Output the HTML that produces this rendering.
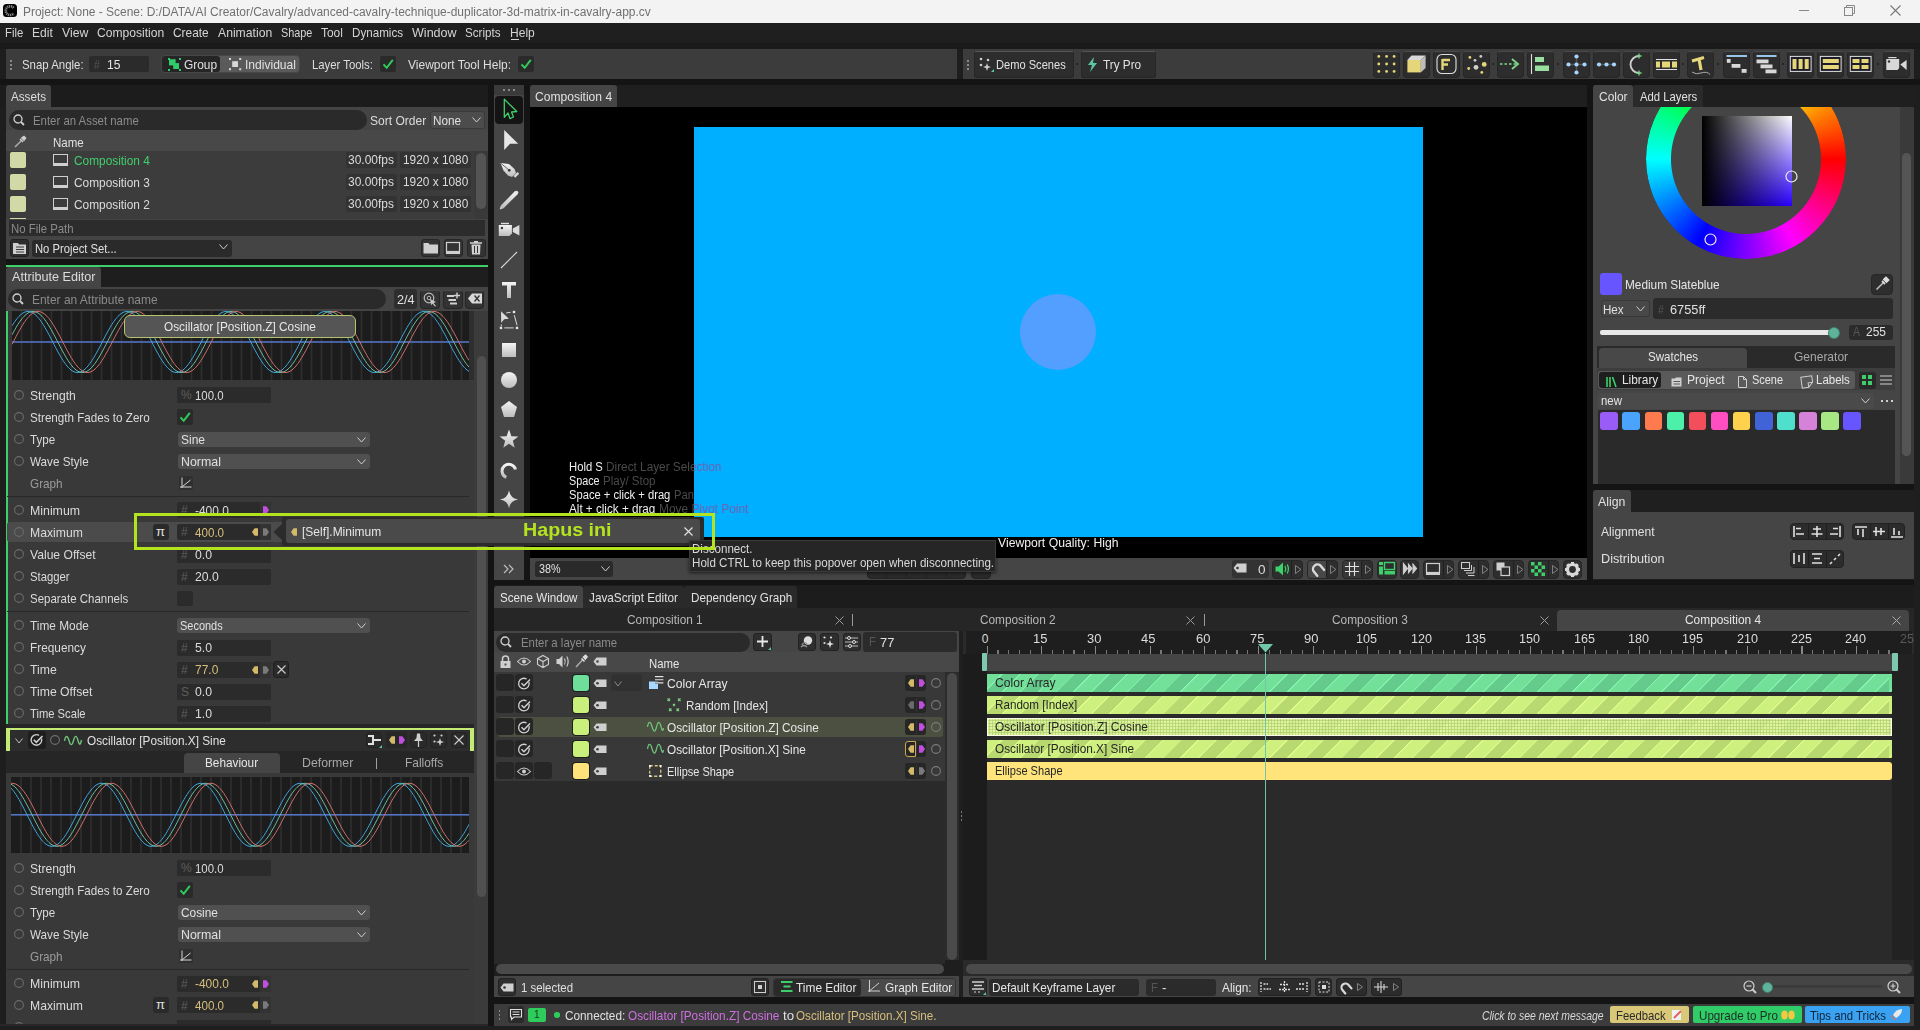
<!DOCTYPE html>
<html><head><meta charset="utf-8">
<style>
*{box-sizing:border-box;margin:0;padding:0}
html,body{width:1920px;height:1030px;overflow:hidden;background:#1e1e1e;font-family:"Liberation Sans",sans-serif;color:#d8d8d8;font-size:13px}
.a{position:absolute}
.t{position:absolute;white-space:nowrap;line-height:1}
svg{overflow:visible}
</style></head><body>
<div class="a" style="left:0px;top:0px;width:1920px;height:23px;background:#f3f3f3;"></div>
<div class="a" style="left:3.4px;top:4.2px;width:13.2px;height:13.3px;background:#000;border-radius:3.5px"></div>
<svg class="a" style="left:3.4px;top:4.2px;" width="13.2" height="13.3" viewBox="0 0 13.2 13.3"><path d="M10.6 3.9 A4.4 4.4 0 1 0 10.6 9.4" fill="none" stroke="#8a8a8a" stroke-width="2.6" stroke-dasharray="1.2 0.7"></path></svg>
<div class="t" style="left: 23px; top: 6.04px; font-size: 12px; color: rgb(112, 112, 112); transform: scaleX(0.9968); transform-origin: 0px 0px;">Project: None - Scene: D:/DATA/AI Creator/Cavalry/advanced-cavalry-technique-duplicator-3d-matrix-in-cavalry-app.cv</div>
<div class="a" style="left:1799px;top:10px;width:10px;height:1px;background:#888;"></div>
<svg class="a" style="left:1843px;top:5px;" width="12" height="12" viewBox="0 0 12 12"><rect x="1.5" y="2.5" width="8" height="8" fill="none" stroke="#888" stroke-width="1"></rect><path d="M3.5 2.5 V0.5 H11.5 V8.5 H9.5" fill="none" stroke="#888" stroke-width="1"></path></svg>
<svg class="a" style="left:1889.5px;top:4.5px;" width="11" height="11" viewBox="0 0 11 11"><path d="M0.5 0.5 L10.5 10.5 M10.5 0.5 L0.5 10.5" stroke="#777" stroke-width="1.1"></path></svg>
<div class="a" style="left:0px;top:23px;width:1920px;height:26px;background:#1f1f1f;"></div>
<div class="a" style="left:0px;top:42.5px;width:1920px;height:6.5px;background:#1a1a1a;"></div>
<div class="t" style="left: 4.7px; top: 25.8px; font-size: 13px; color: rgb(212, 212, 212); transform: scaleX(0.8714); transform-origin: 0px 0px;">File</div>
<div class="t" style="left: 32.3px; top: 25.8px; font-size: 13px; color: rgb(212, 212, 212); transform: scaleX(0.9273); transform-origin: 0px 0px;">Edit</div>
<div class="t" style="left: 62.3px; top: 25.8px; font-size: 13px; color: rgb(212, 212, 212); transform: scaleX(0.9429); transform-origin: 0px 0px;">View</div>
<div class="t" style="left: 97.3px; top: 25.8px; font-size: 13px; color: rgb(212, 212, 212); transform: scaleX(0.9306); transform-origin: 0px 0px;">Composition</div>
<div class="t" style="left: 173.3px; top: 25.8px; font-size: 13px; color: rgb(212, 212, 212); transform: scaleX(0.9154); transform-origin: 0px 0px;">Create</div>
<div class="t" style="left: 218.3px; top: 25.8px; font-size: 13px; color: rgb(212, 212, 212); transform: scaleX(0.9379); transform-origin: 0px 0px;">Animation</div>
<div class="t" style="left: 281px; top: 25.8px; font-size: 13px; color: rgb(212, 212, 212); transform: scaleX(0.8342); transform-origin: 0px 0px;">Shape</div>
<div class="t" style="left: 321.3px; top: 25.8px; font-size: 13px; color: rgb(212, 212, 212); transform: scaleX(0.9167); transform-origin: 0px 0px;">Tool</div>
<div class="t" style="left: 352.3px; top: 25.8px; font-size: 13px; color: rgb(212, 212, 212); transform: scaleX(0.8947); transform-origin: 0px 0px;">Dynamics</div>
<div class="t" style="left: 412.3px; top: 25.8px; font-size: 13px; color: rgb(212, 212, 212); transform: scaleX(0.9652); transform-origin: 0px 0px;">Window</div>
<div class="t" style="left: 465.3px; top: 25.8px; font-size: 13px; color: rgb(212, 212, 212); transform: scaleX(0.8925); transform-origin: 0px 0px;">Scripts</div>
<div class="t" style="left: 510.3px; top: 25.8px; font-size: 13px; color: rgb(212, 212, 212); transform: scaleX(0.9259); transform-origin: 0px 0px;">Help</div>
<div class="a" style="left:510.5px;top:38.6px;width:8.5px;height:1px;background:#d4d4d4;"></div>
<div class="a" style="left:0px;top:79px;width:1920px;height:6px;background:#141414;"></div>
<div class="a" style="left:6px;top:49px;width:951px;height:30px;background:#3c3c3c;"></div>
<div class="a" style="left:963px;top:49px;width:951px;height:30px;background:#3c3c3c;"></div>
<div class="a" style="left:10px;top:59.5px;width:2px;height:2.5px;background:#8a8a8a;"></div>
<div class="a" style="left:967px;top:59.5px;width:2px;height:2.5px;background:#8a8a8a;"></div>
<div class="a" style="left:10px;top:63.5px;width:2px;height:2.5px;background:#8a8a8a;"></div>
<div class="a" style="left:967px;top:63.5px;width:2px;height:2.5px;background:#8a8a8a;"></div>
<div class="a" style="left:10px;top:67.5px;width:2px;height:2.5px;background:#8a8a8a;"></div>
<div class="a" style="left:967px;top:67.5px;width:2px;height:2.5px;background:#8a8a8a;"></div>
<div class="t" style="left: 22px; top: 58px; font-size: 13px; color: rgb(222, 222, 222); transform: scaleX(0.8786); transform-origin: 0px 0px;">Snap Angle:</div>
<div class="a" style="left:89px;top:56px;width:60px;height:16px;background:#2b2b2b;border-radius:2px"></div>
<div class="t" style="left: 94px; top: 58.84px; font-size: 12px; color: rgb(85, 85, 85); transform: scaleX(0.8571); transform-origin: 0px 0px;">#</div>
<div class="t" style="left: 106.5px; top: 58px; font-size: 13px; color: rgb(230, 230, 230); transform: scaleX(0.9286); transform-origin: 0px 0px;">15</div>
<div class="a" style="left:161px;top:55px;width:139px;height:18px;background:#5a5a5a;border-radius:4px;border:1px solid #474747"></div>
<div class="a" style="left:162px;top:56px;width:58px;height:16px;background:#252525;border-radius:3px"></div>
<svg class="a" style="left:167.8px;top:57.8px;" width="13" height="13" viewBox="0 0 13 13"><g fill="#2ecc6a"><rect x="1" y="1.2" width="6.6" height="6.2"></rect><rect x="5.2" y="5.1" width="5.8" height="5.9"></rect><rect x="0" y="0" width="2" height="2"></rect><rect x="11" y="0" width="2" height="2"></rect><rect x="0" y="11" width="2" height="2"></rect><rect x="11" y="11" width="2" height="2"></rect></g></svg>
<div class="t" style="left: 184px; top: 58px; font-size: 13px; color: rgb(224, 224, 224); transform: scaleX(0.9167); transform-origin: 0px 0px;">Group</div>
<svg class="a" style="left:228.8px;top:57.8px;" width="13" height="13" viewBox="0 0 13 13"><g fill="#d8d8d8"><rect x="3.2" y="3.2" width="5.8" height="5.8"></rect><rect x="0" y="0" width="2" height="2"></rect><rect x="10.2" y="0" width="2" height="2"></rect><rect x="0" y="10.2" width="2" height="2"></rect><rect x="10.2" y="10.2" width="2" height="2"></rect></g></svg>
<div class="t" style="left: 245px; top: 58px; font-size: 13px; color: rgb(224, 224, 224); transform: scaleX(0.9273); transform-origin: 0px 0px;">Individual</div>
<div class="t" style="left: 312px; top: 58px; font-size: 13px; color: rgb(222, 222, 222); transform: scaleX(0.8714); transform-origin: 0px 0px;">Layer Tools:</div>
<div class="a" style="left:380px;top:56px;width:16px;height:16px;background:#2a2a2a;border-radius:2px"></div>
<svg class="a" style="left:380px;top:56px;" width="16" height="16" viewBox="0 0 16 16"><path d="M3.5 8.3 L6.7 11.8 L12.8 3.8" fill="none" stroke="#2ecc5a" stroke-width="2"></path></svg>
<div class="t" style="left: 408px; top: 58px; font-size: 13px; color: rgb(222, 222, 222); transform: scaleX(0.9241); transform-origin: 0px 0px;">Viewport Tool Help:</div>
<div class="a" style="left:518px;top:56px;width:16px;height:16px;background:#2a2a2a;border-radius:2px"></div>
<svg class="a" style="left:518px;top:56px;" width="16" height="16" viewBox="0 0 16 16"><path d="M3.5 8.3 L6.7 11.8 L12.8 3.8" fill="none" stroke="#2ecc5a" stroke-width="2"></path></svg>
<div class="a" style="left:974px;top:51px;width:100px;height:27px;background:#2d2d2d;border-radius:3px;border:1px solid #262626;border-top-color:#555"></div>
<svg class="a" style="left:979px;top:57px;" width="16" height="16" viewBox="0 0 16 16"><g fill="#cfcfcf"><circle cx="2" cy="2" r="1.3"></circle><circle cx="9" cy="3" r="1.3"></circle><circle cx="2" cy="8" r="1.3"></circle><path d="M8 6 L9 9 L12 10 L9 11 L8 14 L7 11 L4 10 L7 9Z"></path></g><path d="M12 15 L15 12 L15 15Z" fill="#5cc8a0"></path></svg>
<div class="t" style="left: 996px; top: 58px; font-size: 13px; color: rgb(224, 224, 224); transform: scaleX(0.8537); transform-origin: 0px 0px;">Demo Scenes</div>
<div class="a" style="left:1076px;top:63px;width:2px;height:2px;background:#222;"></div>
<div class="a" style="left:1081px;top:51px;width:75px;height:27px;background:#2d2d2d;border-radius:3px;border:1px solid #262626;border-top-color:#555"></div>
<svg class="a" style="left:1088px;top:57px;" width="9" height="15" viewBox="0 0 9 15"><path d="M6 0 L0 8 L4 8 L2 15 L9 6 L5 6 Z" fill="#5cc8a0"></path></svg>
<div class="t" style="left: 1103px; top: 58px; font-size: 13px; color: rgb(224, 224, 224); transform: scaleX(0.9048); transform-origin: 0px 0px;">Try Pro</div>
<div class="a" style="left:1373px;top:51px;width:27px;height:27px;background:#2d2d2d;border-radius:4px;border:1px solid #262626;border-top-color:#4a4a4a"></div>
<div class="a" style="left:1403px;top:51px;width:27px;height:27px;background:#2d2d2d;border-radius:4px;border:1px solid #262626;border-top-color:#4a4a4a"></div>
<div class="a" style="left:1433px;top:51px;width:27px;height:27px;background:#2d2d2d;border-radius:4px;border:1px solid #262626;border-top-color:#4a4a4a"></div>
<div class="a" style="left:1463px;top:51px;width:27px;height:27px;background:#2d2d2d;border-radius:4px;border:1px solid #262626;border-top-color:#4a4a4a"></div>
<div class="a" style="left:1497px;top:51px;width:27px;height:27px;background:#2d2d2d;border-radius:4px;border:1px solid #262626;border-top-color:#4a4a4a"></div>
<div class="a" style="left:1527px;top:51px;width:27px;height:27px;background:#2d2d2d;border-radius:4px;border:1px solid #262626;border-top-color:#4a4a4a"></div>
<div class="a" style="left:1563px;top:51px;width:27px;height:27px;background:#2d2d2d;border-radius:4px;border:1px solid #262626;border-top-color:#4a4a4a"></div>
<div class="a" style="left:1593px;top:51px;width:27px;height:27px;background:#2d2d2d;border-radius:4px;border:1px solid #262626;border-top-color:#4a4a4a"></div>
<div class="a" style="left:1623px;top:51px;width:27px;height:27px;background:#2d2d2d;border-radius:4px;border:1px solid #262626;border-top-color:#4a4a4a"></div>
<div class="a" style="left:1653px;top:51px;width:27px;height:27px;background:#2d2d2d;border-radius:4px;border:1px solid #262626;border-top-color:#4a4a4a"></div>
<div class="a" style="left:1687px;top:51px;width:27px;height:27px;background:#2d2d2d;border-radius:4px;border:1px solid #262626;border-top-color:#4a4a4a"></div>
<div class="a" style="left:1723px;top:51px;width:27px;height:27px;background:#2d2d2d;border-radius:4px;border:1px solid #262626;border-top-color:#4a4a4a"></div>
<div class="a" style="left:1753px;top:51px;width:27px;height:27px;background:#2d2d2d;border-radius:4px;border:1px solid #262626;border-top-color:#4a4a4a"></div>
<div class="a" style="left:1787px;top:51px;width:27px;height:27px;background:#2d2d2d;border-radius:4px;border:1px solid #262626;border-top-color:#4a4a4a"></div>
<div class="a" style="left:1817px;top:51px;width:27px;height:27px;background:#2d2d2d;border-radius:4px;border:1px solid #262626;border-top-color:#4a4a4a"></div>
<div class="a" style="left:1847px;top:51px;width:27px;height:27px;background:#2d2d2d;border-radius:4px;border:1px solid #262626;border-top-color:#4a4a4a"></div>
<div class="a" style="left:1883px;top:51px;width:27px;height:27px;background:#2d2d2d;border-radius:4px;border:1px solid #262626;border-top-color:#4a4a4a"></div>
<div class="a" style="left:1492px;top:63px;width:2px;height:2px;background:#252525;"></div>
<div class="a" style="left:1557px;top:63px;width:2px;height:2px;background:#252525;"></div>
<div class="a" style="left:1682px;top:63px;width:2px;height:2px;background:#252525;"></div>
<div class="a" style="left:1717px;top:63px;width:2px;height:2px;background:#252525;"></div>
<div class="a" style="left:1782px;top:63px;width:2px;height:2px;background:#252525;"></div>
<div class="a" style="left:1877px;top:63px;width:2px;height:2px;background:#252525;"></div>
<div class="a" style="left:0px;top:85px;width:1920px;height:22px;background:#1c1c1c;"></div>
<div class="a" style="left:6px;top:85px;width:45px;height:22px;background:#454545;border-radius:3px 3px 0 0"></div>
<div class="t" style="left: 11px; top: 90px; font-size: 13px; color: rgb(220, 220, 220); transform: scaleX(0.8974); transform-origin: 0px 0px;">Assets</div>
<div class="a" style="left:6px;top:107px;width:482px;height:152px;background:#444444;"></div>
<div class="a" style="left:9px;top:110px;width:358px;height:20px;background:#2a2a2a;border-radius:10px"></div>
<svg class="a" style="left:13px;top:114px;" width="12" height="12" viewBox="0 0 12 12"><circle cx="5" cy="5" r="4" fill="none" stroke="#cfcfcf" stroke-width="1.3"></circle><path d="M8 8 L11 11" stroke="#cfcfcf" stroke-width="1.8"></path></svg>
<div class="t" style="left: 33.3px; top: 113.8px; font-size: 13px; color: rgb(140, 140, 140); transform: scaleX(0.876); transform-origin: 0px 0px;">Enter an Asset name</div>
<div class="t" style="left: 370px; top: 113.8px; font-size: 13px; color: rgb(220, 220, 220); transform: scaleX(0.9262); transform-origin: 0px 0px;">Sort Order</div>
<div class="a" style="left:430px;top:111px;width:55px;height:18px;background:#4c4c4c;border-radius:3px;border:1px solid #3a3a3a"></div>
<div class="t" style="left: 433px; top: 113.8px; font-size: 13px; color: rgb(224, 224, 224); transform: scaleX(0.9032); transform-origin: 0px 0px;">None</div>
<svg class="a" style="left:472px;top:117px;" width="9" height="6" viewBox="0 0 9 6"><path d="M0.5 0.5 L4.5 5 L8.5 0.5" fill="none" stroke="#cfcfcf" stroke-width="1"></path></svg>
<div class="a" style="left:6px;top:130px;width:482px;height:21px;background:#484848;"></div>
<svg class="a" style="left:14px;top:136px;" width="12" height="12" viewBox="0 0 12 12"><path d="M1 11 L7 5" stroke="#aaa" stroke-width="1.6"></path><path d="M6 3 L9 6 M8 2 L10 0.5 L11.5 2 L10 4Z" stroke="#ccc" stroke-width="1.6" fill="#ccc"></path></svg>
<div class="t" style="left: 53px; top: 136px; font-size: 13px; color: rgb(224, 224, 224); transform: scaleX(0.8857); transform-origin: 0px 0px;">Name</div>
<div class="a" style="left:6px;top:151px;width:468px;height:68px;background:#3c3c3c;"></div>
<div class="a" style="left:474px;top:151px;width:14px;height:68px;background:#393939;"></div>
<div class="a" style="left:476px;top:153px;width:10px;height:56px;background:#545454;border-radius:5px"></div>
<div class="a" style="left:10px;top:152px;width:16px;height:16px;background:#d2d9a6;border-radius:2px"></div>
<svg class="a" style="left:53px;top:154px;" width="15" height="12" viewBox="0 0 15 12"><rect x="0.5" y="0.5" width="14" height="9" fill="none" stroke="#cfcfcf" stroke-width="1"></rect><rect x="0" y="10" width="15" height="2" fill="#cfcfcf"></rect></svg>
<div class="t" style="left: 74.3px; top: 154.2px; font-size: 13px; color: rgb(63, 207, 107); transform: scaleX(0.912); transform-origin: 0px 0px;">Composition 4</div>
<div class="a" style="left:346px;top:152px;width:51px;height:16px;background:#333333;border-radius:2px"></div>
<div class="t" style="left: 348px; top: 152.5px; font-size: 13px; color: rgb(220, 220, 220); transform: scaleX(0.92); transform-origin: 0px 0px;">30.00fps</div>
<div class="a" style="left:400px;top:152px;width:71px;height:16px;background:#333333;border-radius:2px"></div>
<div class="t" style="left: 402.6px; top: 152.5px; font-size: 13px; color: rgb(220, 220, 220); transform: scaleX(0.9125); transform-origin: 0px 0px;">1920 x 1080</div>
<div class="a" style="left:10px;top:174px;width:16px;height:16px;background:#d2d9a6;border-radius:2px"></div>
<svg class="a" style="left:53px;top:176px;" width="15" height="12" viewBox="0 0 15 12"><rect x="0.5" y="0.5" width="14" height="9" fill="none" stroke="#cfcfcf" stroke-width="1"></rect><rect x="0" y="10" width="15" height="2" fill="#cfcfcf"></rect></svg>
<div class="t" style="left: 74.3px; top: 176.2px; font-size: 13px; color: rgb(220, 220, 220); transform: scaleX(0.912); transform-origin: 0px 0px;">Composition 3</div>
<div class="a" style="left:346px;top:174px;width:51px;height:16px;background:#333333;border-radius:2px"></div>
<div class="t" style="left: 348px; top: 174.5px; font-size: 13px; color: rgb(220, 220, 220); transform: scaleX(0.92); transform-origin: 0px 0px;">30.00fps</div>
<div class="a" style="left:400px;top:174px;width:71px;height:16px;background:#333333;border-radius:2px"></div>
<div class="t" style="left: 402.6px; top: 174.5px; font-size: 13px; color: rgb(220, 220, 220); transform: scaleX(0.9125); transform-origin: 0px 0px;">1920 x 1080</div>
<div class="a" style="left:10px;top:196px;width:16px;height:16px;background:#d2d9a6;border-radius:2px"></div>
<svg class="a" style="left:53px;top:198px;" width="15" height="12" viewBox="0 0 15 12"><rect x="0.5" y="0.5" width="14" height="9" fill="none" stroke="#cfcfcf" stroke-width="1"></rect><rect x="0" y="10" width="15" height="2" fill="#cfcfcf"></rect></svg>
<div class="t" style="left: 74.3px; top: 198.2px; font-size: 13px; color: rgb(220, 220, 220); transform: scaleX(0.912); transform-origin: 0px 0px;">Composition 2</div>
<div class="a" style="left:346px;top:196px;width:51px;height:16px;background:#333333;border-radius:2px"></div>
<div class="t" style="left: 348px; top: 196.5px; font-size: 13px; color: rgb(220, 220, 220); transform: scaleX(0.92); transform-origin: 0px 0px;">30.00fps</div>
<div class="a" style="left:400px;top:196px;width:71px;height:16px;background:#333333;border-radius:2px"></div>
<div class="t" style="left: 402.6px; top: 196.5px; font-size: 13px; color: rgb(220, 220, 220); transform: scaleX(0.9125); transform-origin: 0px 0px;">1920 x 1080</div>
<div class="a" style="left:10px;top:218px;width:16px;height:1px;background:#d2d9a6;"></div>
<div class="a" style="left:9px;top:220px;width:476px;height:16px;background:#2c2c2c;"></div>
<div class="t" style="left: 11.2px; top: 221.9px; font-size: 13px; color: rgb(138, 138, 138); transform: scaleX(0.875); transform-origin: 0px 0px;">No File Path</div>
<div class="a" style="left:10px;top:239px;width:19px;height:18px;background:#2d2d2d;border-radius:3px;border:1px solid #222"></div>
<svg class="a" style="left:12px;top:241px;" width="15" height="14" viewBox="0 0 15 14"><path d="M1 2 H6 L7 3.5 H14 V13 H1Z" fill="#cfcfcf"></path><path d="M4 6 H12 M4 8.5 H12 M4 11 H12" stroke="#3a3a3a" stroke-width="1.2"></path></svg>
<div class="a" style="left:32px;top:239.5px;width:200px;height:17px;background:#2a2a2a;border-radius:3px"></div>
<div class="t" style="left: 35.2px; top: 241.7px; font-size: 13px; color: rgb(224, 224, 224); transform: scaleX(0.8632); transform-origin: 0px 0px;">No Project Set...</div>
<svg class="a" style="left:219px;top:244px;" width="9" height="6" viewBox="0 0 9 6"><path d="M0.5 0.5 L4.5 5 L8.5 0.5" fill="none" stroke="#cfcfcf" stroke-width="1"></path></svg>
<div class="a" style="left:420.5px;top:238.6px;width:19.3px;height:18.5px;background:#333;border-radius:3px;border:1px solid #262626"></div>
<div class="a" style="left:443.5px;top:238.6px;width:19.3px;height:18.5px;background:#333;border-radius:3px;border:1px solid #262626"></div>
<div class="a" style="left:466.5px;top:238.6px;width:19.3px;height:18.5px;background:#333;border-radius:3px;border:1px solid #262626"></div>
<svg class="a" style="left:423px;top:242px;" width="16" height="12" viewBox="0 0 16 12"><path d="M0.5 1 H5.5 L6.5 2.5 H15 V11.5 H0.5Z" fill="#cfcfcf"></path></svg>
<svg class="a" style="left:446px;top:242px;" width="14" height="12" viewBox="0 0 14 12"><rect x="0.5" y="0.5" width="13" height="9" fill="none" stroke="#cfcfcf" stroke-width="1.2"></rect><rect x="0" y="10" width="14" height="2" fill="#cfcfcf"></rect></svg>
<svg class="a" style="left:470px;top:241px;" width="12" height="14" viewBox="0 0 12 14"><path d="M0 2 H12 M4 0.8 H8" stroke="#cfcfcf" stroke-width="1.5"></path><path d="M1.5 3.5 H10.5 L10 13.5 H2Z" fill="#cfcfcf"></path><path d="M4.5 5 V12 M7.5 5 V12" stroke="#333" stroke-width="1"></path></svg>
<div class="a" style="left:6px;top:259px;width:482px;height:6px;background:#141414;"></div>
<div class="a" style="left:6px;top:265px;width:482px;height:2px;background:#3ecf6a;"></div>
<div class="a" style="left:6px;top:267px;width:95px;height:20px;background:#454545;border-radius:3px 3px 0 0"></div>
<div class="t" style="left: 11.5px; top: 270px; font-size: 13px; color: rgb(220, 220, 220); transform: scaleX(0.9709); transform-origin: 0px 0px;">Attribute Editor</div>
<div class="a" style="left:6px;top:287px;width:482px;height:738px;background:#393939;"></div>
<div class="a" style="left:6px;top:287px;width:482px;height:24px;background:#444444;"></div>
<div class="a" style="left:8px;top:289px;width:378px;height:20px;background:#2a2a2a;border-radius:10px"></div>
<svg class="a" style="left:12px;top:293px;" width="12" height="12" viewBox="0 0 12 12"><circle cx="5" cy="5" r="4" fill="none" stroke="#cfcfcf" stroke-width="1.3"></circle><path d="M8 8 L11 11" stroke="#cfcfcf" stroke-width="1.8"></path></svg>
<div class="t" style="left: 32.2px; top: 292.5px; font-size: 13px; color: rgb(138, 138, 138); transform: scaleX(0.9197); transform-origin: 0px 0px;">Enter an Attribute name</div>
<div class="a" style="left:394px;top:289px;width:23px;height:20px;background:#2e2e2e;border-radius:3px"></div>
<div class="t" style="left: 396.5px; top: 292.8px; font-size: 13px; color: rgb(224, 224, 224); transform: scaleX(0.9722); transform-origin: 0px 0px;">2/4</div>
<div class="a" style="left:420.3px;top:289.5px;width:19.3px;height:19.3px;background:#333;border-radius:4px;border:1px solid #262626;border-top-color:#4a4a4a"></div>
<div class="a" style="left:443.4px;top:289.5px;width:19.3px;height:19.3px;background:#333;border-radius:4px;border:1px solid #262626;border-top-color:#4a4a4a"></div>
<div class="a" style="left:465.1px;top:289.5px;width:19.3px;height:19.3px;background:#333;border-radius:4px;border:1px solid #262626;border-top-color:#4a4a4a"></div>
<svg class="a" style="left:423px;top:292px;" width="15" height="15" viewBox="0 0 15 15"><circle cx="6" cy="6" r="4.8" fill="none" stroke="#bbb" stroke-width="1.2"></circle><circle cx="6" cy="6" r="1.8" fill="none" stroke="#bbb" stroke-width="1"></circle><path d="M7 7 L13 10 L10.5 11 L13 14 L12 14.5 L9.5 11.5 L8.5 13.5Z" fill="#ccc"></path></svg>
<svg class="a" style="left:447px;top:292px;" width="14" height="13" viewBox="0 0 14 13"><path d="M0 4 H7 M1.5 8 H9 M3 11.5 H10" stroke="#d0d0d0" stroke-width="2"></path><path d="M10 0.5 V6.5 M7 3.5 H13" stroke="#d0d0d0" stroke-width="1.4"></path></svg>
<svg class="a" style="left:468px;top:293px;" width="14" height="11" viewBox="0 0 14 11"><path d="M0 5.5 L4 0.5 H14 V10.5 H4Z" fill="#d8d8d8"></path><path d="M6.5 2.5 L11.5 8.5 M11.5 2.5 L6.5 8.5" stroke="#333" stroke-width="1.3"></path></svg>
<div class="a" style="left:469px;top:311px;width:5px;height:69px;background:#2e2e2e;"></div>
<div class="a" style="left:474px;top:311px;width:14px;height:714px;background:#3b3b3b;"></div>
<div class="a" style="left:476.5px;top:356px;width:9.5px;height:541px;background:#505050;border-radius:5px"></div>
<div class="a" style="left:6px;top:311px;width:1.5px;height:714px;background:#3ecf6a;"></div>
<div class="a" style="left:11.5px;top:311px;width:457.5px;height:69px;background:#1c1c1c;"></div>
<svg class="a" style="left:11.5px;top:311px;overflow:hidden" width="457.5" height="69"><rect x="8.600000000000001" y="0" width="1.8" height="69" fill="#2e2e2e"></rect><rect x="18.6" y="0" width="1.8" height="69" fill="#2e2e2e"></rect><rect x="28.6" y="0" width="1.8" height="69" fill="#2e2e2e"></rect><rect x="38.6" y="0" width="1.8" height="69" fill="#2e2e2e"></rect><rect x="48.6" y="0" width="1.8" height="69" fill="#2e2e2e"></rect><rect x="58.599999999999994" y="0" width="1.8" height="69" fill="#2e2e2e"></rect><rect x="68.6" y="0" width="1.8" height="69" fill="#2e2e2e"></rect><rect x="78.6" y="0" width="1.8" height="69" fill="#2e2e2e"></rect><rect x="88.6" y="0" width="1.8" height="69" fill="#2e2e2e"></rect><rect x="98.6" y="0" width="1.8" height="69" fill="#2e2e2e"></rect><rect x="108.6" y="0" width="1.8" height="69" fill="#2e2e2e"></rect><rect x="118.6" y="0" width="1.8" height="69" fill="#2e2e2e"></rect><rect x="128.6" y="0" width="1.8" height="69" fill="#2e2e2e"></rect><rect x="138.6" y="0" width="1.8" height="69" fill="#2e2e2e"></rect><rect x="148.6" y="0" width="1.8" height="69" fill="#2e2e2e"></rect><rect x="158.6" y="0" width="1.8" height="69" fill="#2e2e2e"></rect><rect x="168.6" y="0" width="1.8" height="69" fill="#2e2e2e"></rect><rect x="178.6" y="0" width="1.8" height="69" fill="#2e2e2e"></rect><rect x="188.6" y="0" width="1.8" height="69" fill="#2e2e2e"></rect><rect x="198.6" y="0" width="1.8" height="69" fill="#2e2e2e"></rect><rect x="208.6" y="0" width="1.8" height="69" fill="#2e2e2e"></rect><rect x="218.6" y="0" width="1.8" height="69" fill="#2e2e2e"></rect><rect x="228.6" y="0" width="1.8" height="69" fill="#2e2e2e"></rect><rect x="238.6" y="0" width="1.8" height="69" fill="#2e2e2e"></rect><rect x="248.60000000000002" y="0" width="1.8" height="69" fill="#2e2e2e"></rect><rect x="258.6" y="0" width="1.8" height="69" fill="#2e2e2e"></rect><rect x="268.6" y="0" width="1.8" height="69" fill="#2e2e2e"></rect><rect x="278.6" y="0" width="1.8" height="69" fill="#2e2e2e"></rect><rect x="288.6" y="0" width="1.8" height="69" fill="#2e2e2e"></rect><rect x="298.6" y="0" width="1.8" height="69" fill="#2e2e2e"></rect><rect x="308.6" y="0" width="1.8" height="69" fill="#2e2e2e"></rect><rect x="318.6" y="0" width="1.8" height="69" fill="#2e2e2e"></rect><rect x="328.6" y="0" width="1.8" height="69" fill="#2e2e2e"></rect><rect x="338.6" y="0" width="1.8" height="69" fill="#2e2e2e"></rect><rect x="348.6" y="0" width="1.8" height="69" fill="#2e2e2e"></rect><rect x="358.6" y="0" width="1.8" height="69" fill="#2e2e2e"></rect><rect x="368.6" y="0" width="1.8" height="69" fill="#2e2e2e"></rect><rect x="378.6" y="0" width="1.8" height="69" fill="#2e2e2e"></rect><rect x="388.6" y="0" width="1.8" height="69" fill="#2e2e2e"></rect><rect x="398.6" y="0" width="1.8" height="69" fill="#2e2e2e"></rect><rect x="408.6" y="0" width="1.8" height="69" fill="#2e2e2e"></rect><rect x="418.6" y="0" width="1.8" height="69" fill="#2e2e2e"></rect><rect x="428.6" y="0" width="1.8" height="69" fill="#2e2e2e"></rect><rect x="438.6" y="0" width="1.8" height="69" fill="#2e2e2e"></rect><rect x="448.6" y="0" width="1.8" height="69" fill="#2e2e2e"></rect><rect x="0" y="30.2" width="457.5" height="1.6" fill="#5272c4"></rect><polyline points="0.0,14.92 1.0,13.31 2.0,11.77 3.0,10.31 4.0,8.93 5.0,7.64 6.0,6.44 7.0,5.34 8.0,4.35 9.0,3.46 10.0,2.68 11.0,2.02 12.0,1.48 13.0,1.05 14.0,0.75 15.0,0.56 16.0,0.50 17.0,0.56 18.0,0.75 19.0,1.05 20.0,1.48 21.0,2.02 22.0,2.68 23.0,3.46 24.0,4.35 25.0,5.34 26.0,6.44 27.0,7.64 28.0,8.93 29.0,10.31 30.0,11.77 31.0,13.31 32.0,14.92 33.0,16.60 34.0,18.33 35.0,20.11 36.0,21.94 37.0,23.81 38.0,25.70 39.0,27.62 40.0,29.55 41.0,31.48 42.0,33.42 43.0,35.34 44.0,37.25 45.0,39.13 46.0,40.98 47.0,42.78 48.0,44.54 49.0,46.25 50.0,47.89 51.0,49.47 52.0,50.97 53.0,52.39 54.0,53.73 55.0,54.97 56.0,56.12 57.0,57.17 58.0,58.11 59.0,58.94 60.0,59.66 61.0,60.26 62.0,60.75 63.0,61.12 64.0,61.36 65.0,61.48 66.0,61.48 67.0,61.36 68.0,61.12 69.0,60.75 70.0,60.26 71.0,59.66 72.0,58.94 73.0,58.11 74.0,57.17 75.0,56.12 76.0,54.97 77.0,53.73 78.0,52.39 79.0,50.97 80.0,49.47 81.0,47.89 82.0,46.25 83.0,44.54 84.0,42.78 85.0,40.98 86.0,39.13 87.0,37.25 88.0,35.34 89.0,33.42 90.0,31.48 91.0,29.55 92.0,27.62 93.0,25.70 94.0,23.81 95.0,21.94 96.0,20.11 97.0,18.33 98.0,16.60 99.0,14.92 100.0,13.31 101.0,11.77 102.0,10.31 103.0,8.93 104.0,7.64 105.0,6.44 106.0,5.34 107.0,4.35 108.0,3.46 109.0,2.68 110.0,2.02 111.0,1.48 112.0,1.05 113.0,0.75 114.0,0.56 115.0,0.50 116.0,0.56 117.0,0.75 118.0,1.05 119.0,1.48 120.0,2.02 121.0,2.68 122.0,3.46 123.0,4.35 124.0,5.34 125.0,6.44 126.0,7.64 127.0,8.93 128.0,10.31 129.0,11.77 130.0,13.31 131.0,14.92 132.0,16.60 133.0,18.33 134.0,20.11 135.0,21.94 136.0,23.81 137.0,25.70 138.0,27.62 139.0,29.55 140.0,31.48 141.0,33.42 142.0,35.34 143.0,37.25 144.0,39.13 145.0,40.98 146.0,42.78 147.0,44.54 148.0,46.25 149.0,47.89 150.0,49.47 151.0,50.97 152.0,52.39 153.0,53.73 154.0,54.97 155.0,56.12 156.0,57.17 157.0,58.11 158.0,58.94 159.0,59.66 160.0,60.26 161.0,60.75 162.0,61.12 163.0,61.36 164.0,61.48 165.0,61.48 166.0,61.36 167.0,61.12 168.0,60.75 169.0,60.26 170.0,59.66 171.0,58.94 172.0,58.11 173.0,57.17 174.0,56.12 175.0,54.97 176.0,53.73 177.0,52.39 178.0,50.97 179.0,49.47 180.0,47.89 181.0,46.25 182.0,44.54 183.0,42.78 184.0,40.98 185.0,39.13 186.0,37.25 187.0,35.34 188.0,33.42 189.0,31.48 190.0,29.55 191.0,27.62 192.0,25.70 193.0,23.81 194.0,21.94 195.0,20.11 196.0,18.33 197.0,16.60 198.0,14.92 199.0,13.31 200.0,11.77 201.0,10.31 202.0,8.93 203.0,7.64 204.0,6.44 205.0,5.34 206.0,4.35 207.0,3.46 208.0,2.68 209.0,2.02 210.0,1.48 211.0,1.05 212.0,0.75 213.0,0.56 214.0,0.50 215.0,0.56 216.0,0.75 217.0,1.05 218.0,1.48 219.0,2.02 220.0,2.68 221.0,3.46 222.0,4.35 223.0,5.34 224.0,6.44 225.0,7.64 226.0,8.93 227.0,10.31 228.0,11.77 229.0,13.31 230.0,14.92 231.0,16.60 232.0,18.33 233.0,20.11 234.0,21.94 235.0,23.81 236.0,25.70 237.0,27.62 238.0,29.55 239.0,31.48 240.0,33.42 241.0,35.34 242.0,37.25 243.0,39.13 244.0,40.98 245.0,42.78 246.0,44.54 247.0,46.25 248.0,47.89 249.0,49.47 250.0,50.97 251.0,52.39 252.0,53.73 253.0,54.97 254.0,56.12 255.0,57.17 256.0,58.11 257.0,58.94 258.0,59.66 259.0,60.26 260.0,60.75 261.0,61.12 262.0,61.36 263.0,61.48 264.0,61.48 265.0,61.36 266.0,61.12 267.0,60.75 268.0,60.26 269.0,59.66 270.0,58.94 271.0,58.11 272.0,57.17 273.0,56.12 274.0,54.97 275.0,53.73 276.0,52.39 277.0,50.97 278.0,49.47 279.0,47.89 280.0,46.25 281.0,44.54 282.0,42.78 283.0,40.98 284.0,39.13 285.0,37.25 286.0,35.34 287.0,33.42 288.0,31.48 289.0,29.55 290.0,27.62 291.0,25.70 292.0,23.81 293.0,21.94 294.0,20.11 295.0,18.33 296.0,16.60 297.0,14.92 298.0,13.31 299.0,11.77 300.0,10.31 301.0,8.93 302.0,7.64 303.0,6.44 304.0,5.34 305.0,4.35 306.0,3.46 307.0,2.68 308.0,2.02 309.0,1.48 310.0,1.05 311.0,0.75 312.0,0.56 313.0,0.50 314.0,0.56 315.0,0.75 316.0,1.05 317.0,1.48 318.0,2.02 319.0,2.68 320.0,3.46 321.0,4.35 322.0,5.34 323.0,6.44 324.0,7.64 325.0,8.93 326.0,10.31 327.0,11.77 328.0,13.31 329.0,14.92 330.0,16.60 331.0,18.33 332.0,20.11 333.0,21.94 334.0,23.81 335.0,25.70 336.0,27.62 337.0,29.55 338.0,31.48 339.0,33.42 340.0,35.34 341.0,37.25 342.0,39.13 343.0,40.98 344.0,42.78 345.0,44.54 346.0,46.25 347.0,47.89 348.0,49.47 349.0,50.97 350.0,52.39 351.0,53.73 352.0,54.97 353.0,56.12 354.0,57.17 355.0,58.11 356.0,58.94 357.0,59.66 358.0,60.26 359.0,60.75 360.0,61.12 361.0,61.36 362.0,61.48 363.0,61.48 364.0,61.36 365.0,61.12 366.0,60.75 367.0,60.26 368.0,59.66 369.0,58.94 370.0,58.11 371.0,57.17 372.0,56.12 373.0,54.97 374.0,53.73 375.0,52.39 376.0,50.97 377.0,49.47 378.0,47.89 379.0,46.25 380.0,44.54 381.0,42.78 382.0,40.98 383.0,39.13 384.0,37.25 385.0,35.34 386.0,33.42 387.0,31.48 388.0,29.55 389.0,27.62 390.0,25.70 391.0,23.81 392.0,21.94 393.0,20.11 394.0,18.33 395.0,16.60 396.0,14.92 397.0,13.31 398.0,11.77 399.0,10.31 400.0,8.93 401.0,7.64 402.0,6.44 403.0,5.34 404.0,4.35 405.0,3.46 406.0,2.68 407.0,2.02 408.0,1.48 409.0,1.05 410.0,0.75 411.0,0.56 412.0,0.50 413.0,0.56 414.0,0.75 415.0,1.05 416.0,1.48 417.0,2.02 418.0,2.68 419.0,3.46 420.0,4.35 421.0,5.34 422.0,6.44 423.0,7.64 424.0,8.93 425.0,10.31 426.0,11.77 427.0,13.31 428.0,14.92 429.0,16.60 430.0,18.33 431.0,20.11 432.0,21.94 433.0,23.81 434.0,25.70 435.0,27.62 436.0,29.55 437.0,31.48 438.0,33.42 439.0,35.34 440.0,37.25 441.0,39.13 442.0,40.98 443.0,42.78 444.0,44.54 445.0,46.25 446.0,47.89 447.0,49.47 448.0,50.97 449.0,52.39 450.0,53.73 451.0,54.97 452.0,56.12 453.0,57.17 454.0,58.11 455.0,58.94 456.0,59.66 457.0,60.26" fill="none" stroke="#3fa6e0" stroke-width="1"></polyline><polyline points="0.0,23.81 1.0,21.94 2.0,20.11 3.0,18.33 4.0,16.60 5.0,14.92 6.0,13.31 7.0,11.77 8.0,10.31 9.0,8.93 10.0,7.64 11.0,6.44 12.0,5.34 13.0,4.35 14.0,3.46 15.0,2.68 16.0,2.02 17.0,1.48 18.0,1.05 19.0,0.75 20.0,0.56 21.0,0.50 22.0,0.56 23.0,0.75 24.0,1.05 25.0,1.48 26.0,2.02 27.0,2.68 28.0,3.46 29.0,4.35 30.0,5.34 31.0,6.44 32.0,7.64 33.0,8.93 34.0,10.31 35.0,11.77 36.0,13.31 37.0,14.92 38.0,16.60 39.0,18.33 40.0,20.11 41.0,21.94 42.0,23.81 43.0,25.70 44.0,27.62 45.0,29.55 46.0,31.48 47.0,33.42 48.0,35.34 49.0,37.25 50.0,39.13 51.0,40.98 52.0,42.78 53.0,44.54 54.0,46.25 55.0,47.89 56.0,49.47 57.0,50.97 58.0,52.39 59.0,53.73 60.0,54.97 61.0,56.12 62.0,57.17 63.0,58.11 64.0,58.94 65.0,59.66 66.0,60.26 67.0,60.75 68.0,61.12 69.0,61.36 70.0,61.48 71.0,61.48 72.0,61.36 73.0,61.12 74.0,60.75 75.0,60.26 76.0,59.66 77.0,58.94 78.0,58.11 79.0,57.17 80.0,56.12 81.0,54.97 82.0,53.73 83.0,52.39 84.0,50.97 85.0,49.47 86.0,47.89 87.0,46.25 88.0,44.54 89.0,42.78 90.0,40.98 91.0,39.13 92.0,37.25 93.0,35.34 94.0,33.42 95.0,31.48 96.0,29.55 97.0,27.62 98.0,25.70 99.0,23.81 100.0,21.94 101.0,20.11 102.0,18.33 103.0,16.60 104.0,14.92 105.0,13.31 106.0,11.77 107.0,10.31 108.0,8.93 109.0,7.64 110.0,6.44 111.0,5.34 112.0,4.35 113.0,3.46 114.0,2.68 115.0,2.02 116.0,1.48 117.0,1.05 118.0,0.75 119.0,0.56 120.0,0.50 121.0,0.56 122.0,0.75 123.0,1.05 124.0,1.48 125.0,2.02 126.0,2.68 127.0,3.46 128.0,4.35 129.0,5.34 130.0,6.44 131.0,7.64 132.0,8.93 133.0,10.31 134.0,11.77 135.0,13.31 136.0,14.92 137.0,16.60 138.0,18.33 139.0,20.11 140.0,21.94 141.0,23.81 142.0,25.70 143.0,27.62 144.0,29.55 145.0,31.48 146.0,33.42 147.0,35.34 148.0,37.25 149.0,39.13 150.0,40.98 151.0,42.78 152.0,44.54 153.0,46.25 154.0,47.89 155.0,49.47 156.0,50.97 157.0,52.39 158.0,53.73 159.0,54.97 160.0,56.12 161.0,57.17 162.0,58.11 163.0,58.94 164.0,59.66 165.0,60.26 166.0,60.75 167.0,61.12 168.0,61.36 169.0,61.48 170.0,61.48 171.0,61.36 172.0,61.12 173.0,60.75 174.0,60.26 175.0,59.66 176.0,58.94 177.0,58.11 178.0,57.17 179.0,56.12 180.0,54.97 181.0,53.73 182.0,52.39 183.0,50.97 184.0,49.47 185.0,47.89 186.0,46.25 187.0,44.54 188.0,42.78 189.0,40.98 190.0,39.13 191.0,37.25 192.0,35.34 193.0,33.42 194.0,31.48 195.0,29.55 196.0,27.62 197.0,25.70 198.0,23.81 199.0,21.94 200.0,20.11 201.0,18.33 202.0,16.60 203.0,14.92 204.0,13.31 205.0,11.77 206.0,10.31 207.0,8.93 208.0,7.64 209.0,6.44 210.0,5.34 211.0,4.35 212.0,3.46 213.0,2.68 214.0,2.02 215.0,1.48 216.0,1.05 217.0,0.75 218.0,0.56 219.0,0.50 220.0,0.56 221.0,0.75 222.0,1.05 223.0,1.48 224.0,2.02 225.0,2.68 226.0,3.46 227.0,4.35 228.0,5.34 229.0,6.44 230.0,7.64 231.0,8.93 232.0,10.31 233.0,11.77 234.0,13.31 235.0,14.92 236.0,16.60 237.0,18.33 238.0,20.11 239.0,21.94 240.0,23.81 241.0,25.70 242.0,27.62 243.0,29.55 244.0,31.48 245.0,33.42 246.0,35.34 247.0,37.25 248.0,39.13 249.0,40.98 250.0,42.78 251.0,44.54 252.0,46.25 253.0,47.89 254.0,49.47 255.0,50.97 256.0,52.39 257.0,53.73 258.0,54.97 259.0,56.12 260.0,57.17 261.0,58.11 262.0,58.94 263.0,59.66 264.0,60.26 265.0,60.75 266.0,61.12 267.0,61.36 268.0,61.48 269.0,61.48 270.0,61.36 271.0,61.12 272.0,60.75 273.0,60.26 274.0,59.66 275.0,58.94 276.0,58.11 277.0,57.17 278.0,56.12 279.0,54.97 280.0,53.73 281.0,52.39 282.0,50.97 283.0,49.47 284.0,47.89 285.0,46.25 286.0,44.54 287.0,42.78 288.0,40.98 289.0,39.13 290.0,37.25 291.0,35.34 292.0,33.42 293.0,31.48 294.0,29.55 295.0,27.62 296.0,25.70 297.0,23.81 298.0,21.94 299.0,20.11 300.0,18.33 301.0,16.60 302.0,14.92 303.0,13.31 304.0,11.77 305.0,10.31 306.0,8.93 307.0,7.64 308.0,6.44 309.0,5.34 310.0,4.35 311.0,3.46 312.0,2.68 313.0,2.02 314.0,1.48 315.0,1.05 316.0,0.75 317.0,0.56 318.0,0.50 319.0,0.56 320.0,0.75 321.0,1.05 322.0,1.48 323.0,2.02 324.0,2.68 325.0,3.46 326.0,4.35 327.0,5.34 328.0,6.44 329.0,7.64 330.0,8.93 331.0,10.31 332.0,11.77 333.0,13.31 334.0,14.92 335.0,16.60 336.0,18.33 337.0,20.11 338.0,21.94 339.0,23.81 340.0,25.70 341.0,27.62 342.0,29.55 343.0,31.48 344.0,33.42 345.0,35.34 346.0,37.25 347.0,39.13 348.0,40.98 349.0,42.78 350.0,44.54 351.0,46.25 352.0,47.89 353.0,49.47 354.0,50.97 355.0,52.39 356.0,53.73 357.0,54.97 358.0,56.12 359.0,57.17 360.0,58.11 361.0,58.94 362.0,59.66 363.0,60.26 364.0,60.75 365.0,61.12 366.0,61.36 367.0,61.48 368.0,61.48 369.0,61.36 370.0,61.12 371.0,60.75 372.0,60.26 373.0,59.66 374.0,58.94 375.0,58.11 376.0,57.17 377.0,56.12 378.0,54.97 379.0,53.73 380.0,52.39 381.0,50.97 382.0,49.47 383.0,47.89 384.0,46.25 385.0,44.54 386.0,42.78 387.0,40.98 388.0,39.13 389.0,37.25 390.0,35.34 391.0,33.42 392.0,31.48 393.0,29.55 394.0,27.62 395.0,25.70 396.0,23.81 397.0,21.94 398.0,20.11 399.0,18.33 400.0,16.60 401.0,14.92 402.0,13.31 403.0,11.77 404.0,10.31 405.0,8.93 406.0,7.64 407.0,6.44 408.0,5.34 409.0,4.35 410.0,3.46 411.0,2.68 412.0,2.02 413.0,1.48 414.0,1.05 415.0,0.75 416.0,0.56 417.0,0.50 418.0,0.56 419.0,0.75 420.0,1.05 421.0,1.48 422.0,2.02 423.0,2.68 424.0,3.46 425.0,4.35 426.0,5.34 427.0,6.44 428.0,7.64 429.0,8.93 430.0,10.31 431.0,11.77 432.0,13.31 433.0,14.92 434.0,16.60 435.0,18.33 436.0,20.11 437.0,21.94 438.0,23.81 439.0,25.70 440.0,27.62 441.0,29.55 442.0,31.48 443.0,33.42 444.0,35.34 445.0,37.25 446.0,39.13 447.0,40.98 448.0,42.78 449.0,44.54 450.0,46.25 451.0,47.89 452.0,49.47 453.0,50.97 454.0,52.39 455.0,53.73 456.0,54.97 457.0,56.12" fill="none" stroke="#6cbfa0" stroke-width="1"></polyline><polyline points="0.0,33.42 1.0,31.48 2.0,29.55 3.0,27.62 4.0,25.70 5.0,23.81 6.0,21.94 7.0,20.11 8.0,18.33 9.0,16.60 10.0,14.92 11.0,13.31 12.0,11.77 13.0,10.31 14.0,8.93 15.0,7.64 16.0,6.44 17.0,5.34 18.0,4.35 19.0,3.46 20.0,2.68 21.0,2.02 22.0,1.48 23.0,1.05 24.0,0.75 25.0,0.56 26.0,0.50 27.0,0.56 28.0,0.75 29.0,1.05 30.0,1.48 31.0,2.02 32.0,2.68 33.0,3.46 34.0,4.35 35.0,5.34 36.0,6.44 37.0,7.64 38.0,8.93 39.0,10.31 40.0,11.77 41.0,13.31 42.0,14.92 43.0,16.60 44.0,18.33 45.0,20.11 46.0,21.94 47.0,23.81 48.0,25.70 49.0,27.62 50.0,29.55 51.0,31.48 52.0,33.42 53.0,35.34 54.0,37.25 55.0,39.13 56.0,40.98 57.0,42.78 58.0,44.54 59.0,46.25 60.0,47.89 61.0,49.47 62.0,50.97 63.0,52.39 64.0,53.73 65.0,54.97 66.0,56.12 67.0,57.17 68.0,58.11 69.0,58.94 70.0,59.66 71.0,60.26 72.0,60.75 73.0,61.12 74.0,61.36 75.0,61.48 76.0,61.48 77.0,61.36 78.0,61.12 79.0,60.75 80.0,60.26 81.0,59.66 82.0,58.94 83.0,58.11 84.0,57.17 85.0,56.12 86.0,54.97 87.0,53.73 88.0,52.39 89.0,50.97 90.0,49.47 91.0,47.89 92.0,46.25 93.0,44.54 94.0,42.78 95.0,40.98 96.0,39.13 97.0,37.25 98.0,35.34 99.0,33.42 100.0,31.48 101.0,29.55 102.0,27.62 103.0,25.70 104.0,23.81 105.0,21.94 106.0,20.11 107.0,18.33 108.0,16.60 109.0,14.92 110.0,13.31 111.0,11.77 112.0,10.31 113.0,8.93 114.0,7.64 115.0,6.44 116.0,5.34 117.0,4.35 118.0,3.46 119.0,2.68 120.0,2.02 121.0,1.48 122.0,1.05 123.0,0.75 124.0,0.56 125.0,0.50 126.0,0.56 127.0,0.75 128.0,1.05 129.0,1.48 130.0,2.02 131.0,2.68 132.0,3.46 133.0,4.35 134.0,5.34 135.0,6.44 136.0,7.64 137.0,8.93 138.0,10.31 139.0,11.77 140.0,13.31 141.0,14.92 142.0,16.60 143.0,18.33 144.0,20.11 145.0,21.94 146.0,23.81 147.0,25.70 148.0,27.62 149.0,29.55 150.0,31.48 151.0,33.42 152.0,35.34 153.0,37.25 154.0,39.13 155.0,40.98 156.0,42.78 157.0,44.54 158.0,46.25 159.0,47.89 160.0,49.47 161.0,50.97 162.0,52.39 163.0,53.73 164.0,54.97 165.0,56.12 166.0,57.17 167.0,58.11 168.0,58.94 169.0,59.66 170.0,60.26 171.0,60.75 172.0,61.12 173.0,61.36 174.0,61.48 175.0,61.48 176.0,61.36 177.0,61.12 178.0,60.75 179.0,60.26 180.0,59.66 181.0,58.94 182.0,58.11 183.0,57.17 184.0,56.12 185.0,54.97 186.0,53.73 187.0,52.39 188.0,50.97 189.0,49.47 190.0,47.89 191.0,46.25 192.0,44.54 193.0,42.78 194.0,40.98 195.0,39.13 196.0,37.25 197.0,35.34 198.0,33.42 199.0,31.48 200.0,29.55 201.0,27.62 202.0,25.70 203.0,23.81 204.0,21.94 205.0,20.11 206.0,18.33 207.0,16.60 208.0,14.92 209.0,13.31 210.0,11.77 211.0,10.31 212.0,8.93 213.0,7.64 214.0,6.44 215.0,5.34 216.0,4.35 217.0,3.46 218.0,2.68 219.0,2.02 220.0,1.48 221.0,1.05 222.0,0.75 223.0,0.56 224.0,0.50 225.0,0.56 226.0,0.75 227.0,1.05 228.0,1.48 229.0,2.02 230.0,2.68 231.0,3.46 232.0,4.35 233.0,5.34 234.0,6.44 235.0,7.64 236.0,8.93 237.0,10.31 238.0,11.77 239.0,13.31 240.0,14.92 241.0,16.60 242.0,18.33 243.0,20.11 244.0,21.94 245.0,23.81 246.0,25.70 247.0,27.62 248.0,29.55 249.0,31.48 250.0,33.42 251.0,35.34 252.0,37.25 253.0,39.13 254.0,40.98 255.0,42.78 256.0,44.54 257.0,46.25 258.0,47.89 259.0,49.47 260.0,50.97 261.0,52.39 262.0,53.73 263.0,54.97 264.0,56.12 265.0,57.17 266.0,58.11 267.0,58.94 268.0,59.66 269.0,60.26 270.0,60.75 271.0,61.12 272.0,61.36 273.0,61.48 274.0,61.48 275.0,61.36 276.0,61.12 277.0,60.75 278.0,60.26 279.0,59.66 280.0,58.94 281.0,58.11 282.0,57.17 283.0,56.12 284.0,54.97 285.0,53.73 286.0,52.39 287.0,50.97 288.0,49.47 289.0,47.89 290.0,46.25 291.0,44.54 292.0,42.78 293.0,40.98 294.0,39.13 295.0,37.25 296.0,35.34 297.0,33.42 298.0,31.48 299.0,29.55 300.0,27.62 301.0,25.70 302.0,23.81 303.0,21.94 304.0,20.11 305.0,18.33 306.0,16.60 307.0,14.92 308.0,13.31 309.0,11.77 310.0,10.31 311.0,8.93 312.0,7.64 313.0,6.44 314.0,5.34 315.0,4.35 316.0,3.46 317.0,2.68 318.0,2.02 319.0,1.48 320.0,1.05 321.0,0.75 322.0,0.56 323.0,0.50 324.0,0.56 325.0,0.75 326.0,1.05 327.0,1.48 328.0,2.02 329.0,2.68 330.0,3.46 331.0,4.35 332.0,5.34 333.0,6.44 334.0,7.64 335.0,8.93 336.0,10.31 337.0,11.77 338.0,13.31 339.0,14.92 340.0,16.60 341.0,18.33 342.0,20.11 343.0,21.94 344.0,23.81 345.0,25.70 346.0,27.62 347.0,29.55 348.0,31.48 349.0,33.42 350.0,35.34 351.0,37.25 352.0,39.13 353.0,40.98 354.0,42.78 355.0,44.54 356.0,46.25 357.0,47.89 358.0,49.47 359.0,50.97 360.0,52.39 361.0,53.73 362.0,54.97 363.0,56.12 364.0,57.17 365.0,58.11 366.0,58.94 367.0,59.66 368.0,60.26 369.0,60.75 370.0,61.12 371.0,61.36 372.0,61.48 373.0,61.48 374.0,61.36 375.0,61.12 376.0,60.75 377.0,60.26 378.0,59.66 379.0,58.94 380.0,58.11 381.0,57.17 382.0,56.12 383.0,54.97 384.0,53.73 385.0,52.39 386.0,50.97 387.0,49.47 388.0,47.89 389.0,46.25 390.0,44.54 391.0,42.78 392.0,40.98 393.0,39.13 394.0,37.25 395.0,35.34 396.0,33.42 397.0,31.48 398.0,29.55 399.0,27.62 400.0,25.70 401.0,23.81 402.0,21.94 403.0,20.11 404.0,18.33 405.0,16.60 406.0,14.92 407.0,13.31 408.0,11.77 409.0,10.31 410.0,8.93 411.0,7.64 412.0,6.44 413.0,5.34 414.0,4.35 415.0,3.46 416.0,2.68 417.0,2.02 418.0,1.48 419.0,1.05 420.0,0.75 421.0,0.56 422.0,0.50 423.0,0.56 424.0,0.75 425.0,1.05 426.0,1.48 427.0,2.02 428.0,2.68 429.0,3.46 430.0,4.35 431.0,5.34 432.0,6.44 433.0,7.64 434.0,8.93 435.0,10.31 436.0,11.77 437.0,13.31 438.0,14.92 439.0,16.60 440.0,18.33 441.0,20.11 442.0,21.94 443.0,23.81 444.0,25.70 445.0,27.62 446.0,29.55 447.0,31.48 448.0,33.42 449.0,35.34 450.0,37.25 451.0,39.13 452.0,40.98 453.0,42.78 454.0,44.54 455.0,46.25 456.0,47.89 457.0,49.47" fill="none" stroke="#cf6f6c" stroke-width="1"></polyline></svg>
<div class="a" style="left:124px;top:314.5px;width:232px;height:23px;background:#555555;border-radius:6px;border:1.5px solid #b8c46c"></div>
<div class="t" style="left: 163.8px; top: 319.7px; font-size: 13px; color: rgb(230, 230, 230); transform: scaleX(0.9102); transform-origin: 0px 0px;">Oscillator [Position.Z] Cosine</div>
<svg class="a" style="left:14px;top:390px;" width="10" height="10" viewBox="0 0 10 10"><circle cx="5" cy="5" r="4.4" fill="none" stroke="#6a6a6a" stroke-width="1.1"></circle></svg>
<div class="t" style="left: 30px; top: 389px; font-size: 13px; color: rgb(218, 218, 218); transform: scaleX(0.9327); transform-origin: 0px 0px;">Strength</div>
<svg class="a" style="left:14px;top:412px;" width="10" height="10" viewBox="0 0 10 10"><circle cx="5" cy="5" r="4.4" fill="none" stroke="#6a6a6a" stroke-width="1.1"></circle></svg>
<div class="t" style="left: 30px; top: 411px; font-size: 13px; color: rgb(218, 218, 218); transform: scaleX(0.8955); transform-origin: 0px 0px;">Strength Fades to Zero</div>
<svg class="a" style="left:14px;top:434px;" width="10" height="10" viewBox="0 0 10 10"><circle cx="5" cy="5" r="4.4" fill="none" stroke="#6a6a6a" stroke-width="1.1"></circle></svg>
<div class="t" style="left: 30px; top: 433px; font-size: 13px; color: rgb(218, 218, 218); transform: scaleX(0.8929); transform-origin: 0px 0px;">Type</div>
<svg class="a" style="left:14px;top:456px;" width="10" height="10" viewBox="0 0 10 10"><circle cx="5" cy="5" r="4.4" fill="none" stroke="#6a6a6a" stroke-width="1.1"></circle></svg>
<div class="t" style="left: 30px; top: 455px; font-size: 13px; color: rgb(218, 218, 218); transform: scaleX(0.8985); transform-origin: 0px 0px;">Wave Style</div>
<div class="t" style="left: 30px; top: 477px; font-size: 13px; color: rgb(156, 156, 156); transform: scaleX(0.9028); transform-origin: 0px 0px;">Graph</div>
<div class="a" style="left:177px;top:387px;width:94px;height:16px;background:#2b2b2b;border-radius:2px"></div>
<div class="t" style="left:181px;top:389.34px;font-size:12px;color:#5e5e5e;">%</div>
<div class="t" style="left: 194.5px; top: 388.5px; font-size: 13px; color: rgb(220, 220, 220); transform: scaleX(0.8788); transform-origin: 0px 0px;">100.0</div>
<div class="a" style="left:177px;top:409px;width:16px;height:16px;background:#2a2a2a;border-radius:2px"></div>
<svg class="a" style="left:177px;top:409px;" width="16" height="16" viewBox="0 0 16 16"><path d="M3.5 8.3 L6.7 11.8 L12.8 3.8" fill="none" stroke="#2ecc5a" stroke-width="2"></path></svg>
<div class="a" style="left:177.6px;top:432px;width:192px;height:15px;background:#505050;border-radius:3px"></div>
<div class="t" style="left: 180.6px; top: 432.8px; font-size: 13px; color: rgb(224, 224, 224); transform: scaleX(0.9231); transform-origin: 0px 0px;">Sine</div>
<svg class="a" style="left:356.6px;top:437px;" width="9" height="6" viewBox="0 0 9 6"><path d="M0.5 0.5 L4.5 5 L8.5 0.5" fill="none" stroke="#cfcfcf" stroke-width="1"></path></svg>
<div class="a" style="left:177.6px;top:454px;width:192px;height:15px;background:#505050;border-radius:3px"></div>
<div class="t" style="left: 180.6px; top: 454.8px; font-size: 13px; color: rgb(224, 224, 224); transform: scaleX(0.9524); transform-origin: 0px 0px;">Normal</div>
<svg class="a" style="left:356.6px;top:459px;" width="9" height="6" viewBox="0 0 9 6"><path d="M0.5 0.5 L4.5 5 L8.5 0.5" fill="none" stroke="#cfcfcf" stroke-width="1"></path></svg>
<div class="a" style="left:178px;top:475px;width:16px;height:16px;background:#2f2f2f;border-radius:3px;border:1px solid #3a3a3a"></div>
<svg class="a" style="left:180px;top:477px;" width="12" height="12" viewBox="0 0 12 12"><path d="M2 0.5 V11 M0 10 H11.5 M2.5 9.5 L10.5 3" stroke="#d8d8d8" stroke-width="1"></path></svg>
<div class="a" style="left:7px;top:496px;width:462px;height:1px;background:#282828;"></div>
<div class="a" style="left:7px;top:522px;width:462px;height:20px;background:#4b4b4b;border-radius:3px"></div>
<svg class="a" style="left:14px;top:505px;" width="10" height="10" viewBox="0 0 10 10"><circle cx="5" cy="5" r="4.4" fill="none" stroke="#6a6a6a" stroke-width="1.1"></circle></svg>
<div class="t" style="left: 30px; top: 504px; font-size: 13px; color: rgb(218, 218, 218); transform: scaleX(0.9491); transform-origin: 0px 0px;">Minimum</div>
<svg class="a" style="left:14px;top:527px;" width="10" height="10" viewBox="0 0 10 10"><circle cx="5" cy="5" r="4.4" fill="none" stroke="#6a6a6a" stroke-width="1.1"></circle></svg>
<div class="t" style="left: 30px; top: 526px; font-size: 13px; color: rgb(218, 218, 218); transform: scaleX(0.9375); transform-origin: 0px 0px;">Maximum</div>
<svg class="a" style="left:14px;top:549px;" width="10" height="10" viewBox="0 0 10 10"><circle cx="5" cy="5" r="4.4" fill="none" stroke="#6a6a6a" stroke-width="1.1"></circle></svg>
<div class="t" style="left: 30px; top: 548px; font-size: 13px; color: rgb(218, 218, 218); transform: scaleX(0.9329); transform-origin: 0px 0px;">Value Offset</div>
<svg class="a" style="left:14px;top:571px;" width="10" height="10" viewBox="0 0 10 10"><circle cx="5" cy="5" r="4.4" fill="none" stroke="#6a6a6a" stroke-width="1.1"></circle></svg>
<div class="t" style="left: 30px; top: 570px; font-size: 13px; color: rgb(218, 218, 218); transform: scaleX(0.8696); transform-origin: 0px 0px;">Stagger</div>
<svg class="a" style="left:14px;top:593px;" width="10" height="10" viewBox="0 0 10 10"><circle cx="5" cy="5" r="4.4" fill="none" stroke="#6a6a6a" stroke-width="1.1"></circle></svg>
<div class="t" style="left: 30px; top: 592px; font-size: 13px; color: rgb(218, 218, 218); transform: scaleX(0.882); transform-origin: 0px 0px;">Separate Channels</div>
<div class="a" style="left:177px;top:502px;width:94px;height:16px;background:#2b2b2b;border-radius:2px"></div>
<div class="t" style="left:181px;top:504.34px;font-size:12px;color:#5e5e5e;">#</div>
<div class="t" style="left: 194.5px; top: 503.5px; font-size: 13px; color: rgb(220, 220, 220); transform: scaleX(0.9189); transform-origin: 0px 0px;">-400.0</div>
<div class="a" style="left:260px;top:502px;width:11px;height:16px;background:#333;border-radius:0 2px 2px 0"></div>
<svg class="a" style="left:262.5px;top:506.0px;" width="6" height="8" viewBox="0 0 6 8"><path d="M6 4 L3.4 0.3 H0 V7.7 H3.4Z" fill="#c04fe0"></path></svg>
<div class="a" style="left:153px;top:524px;width:16px;height:16px;background:#2a2a2a;border-radius:3px"></div>
<div class="t" style="left:156px;top:524.50px;font-size:13px;color:#e0e0e0;">π</div>
<div class="a" style="left:177px;top:524px;width:94px;height:16px;background:#2b2b2b;border-radius:2px"></div>
<div class="t" style="left:181px;top:526.34px;font-size:12px;color:#5e5e5e;">#</div>
<div class="t" style="left: 194.5px; top: 525.5px; font-size: 13px; color: rgb(214, 191, 124); transform: scaleX(0.8939); transform-origin: 0px 0px;">400.0</div>
<div class="a" style="left:260px;top:524px;width:11px;height:16px;background:#333;border-radius:0 2px 2px 0"></div>
<svg class="a" style="left:251.5px;top:528.0px;" width="6" height="8" viewBox="0 0 6 8"><path d="M0 4 L2.6 0.3 H6 V7.7 H2.6Z" fill="#d4b96a"></path></svg>
<svg class="a" style="left:262.5px;top:528.0px;" width="6" height="8" viewBox="0 0 6 8"><path d="M6 4 L3.4 0.3 H0 V7.7 H3.4Z" fill="#7a7a7a"></path></svg>
<div class="a" style="left:177px;top:546.5px;width:94px;height:16px;background:#2b2b2b;border-radius:2px"></div>
<div class="t" style="left:181px;top:548.84px;font-size:12px;color:#5e5e5e;">#</div>
<div class="t" style="left: 194.5px; top: 548px; font-size: 13px; color: rgb(220, 220, 220); transform: scaleX(0.9444); transform-origin: 0px 0px;">0.0</div>
<div class="a" style="left:177px;top:568.5px;width:94px;height:16px;background:#2b2b2b;border-radius:2px"></div>
<div class="t" style="left:181px;top:570.84px;font-size:12px;color:#5e5e5e;">#</div>
<div class="t" style="left: 194.5px; top: 570px; font-size: 13px; color: rgb(220, 220, 220); transform: scaleX(0.94); transform-origin: 0px 0px;">20.0</div>
<div class="a" style="left:177.3px;top:590.5px;width:16px;height:15.5px;background:#2b2b2b;border-radius:2px"></div>
<div class="a" style="left:7px;top:611px;width:462px;height:1px;background:#282828;"></div>
<svg class="a" style="left:14px;top:620px;" width="10" height="10" viewBox="0 0 10 10"><circle cx="5" cy="5" r="4.4" fill="none" stroke="#6a6a6a" stroke-width="1.1"></circle></svg>
<div class="t" style="left: 30px; top: 619px; font-size: 13px; color: rgb(218, 218, 218); transform: scaleX(0.9123); transform-origin: 0px 0px;">Time Mode</div>
<svg class="a" style="left:14px;top:642px;" width="10" height="10" viewBox="0 0 10 10"><circle cx="5" cy="5" r="4.4" fill="none" stroke="#6a6a6a" stroke-width="1.1"></circle></svg>
<div class="t" style="left: 30px; top: 641px; font-size: 13px; color: rgb(218, 218, 218); transform: scaleX(0.9098); transform-origin: 0px 0px;">Frequency</div>
<svg class="a" style="left:14px;top:664px;" width="10" height="10" viewBox="0 0 10 10"><circle cx="5" cy="5" r="4.4" fill="none" stroke="#6a6a6a" stroke-width="1.1"></circle></svg>
<div class="t" style="left: 30px; top: 663px; font-size: 13px; color: rgb(218, 218, 218); transform: scaleX(0.9429); transform-origin: 0px 0px;">Time</div>
<svg class="a" style="left:14px;top:686px;" width="10" height="10" viewBox="0 0 10 10"><circle cx="5" cy="5" r="4.4" fill="none" stroke="#6a6a6a" stroke-width="1.1"></circle></svg>
<div class="t" style="left: 30px; top: 685px; font-size: 13px; color: rgb(218, 218, 218); transform: scaleX(0.9394); transform-origin: 0px 0px;">Time Offset</div>
<svg class="a" style="left:14px;top:708px;" width="10" height="10" viewBox="0 0 10 10"><circle cx="5" cy="5" r="4.4" fill="none" stroke="#6a6a6a" stroke-width="1.1"></circle></svg>
<div class="t" style="left: 30px; top: 707px; font-size: 13px; color: rgb(218, 218, 218); transform: scaleX(0.8615); transform-origin: 0px 0px;">Time Scale</div>
<div class="a" style="left:177.3px;top:617.7px;width:193px;height:15px;background:#505050;border-radius:3px"></div>
<div class="t" style="left: 180.3px; top: 618.5px; font-size: 13px; color: rgb(224, 224, 224); transform: scaleX(0.8431); transform-origin: 0px 0px;">Seconds</div>
<svg class="a" style="left:357.3px;top:622.7px;" width="9" height="6" viewBox="0 0 9 6"><path d="M0.5 0.5 L4.5 5 L8.5 0.5" fill="none" stroke="#cfcfcf" stroke-width="1"></path></svg>
<div class="a" style="left:177px;top:639.5px;width:94px;height:16px;background:#2b2b2b;border-radius:2px"></div>
<div class="t" style="left:181px;top:641.84px;font-size:12px;color:#5e5e5e;">#</div>
<div class="t" style="left: 194.5px; top: 641px; font-size: 13px; color: rgb(220, 220, 220); transform: scaleX(0.9444); transform-origin: 0px 0px;">5.0</div>
<div class="a" style="left:177px;top:661.5px;width:94px;height:16px;background:#2b2b2b;border-radius:2px"></div>
<div class="t" style="left:181px;top:663.84px;font-size:12px;color:#5e5e5e;">#</div>
<div class="t" style="left: 194.5px; top: 663px; font-size: 13px; color: rgb(214, 191, 124); transform: scaleX(0.92); transform-origin: 0px 0px;">77.0</div>
<div class="a" style="left:260px;top:661.5px;width:11px;height:16px;background:#333;border-radius:0 2px 2px 0"></div>
<svg class="a" style="left:251.5px;top:665.5px;" width="6" height="8" viewBox="0 0 6 8"><path d="M0 4 L2.6 0.3 H6 V7.7 H2.6Z" fill="#d4b96a"></path></svg>
<svg class="a" style="left:262.5px;top:665.5px;" width="6" height="8" viewBox="0 0 6 8"><path d="M6 4 L3.4 0.3 H0 V7.7 H3.4Z" fill="#7a7a7a"></path></svg>
<div class="a" style="left:273.2px;top:661px;width:15.5px;height:16.5px;background:#2b2b2b;border-radius:3px;border:1px solid #1f1f1f"></div>
<svg class="a" style="left:276.5px;top:665px;" width="9" height="9" viewBox="0 0 9 9"><path d="M0.5 0.5 L8.5 8.5 M8.5 0.5 L0.5 8.5" stroke="#ccc" stroke-width="1.1"></path></svg>
<div class="a" style="left:177px;top:683.5px;width:94px;height:16px;background:#2b2b2b;border-radius:2px"></div>
<div class="t" style="left:181px;top:685.84px;font-size:12px;color:#5e5e5e;">S</div>
<div class="t" style="left: 194.5px; top: 685px; font-size: 13px; color: rgb(220, 220, 220); transform: scaleX(0.9444); transform-origin: 0px 0px;">0.0</div>
<div class="a" style="left:177px;top:705.5px;width:94px;height:16px;background:#2b2b2b;border-radius:2px"></div>
<div class="t" style="left:181px;top:707.84px;font-size:12px;color:#5e5e5e;">#</div>
<div class="t" style="left: 194.5px; top: 707px; font-size: 13px; color: rgb(220, 220, 220); transform: scaleX(0.9444); transform-origin: 0px 0px;">1.0</div>
<div class="a" style="left:6px;top:724px;width:468px;height:4px;background:#262626;"></div>
<div class="a" style="left:6px;top:728px;width:468px;height:23px;background:#2d2d2d;"></div>
<div class="a" style="left:6px;top:728px;width:468px;height:1.5px;background:#c4ec74;"></div>
<div class="a" style="left:6px;top:728px;width:4px;height:23px;background:#c4ec74;"></div>
<div class="a" style="left:470px;top:728px;width:4px;height:23px;background:#c4ec74;"></div>
<svg class="a" style="left:15px;top:738px;" width="8" height="6" viewBox="0 0 8 6"><path d="M0.5 0.5 L4.0 5 L7.5 0.5" fill="none" stroke="#bdbdbd" stroke-width="1"></path></svg>
<div class="a" style="left:28px;top:731px;width:18px;height:18px;background:#1e1e1e;border-radius:3px"></div>
<svg class="a" style="left:30px;top:733px;" width="14" height="14" viewBox="0 0 14 14"><path d="M11.5 5.5 A5.3 5.3 0 1 1 9 2.3" fill="none" stroke="#d0d0d0" stroke-width="1.4"></path><path d="M3.8 6.8 L6.3 9.3 L12.5 3" fill="none" stroke="#d0d0d0" stroke-width="1.6"></path></svg>
<svg class="a" style="left:50px;top:735px;" width="10" height="10" viewBox="0 0 10 10"><circle cx="5" cy="5" r="4.4" fill="none" stroke="#707070" stroke-width="1.1"></circle></svg>
<svg class="a" style="left:64px;top:735px;" width="18" height="11" viewBox="0 0 18 11"><path d="M0.5 6 C1.5 0 3.5 0 5 5.5 S8 11 9.5 5.5 S12.5 0 14 5.5 S16.5 10 17.5 5" fill="none" stroke="#6fc27a" stroke-width="1.4"></path></svg>
<div class="t" style="left: 87.1px; top: 734px; font-size: 13px; color: rgb(224, 224, 224); transform: scaleX(0.9059); transform-origin: 0px 0px;">Oscillator [Position.X] Sine</div>
<div class="a" style="left:365.9px;top:732px;width:16.400000000000034px;height:16.4px;background:#2a2a2a;border-radius:4px;border:1px solid #222"></div>
<div class="a" style="left:410.2px;top:732px;width:16.900000000000034px;height:16.4px;background:#2a2a2a;border-radius:4px;border:1px solid #222"></div>
<div class="a" style="left:430.4px;top:732px;width:16.400000000000034px;height:16.4px;background:#2a2a2a;border-radius:4px;border:1px solid #222"></div>
<div class="a" style="left:450.6px;top:732px;width:16.399999999999977px;height:16.4px;background:#2a2a2a;border-radius:4px;border:1px solid #222"></div>
<div class="a" style="left:386.3px;top:732px;width:20.6px;height:16.4px;background:#272727;border-radius:3px"></div>
<svg class="a" style="left:368px;top:735px;" width="14" height="10" viewBox="0 0 14 10"><path d="M0 1 H5 V5 H7 M0 9 H5 V5 M7 5 H13" stroke="#e0e0e0" stroke-width="2" fill="none"></path></svg>
<div class="a" style="left:379px;top:745px;width:3px;height:3px;background:#5cc8a0;clip-path:polygon(100% 0,100% 100%,0 100%)"></div>
<svg class="a" style="left:389.0px;top:736.0px;" width="6" height="8" viewBox="0 0 6 8"><path d="M0 4 L2.6 0.3 H6 V7.7 H2.6Z" fill="#d4b96a"></path></svg>
<svg class="a" style="left:399.0px;top:736.0px;" width="6" height="8" viewBox="0 0 6 8"><path d="M6 4 L3.4 0.3 H0 V7.7 H3.4Z" fill="#c04fe0"></path></svg>
<svg class="a" style="left:413px;top:733px;" width="11" height="14" viewBox="0 0 11 14"><path d="M2.5 0.5 H8.5 M4 0.5 L3.5 5 L1 8 H10 L7.5 5 L7 0.5Z" fill="#cfcfcf"></path><path d="M5.5 8 V14" stroke="#cfcfcf" stroke-width="1.2"></path></svg>
<svg class="a" style="left:433px;top:734px;" width="12" height="12" viewBox="0 0 12 12"><g fill="#cfcfcf"><circle cx="1.5" cy="1.5" r="1.1"></circle><circle cx="8.5" cy="1.5" r="1.1"></circle><circle cx="1.5" cy="7.5" r="1.1"></circle><path d="M7 4 L8 7 L11 8 L8 9 L7 12 L6 9 L3 8 L6 7Z"></path></g></svg>
<svg class="a" style="left:454px;top:735px;" width="10" height="10" viewBox="0 0 10 10"><path d="M0.5 0.5 L9.5 9.5 M9.5 0.5 L0.5 9.5" stroke="#cfcfcf" stroke-width="1.1"></path></svg>
<div class="a" style="left:6px;top:751px;width:468px;height:22px;background:#262626;"></div>
<div class="a" style="left:184.4px;top:753px;width:96px;height:20px;background:#454545;border-radius:4px 4px 0 0"></div>
<div class="t" style="left: 205.3px; top: 756px; font-size: 13px; color: rgb(230, 230, 230); transform: scaleX(0.9068); transform-origin: 0px 0px;">Behaviour</div>
<div class="t" style="left: 302.4px; top: 756px; font-size: 13px; color: rgb(168, 168, 168); transform: scaleX(0.9463); transform-origin: 0px 0px;">Deformer</div>
<div class="a" style="left:376px;top:758px;width:1.2px;height:11px;background:#a0a0a0;"></div>
<div class="t" style="left: 404.7px; top: 756px; font-size: 13px; color: rgb(168, 168, 168); transform: scaleX(0.9167); transform-origin: 0px 0px;">Falloffs</div>
<div class="a" style="left:6px;top:773px;width:468px;height:252px;background:#393939;"></div>
<div class="a" style="left:11px;top:777px;width:458px;height:76px;background:#1c1c1c;"></div>
<svg class="a" style="left:11px;top:777px;overflow:hidden" width="458" height="76"><rect x="9.100000000000001" y="0" width="1.8" height="76" fill="#2e2e2e"></rect><rect x="19.1" y="0" width="1.8" height="76" fill="#2e2e2e"></rect><rect x="29.1" y="0" width="1.8" height="76" fill="#2e2e2e"></rect><rect x="39.1" y="0" width="1.8" height="76" fill="#2e2e2e"></rect><rect x="49.1" y="0" width="1.8" height="76" fill="#2e2e2e"></rect><rect x="59.099999999999994" y="0" width="1.8" height="76" fill="#2e2e2e"></rect><rect x="69.1" y="0" width="1.8" height="76" fill="#2e2e2e"></rect><rect x="79.1" y="0" width="1.8" height="76" fill="#2e2e2e"></rect><rect x="89.1" y="0" width="1.8" height="76" fill="#2e2e2e"></rect><rect x="99.1" y="0" width="1.8" height="76" fill="#2e2e2e"></rect><rect x="109.1" y="0" width="1.8" height="76" fill="#2e2e2e"></rect><rect x="119.1" y="0" width="1.8" height="76" fill="#2e2e2e"></rect><rect x="129.1" y="0" width="1.8" height="76" fill="#2e2e2e"></rect><rect x="139.1" y="0" width="1.8" height="76" fill="#2e2e2e"></rect><rect x="149.1" y="0" width="1.8" height="76" fill="#2e2e2e"></rect><rect x="159.1" y="0" width="1.8" height="76" fill="#2e2e2e"></rect><rect x="169.1" y="0" width="1.8" height="76" fill="#2e2e2e"></rect><rect x="179.1" y="0" width="1.8" height="76" fill="#2e2e2e"></rect><rect x="189.1" y="0" width="1.8" height="76" fill="#2e2e2e"></rect><rect x="199.1" y="0" width="1.8" height="76" fill="#2e2e2e"></rect><rect x="209.1" y="0" width="1.8" height="76" fill="#2e2e2e"></rect><rect x="219.1" y="0" width="1.8" height="76" fill="#2e2e2e"></rect><rect x="229.1" y="0" width="1.8" height="76" fill="#2e2e2e"></rect><rect x="239.1" y="0" width="1.8" height="76" fill="#2e2e2e"></rect><rect x="249.10000000000002" y="0" width="1.8" height="76" fill="#2e2e2e"></rect><rect x="259.1" y="0" width="1.8" height="76" fill="#2e2e2e"></rect><rect x="269.1" y="0" width="1.8" height="76" fill="#2e2e2e"></rect><rect x="279.1" y="0" width="1.8" height="76" fill="#2e2e2e"></rect><rect x="289.1" y="0" width="1.8" height="76" fill="#2e2e2e"></rect><rect x="299.1" y="0" width="1.8" height="76" fill="#2e2e2e"></rect><rect x="309.1" y="0" width="1.8" height="76" fill="#2e2e2e"></rect><rect x="319.1" y="0" width="1.8" height="76" fill="#2e2e2e"></rect><rect x="329.1" y="0" width="1.8" height="76" fill="#2e2e2e"></rect><rect x="339.1" y="0" width="1.8" height="76" fill="#2e2e2e"></rect><rect x="349.1" y="0" width="1.8" height="76" fill="#2e2e2e"></rect><rect x="359.1" y="0" width="1.8" height="76" fill="#2e2e2e"></rect><rect x="369.1" y="0" width="1.8" height="76" fill="#2e2e2e"></rect><rect x="379.1" y="0" width="1.8" height="76" fill="#2e2e2e"></rect><rect x="389.1" y="0" width="1.8" height="76" fill="#2e2e2e"></rect><rect x="399.1" y="0" width="1.8" height="76" fill="#2e2e2e"></rect><rect x="409.1" y="0" width="1.8" height="76" fill="#2e2e2e"></rect><rect x="419.1" y="0" width="1.8" height="76" fill="#2e2e2e"></rect><rect x="429.1" y="0" width="1.8" height="76" fill="#2e2e2e"></rect><rect x="439.1" y="0" width="1.8" height="76" fill="#2e2e2e"></rect><rect x="449.1" y="0" width="1.8" height="76" fill="#2e2e2e"></rect><rect x="0" y="36.99999999999996" width="458" height="1.6" fill="#5272c4"></rect><polyline points="0.0,11.06 1.0,12.16 2.0,13.37 3.0,14.68 4.0,16.08 5.0,17.56 6.0,19.13 7.0,20.77 8.0,22.48 9.0,24.25 10.0,26.08 11.0,27.95 12.0,29.86 13.0,31.81 14.0,33.77 15.0,35.76 16.0,37.75 17.0,39.74 18.0,41.73 19.0,43.69 20.0,45.64 21.0,47.55 22.0,49.43 23.0,51.26 24.0,53.03 25.0,54.74 26.0,56.39 27.0,57.96 28.0,59.45 29.0,60.85 30.0,62.16 31.0,63.38 32.0,64.49 33.0,65.49 34.0,66.39 35.0,67.17 36.0,67.83 37.0,68.37 38.0,68.79 39.0,69.08 40.0,69.25 41.0,69.30 42.0,69.22 43.0,69.01 44.0,68.68 45.0,68.22 46.0,67.64 47.0,66.94 48.0,66.13 49.0,65.20 50.0,64.17 51.0,63.02 52.0,61.78 53.0,60.44 54.0,59.01 55.0,57.50 56.0,55.90 57.0,54.24 58.0,52.50 59.0,50.71 60.0,48.87 61.0,46.98 62.0,45.06 63.0,43.11 64.0,41.13 65.0,39.14 66.0,37.15 67.0,35.16 68.0,33.18 69.0,31.22 70.0,29.29 71.0,27.39 72.0,25.53 73.0,23.72 74.0,21.96 75.0,20.27 76.0,18.65 77.0,17.11 78.0,15.65 79.0,14.28 80.0,13.00 81.0,11.82 82.0,10.75 83.0,9.78 84.0,8.93 85.0,8.19 86.0,7.57 87.0,7.07 88.0,6.69 89.0,6.44 90.0,6.32 91.0,6.32 92.0,6.44 93.0,6.69 94.0,7.07 95.0,7.57 96.0,8.19 97.0,8.93 98.0,9.78 99.0,10.75 100.0,11.82 101.0,13.00 102.0,14.28 103.0,15.65 104.0,17.11 105.0,18.65 106.0,20.27 107.0,21.96 108.0,23.72 109.0,25.53 110.0,27.39 111.0,29.29 112.0,31.22 113.0,33.18 114.0,35.16 115.0,37.15 116.0,39.14 117.0,41.13 118.0,43.11 119.0,45.06 120.0,46.98 121.0,48.87 122.0,50.71 123.0,52.50 124.0,54.24 125.0,55.90 126.0,57.50 127.0,59.01 128.0,60.44 129.0,61.78 130.0,63.02 131.0,64.17 132.0,65.20 133.0,66.13 134.0,66.94 135.0,67.64 136.0,68.22 137.0,68.68 138.0,69.01 139.0,69.22 140.0,69.30 141.0,69.25 142.0,69.08 143.0,68.79 144.0,68.37 145.0,67.83 146.0,67.17 147.0,66.39 148.0,65.49 149.0,64.49 150.0,63.38 151.0,62.16 152.0,60.85 153.0,59.45 154.0,57.96 155.0,56.39 156.0,54.74 157.0,53.03 158.0,51.26 159.0,49.43 160.0,47.55 161.0,45.64 162.0,43.69 163.0,41.73 164.0,39.74 165.0,37.75 166.0,35.76 167.0,33.77 168.0,31.81 169.0,29.86 170.0,27.95 171.0,26.08 172.0,24.25 173.0,22.48 174.0,20.77 175.0,19.13 176.0,17.56 177.0,16.08 178.0,14.68 179.0,13.37 180.0,12.16 181.0,11.06 182.0,10.06 183.0,9.17 184.0,8.40 185.0,7.74 186.0,7.21 187.0,6.79 188.0,6.50 189.0,6.34 190.0,6.30 191.0,6.39 192.0,6.60 193.0,6.94 194.0,7.41 195.0,7.99 196.0,8.69 197.0,9.51 198.0,10.45 199.0,11.49 200.0,12.64 201.0,13.88 202.0,15.23 203.0,16.66 204.0,18.18 205.0,19.78 206.0,21.45 207.0,23.18 208.0,24.98 209.0,26.82 210.0,28.71 211.0,30.64 212.0,32.59 213.0,34.57 214.0,36.55 215.0,38.55 216.0,40.54 217.0,42.52 218.0,44.48 219.0,46.41 220.0,48.31 221.0,50.16 222.0,51.97 223.0,53.72 224.0,55.41 225.0,57.03 226.0,58.56 227.0,60.02 228.0,61.39 229.0,62.66 230.0,63.83 231.0,64.90 232.0,65.86 233.0,66.71 234.0,67.45 235.0,68.06 236.0,68.55 237.0,68.92 238.0,69.17 239.0,69.29 240.0,69.28 241.0,69.15 242.0,68.89 243.0,68.51 244.0,68.00 245.0,67.38 246.0,66.63 247.0,65.77 248.0,64.80 249.0,63.72 250.0,62.54 251.0,61.26 252.0,59.88 253.0,58.41 254.0,56.87 255.0,55.24 256.0,53.55 257.0,51.79 258.0,49.98 259.0,48.12 260.0,46.22 261.0,44.28 262.0,42.32 263.0,40.34 264.0,38.35 265.0,36.36 266.0,34.37 267.0,32.40 268.0,30.44 269.0,28.52 270.0,26.64 271.0,24.80 272.0,23.01 273.0,21.28 274.0,19.62 275.0,18.03 276.0,16.52 277.0,15.09 278.0,13.76 279.0,12.52 280.0,11.38 281.0,10.35 282.0,9.43 283.0,8.62 284.0,7.93 285.0,7.35 286.0,6.90 287.0,6.58 288.0,6.38 289.0,6.30 290.0,6.35 291.0,6.53 292.0,6.83 293.0,7.25 294.0,7.80 295.0,8.47 296.0,9.25 297.0,10.15 298.0,11.16 299.0,12.28 300.0,13.50 301.0,14.82 302.0,16.22 303.0,17.72 304.0,19.29 305.0,20.94 306.0,22.66 307.0,24.43 308.0,26.27 309.0,28.14 310.0,30.06 311.0,32.00 312.0,33.97 313.0,35.96 314.0,37.95 315.0,39.94 316.0,41.92 317.0,43.89 318.0,45.83 319.0,47.74 320.0,49.61 321.0,51.44 322.0,53.20 323.0,54.91 324.0,56.55 325.0,58.11 326.0,59.59 327.0,60.99 328.0,62.29 329.0,63.49 330.0,64.59 331.0,65.59 332.0,66.47 333.0,67.24 334.0,67.89 335.0,68.42 336.0,68.82 337.0,69.11 338.0,69.26 339.0,69.30 340.0,69.20 341.0,68.98 342.0,68.64 343.0,68.17 344.0,67.58 345.0,66.87 346.0,66.04 347.0,65.10 348.0,64.06 349.0,62.90 350.0,61.65 351.0,60.30 352.0,58.86 353.0,57.34 354.0,55.74 355.0,54.06 356.0,52.33 357.0,50.53 358.0,48.68 359.0,46.79 360.0,44.86 361.0,42.91 362.0,40.93 363.0,38.95 364.0,36.95 365.0,34.96 366.0,32.99 367.0,31.03 368.0,29.10 369.0,27.20 370.0,25.34 371.0,23.54 372.0,21.79 373.0,20.11 374.0,18.50 375.0,16.96 376.0,15.51 377.0,14.15 378.0,12.88 379.0,11.71 380.0,10.65 381.0,9.69 382.0,8.85 383.0,8.12 384.0,7.51 385.0,7.03 386.0,6.66 387.0,6.42 388.0,6.31 389.0,6.32 390.0,6.46 391.0,6.73 392.0,7.11 393.0,7.62 394.0,8.26 395.0,9.01 396.0,9.87 397.0,10.85 398.0,11.93 399.0,13.12 400.0,14.41 401.0,15.79 402.0,17.26 403.0,18.81 404.0,20.44 405.0,22.14 406.0,23.90 407.0,25.71 408.0,27.57 409.0,29.48 410.0,31.42 411.0,33.38 412.0,35.36 413.0,37.35 414.0,39.34 415.0,41.33 416.0,43.30 417.0,45.25 418.0,47.17 419.0,49.06 420.0,50.89 421.0,52.68 422.0,54.41 423.0,56.06 424.0,57.65 425.0,59.16 426.0,60.58 427.0,61.91 428.0,63.14 429.0,64.27 430.0,65.30 431.0,66.22 432.0,67.02 433.0,67.71 434.0,68.27 435.0,68.72 436.0,69.04 437.0,69.23 438.0,69.30 439.0,69.24 440.0,69.06 441.0,68.75 442.0,68.32 443.0,67.77 444.0,67.09 445.0,66.30 446.0,65.40 447.0,64.38 448.0,63.26 449.0,62.04 450.0,60.72 451.0,59.30 452.0,57.81 453.0,56.23 454.0,54.57 455.0,52.85 456.0,51.07 457.0,49.24 458.0,47.36" fill="none" stroke="#3fa6e0" stroke-width="1"></polyline><polyline points="0.0,7.21 1.0,7.74 2.0,8.40 3.0,9.17 4.0,10.06 5.0,11.06 6.0,12.16 7.0,13.37 8.0,14.68 9.0,16.08 10.0,17.56 11.0,19.13 12.0,20.77 13.0,22.48 14.0,24.25 15.0,26.08 16.0,27.95 17.0,29.86 18.0,31.81 19.0,33.77 20.0,35.76 21.0,37.75 22.0,39.74 23.0,41.73 24.0,43.69 25.0,45.64 26.0,47.55 27.0,49.43 28.0,51.26 29.0,53.03 30.0,54.74 31.0,56.39 32.0,57.96 33.0,59.45 34.0,60.85 35.0,62.16 36.0,63.38 37.0,64.49 38.0,65.49 39.0,66.39 40.0,67.17 41.0,67.83 42.0,68.37 43.0,68.79 44.0,69.08 45.0,69.25 46.0,69.30 47.0,69.22 48.0,69.01 49.0,68.68 50.0,68.22 51.0,67.64 52.0,66.94 53.0,66.13 54.0,65.20 55.0,64.17 56.0,63.02 57.0,61.78 58.0,60.44 59.0,59.01 60.0,57.50 61.0,55.90 62.0,54.24 63.0,52.50 64.0,50.71 65.0,48.87 66.0,46.98 67.0,45.06 68.0,43.11 69.0,41.13 70.0,39.14 71.0,37.15 72.0,35.16 73.0,33.18 74.0,31.22 75.0,29.29 76.0,27.39 77.0,25.53 78.0,23.72 79.0,21.96 80.0,20.27 81.0,18.65 82.0,17.11 83.0,15.65 84.0,14.28 85.0,13.00 86.0,11.82 87.0,10.75 88.0,9.78 89.0,8.93 90.0,8.19 91.0,7.57 92.0,7.07 93.0,6.69 94.0,6.44 95.0,6.32 96.0,6.32 97.0,6.44 98.0,6.69 99.0,7.07 100.0,7.57 101.0,8.19 102.0,8.93 103.0,9.78 104.0,10.75 105.0,11.82 106.0,13.00 107.0,14.28 108.0,15.65 109.0,17.11 110.0,18.65 111.0,20.27 112.0,21.96 113.0,23.72 114.0,25.53 115.0,27.39 116.0,29.29 117.0,31.22 118.0,33.18 119.0,35.16 120.0,37.15 121.0,39.14 122.0,41.13 123.0,43.11 124.0,45.06 125.0,46.98 126.0,48.87 127.0,50.71 128.0,52.50 129.0,54.24 130.0,55.90 131.0,57.50 132.0,59.01 133.0,60.44 134.0,61.78 135.0,63.02 136.0,64.17 137.0,65.20 138.0,66.13 139.0,66.94 140.0,67.64 141.0,68.22 142.0,68.68 143.0,69.01 144.0,69.22 145.0,69.30 146.0,69.25 147.0,69.08 148.0,68.79 149.0,68.37 150.0,67.83 151.0,67.17 152.0,66.39 153.0,65.49 154.0,64.49 155.0,63.38 156.0,62.16 157.0,60.85 158.0,59.45 159.0,57.96 160.0,56.39 161.0,54.74 162.0,53.03 163.0,51.26 164.0,49.43 165.0,47.55 166.0,45.64 167.0,43.69 168.0,41.73 169.0,39.74 170.0,37.75 171.0,35.76 172.0,33.77 173.0,31.81 174.0,29.86 175.0,27.95 176.0,26.08 177.0,24.25 178.0,22.48 179.0,20.77 180.0,19.13 181.0,17.56 182.0,16.08 183.0,14.68 184.0,13.37 185.0,12.16 186.0,11.06 187.0,10.06 188.0,9.17 189.0,8.40 190.0,7.74 191.0,7.21 192.0,6.79 193.0,6.50 194.0,6.34 195.0,6.30 196.0,6.39 197.0,6.60 198.0,6.94 199.0,7.41 200.0,7.99 201.0,8.69 202.0,9.51 203.0,10.45 204.0,11.49 205.0,12.64 206.0,13.88 207.0,15.23 208.0,16.66 209.0,18.18 210.0,19.78 211.0,21.45 212.0,23.18 213.0,24.98 214.0,26.82 215.0,28.71 216.0,30.64 217.0,32.59 218.0,34.57 219.0,36.55 220.0,38.55 221.0,40.54 222.0,42.52 223.0,44.48 224.0,46.41 225.0,48.31 226.0,50.16 227.0,51.97 228.0,53.72 229.0,55.41 230.0,57.03 231.0,58.56 232.0,60.02 233.0,61.39 234.0,62.66 235.0,63.83 236.0,64.90 237.0,65.86 238.0,66.71 239.0,67.45 240.0,68.06 241.0,68.55 242.0,68.92 243.0,69.17 244.0,69.29 245.0,69.28 246.0,69.15 247.0,68.89 248.0,68.51 249.0,68.00 250.0,67.38 251.0,66.63 252.0,65.77 253.0,64.80 254.0,63.72 255.0,62.54 256.0,61.26 257.0,59.88 258.0,58.41 259.0,56.87 260.0,55.24 261.0,53.55 262.0,51.79 263.0,49.98 264.0,48.12 265.0,46.22 266.0,44.28 267.0,42.32 268.0,40.34 269.0,38.35 270.0,36.36 271.0,34.37 272.0,32.40 273.0,30.44 274.0,28.52 275.0,26.64 276.0,24.80 277.0,23.01 278.0,21.28 279.0,19.62 280.0,18.03 281.0,16.52 282.0,15.09 283.0,13.76 284.0,12.52 285.0,11.38 286.0,10.35 287.0,9.43 288.0,8.62 289.0,7.93 290.0,7.35 291.0,6.90 292.0,6.58 293.0,6.38 294.0,6.30 295.0,6.35 296.0,6.53 297.0,6.83 298.0,7.25 299.0,7.80 300.0,8.47 301.0,9.25 302.0,10.15 303.0,11.16 304.0,12.28 305.0,13.50 306.0,14.82 307.0,16.22 308.0,17.72 309.0,19.29 310.0,20.94 311.0,22.66 312.0,24.43 313.0,26.27 314.0,28.14 315.0,30.06 316.0,32.00 317.0,33.97 318.0,35.96 319.0,37.95 320.0,39.94 321.0,41.92 322.0,43.89 323.0,45.83 324.0,47.74 325.0,49.61 326.0,51.44 327.0,53.20 328.0,54.91 329.0,56.55 330.0,58.11 331.0,59.59 332.0,60.99 333.0,62.29 334.0,63.49 335.0,64.59 336.0,65.59 337.0,66.47 338.0,67.24 339.0,67.89 340.0,68.42 341.0,68.82 342.0,69.11 343.0,69.26 344.0,69.30 345.0,69.20 346.0,68.98 347.0,68.64 348.0,68.17 349.0,67.58 350.0,66.87 351.0,66.04 352.0,65.10 353.0,64.06 354.0,62.90 355.0,61.65 356.0,60.30 357.0,58.86 358.0,57.34 359.0,55.74 360.0,54.06 361.0,52.33 362.0,50.53 363.0,48.68 364.0,46.79 365.0,44.86 366.0,42.91 367.0,40.93 368.0,38.95 369.0,36.95 370.0,34.96 371.0,32.99 372.0,31.03 373.0,29.10 374.0,27.20 375.0,25.34 376.0,23.54 377.0,21.79 378.0,20.11 379.0,18.50 380.0,16.96 381.0,15.51 382.0,14.15 383.0,12.88 384.0,11.71 385.0,10.65 386.0,9.69 387.0,8.85 388.0,8.12 389.0,7.51 390.0,7.03 391.0,6.66 392.0,6.42 393.0,6.31 394.0,6.32 395.0,6.46 396.0,6.73 397.0,7.11 398.0,7.62 399.0,8.26 400.0,9.01 401.0,9.87 402.0,10.85 403.0,11.93 404.0,13.12 405.0,14.41 406.0,15.79 407.0,17.26 408.0,18.81 409.0,20.44 410.0,22.14 411.0,23.90 412.0,25.71 413.0,27.57 414.0,29.48 415.0,31.42 416.0,33.38 417.0,35.36 418.0,37.35 419.0,39.34 420.0,41.33 421.0,43.30 422.0,45.25 423.0,47.17 424.0,49.06 425.0,50.89 426.0,52.68 427.0,54.41 428.0,56.06 429.0,57.65 430.0,59.16 431.0,60.58 432.0,61.91 433.0,63.14 434.0,64.27 435.0,65.30 436.0,66.22 437.0,67.02 438.0,67.71 439.0,68.27 440.0,68.72 441.0,69.04 442.0,69.23 443.0,69.30 444.0,69.24 445.0,69.06 446.0,68.75 447.0,68.32 448.0,67.77 449.0,67.09 450.0,66.30 451.0,65.40 452.0,64.38 453.0,63.26 454.0,62.04 455.0,60.72 456.0,59.30 457.0,57.81 458.0,56.23" fill="none" stroke="#6cbfa0" stroke-width="1"></polyline><polyline points="0.0,6.39 1.0,6.30 2.0,6.34 3.0,6.50 4.0,6.79 5.0,7.21 6.0,7.74 7.0,8.40 8.0,9.17 9.0,10.06 10.0,11.06 11.0,12.16 12.0,13.37 13.0,14.68 14.0,16.08 15.0,17.56 16.0,19.13 17.0,20.77 18.0,22.48 19.0,24.25 20.0,26.08 21.0,27.95 22.0,29.86 23.0,31.81 24.0,33.77 25.0,35.76 26.0,37.75 27.0,39.74 28.0,41.73 29.0,43.69 30.0,45.64 31.0,47.55 32.0,49.43 33.0,51.26 34.0,53.03 35.0,54.74 36.0,56.39 37.0,57.96 38.0,59.45 39.0,60.85 40.0,62.16 41.0,63.38 42.0,64.49 43.0,65.49 44.0,66.39 45.0,67.17 46.0,67.83 47.0,68.37 48.0,68.79 49.0,69.08 50.0,69.25 51.0,69.30 52.0,69.22 53.0,69.01 54.0,68.68 55.0,68.22 56.0,67.64 57.0,66.94 58.0,66.13 59.0,65.20 60.0,64.17 61.0,63.02 62.0,61.78 63.0,60.44 64.0,59.01 65.0,57.50 66.0,55.90 67.0,54.24 68.0,52.50 69.0,50.71 70.0,48.87 71.0,46.98 72.0,45.06 73.0,43.11 74.0,41.13 75.0,39.14 76.0,37.15 77.0,35.16 78.0,33.18 79.0,31.22 80.0,29.29 81.0,27.39 82.0,25.53 83.0,23.72 84.0,21.96 85.0,20.27 86.0,18.65 87.0,17.11 88.0,15.65 89.0,14.28 90.0,13.00 91.0,11.82 92.0,10.75 93.0,9.78 94.0,8.93 95.0,8.19 96.0,7.57 97.0,7.07 98.0,6.69 99.0,6.44 100.0,6.32 101.0,6.32 102.0,6.44 103.0,6.69 104.0,7.07 105.0,7.57 106.0,8.19 107.0,8.93 108.0,9.78 109.0,10.75 110.0,11.82 111.0,13.00 112.0,14.28 113.0,15.65 114.0,17.11 115.0,18.65 116.0,20.27 117.0,21.96 118.0,23.72 119.0,25.53 120.0,27.39 121.0,29.29 122.0,31.22 123.0,33.18 124.0,35.16 125.0,37.15 126.0,39.14 127.0,41.13 128.0,43.11 129.0,45.06 130.0,46.98 131.0,48.87 132.0,50.71 133.0,52.50 134.0,54.24 135.0,55.90 136.0,57.50 137.0,59.01 138.0,60.44 139.0,61.78 140.0,63.02 141.0,64.17 142.0,65.20 143.0,66.13 144.0,66.94 145.0,67.64 146.0,68.22 147.0,68.68 148.0,69.01 149.0,69.22 150.0,69.30 151.0,69.25 152.0,69.08 153.0,68.79 154.0,68.37 155.0,67.83 156.0,67.17 157.0,66.39 158.0,65.49 159.0,64.49 160.0,63.38 161.0,62.16 162.0,60.85 163.0,59.45 164.0,57.96 165.0,56.39 166.0,54.74 167.0,53.03 168.0,51.26 169.0,49.43 170.0,47.55 171.0,45.64 172.0,43.69 173.0,41.73 174.0,39.74 175.0,37.75 176.0,35.76 177.0,33.77 178.0,31.81 179.0,29.86 180.0,27.95 181.0,26.08 182.0,24.25 183.0,22.48 184.0,20.77 185.0,19.13 186.0,17.56 187.0,16.08 188.0,14.68 189.0,13.37 190.0,12.16 191.0,11.06 192.0,10.06 193.0,9.17 194.0,8.40 195.0,7.74 196.0,7.21 197.0,6.79 198.0,6.50 199.0,6.34 200.0,6.30 201.0,6.39 202.0,6.60 203.0,6.94 204.0,7.41 205.0,7.99 206.0,8.69 207.0,9.51 208.0,10.45 209.0,11.49 210.0,12.64 211.0,13.88 212.0,15.23 213.0,16.66 214.0,18.18 215.0,19.78 216.0,21.45 217.0,23.18 218.0,24.98 219.0,26.82 220.0,28.71 221.0,30.64 222.0,32.59 223.0,34.57 224.0,36.55 225.0,38.55 226.0,40.54 227.0,42.52 228.0,44.48 229.0,46.41 230.0,48.31 231.0,50.16 232.0,51.97 233.0,53.72 234.0,55.41 235.0,57.03 236.0,58.56 237.0,60.02 238.0,61.39 239.0,62.66 240.0,63.83 241.0,64.90 242.0,65.86 243.0,66.71 244.0,67.45 245.0,68.06 246.0,68.55 247.0,68.92 248.0,69.17 249.0,69.29 250.0,69.28 251.0,69.15 252.0,68.89 253.0,68.51 254.0,68.00 255.0,67.38 256.0,66.63 257.0,65.77 258.0,64.80 259.0,63.72 260.0,62.54 261.0,61.26 262.0,59.88 263.0,58.41 264.0,56.87 265.0,55.24 266.0,53.55 267.0,51.79 268.0,49.98 269.0,48.12 270.0,46.22 271.0,44.28 272.0,42.32 273.0,40.34 274.0,38.35 275.0,36.36 276.0,34.37 277.0,32.40 278.0,30.44 279.0,28.52 280.0,26.64 281.0,24.80 282.0,23.01 283.0,21.28 284.0,19.62 285.0,18.03 286.0,16.52 287.0,15.09 288.0,13.76 289.0,12.52 290.0,11.38 291.0,10.35 292.0,9.43 293.0,8.62 294.0,7.93 295.0,7.35 296.0,6.90 297.0,6.58 298.0,6.38 299.0,6.30 300.0,6.35 301.0,6.53 302.0,6.83 303.0,7.25 304.0,7.80 305.0,8.47 306.0,9.25 307.0,10.15 308.0,11.16 309.0,12.28 310.0,13.50 311.0,14.82 312.0,16.22 313.0,17.72 314.0,19.29 315.0,20.94 316.0,22.66 317.0,24.43 318.0,26.27 319.0,28.14 320.0,30.06 321.0,32.00 322.0,33.97 323.0,35.96 324.0,37.95 325.0,39.94 326.0,41.92 327.0,43.89 328.0,45.83 329.0,47.74 330.0,49.61 331.0,51.44 332.0,53.20 333.0,54.91 334.0,56.55 335.0,58.11 336.0,59.59 337.0,60.99 338.0,62.29 339.0,63.49 340.0,64.59 341.0,65.59 342.0,66.47 343.0,67.24 344.0,67.89 345.0,68.42 346.0,68.82 347.0,69.11 348.0,69.26 349.0,69.30 350.0,69.20 351.0,68.98 352.0,68.64 353.0,68.17 354.0,67.58 355.0,66.87 356.0,66.04 357.0,65.10 358.0,64.06 359.0,62.90 360.0,61.65 361.0,60.30 362.0,58.86 363.0,57.34 364.0,55.74 365.0,54.06 366.0,52.33 367.0,50.53 368.0,48.68 369.0,46.79 370.0,44.86 371.0,42.91 372.0,40.93 373.0,38.95 374.0,36.95 375.0,34.96 376.0,32.99 377.0,31.03 378.0,29.10 379.0,27.20 380.0,25.34 381.0,23.54 382.0,21.79 383.0,20.11 384.0,18.50 385.0,16.96 386.0,15.51 387.0,14.15 388.0,12.88 389.0,11.71 390.0,10.65 391.0,9.69 392.0,8.85 393.0,8.12 394.0,7.51 395.0,7.03 396.0,6.66 397.0,6.42 398.0,6.31 399.0,6.32 400.0,6.46 401.0,6.73 402.0,7.11 403.0,7.62 404.0,8.26 405.0,9.01 406.0,9.87 407.0,10.85 408.0,11.93 409.0,13.12 410.0,14.41 411.0,15.79 412.0,17.26 413.0,18.81 414.0,20.44 415.0,22.14 416.0,23.90 417.0,25.71 418.0,27.57 419.0,29.48 420.0,31.42 421.0,33.38 422.0,35.36 423.0,37.35 424.0,39.34 425.0,41.33 426.0,43.30 427.0,45.25 428.0,47.17 429.0,49.06 430.0,50.89 431.0,52.68 432.0,54.41 433.0,56.06 434.0,57.65 435.0,59.16 436.0,60.58 437.0,61.91 438.0,63.14 439.0,64.27 440.0,65.30 441.0,66.22 442.0,67.02 443.0,67.71 444.0,68.27 445.0,68.72 446.0,69.04 447.0,69.23 448.0,69.30 449.0,69.24 450.0,69.06 451.0,68.75 452.0,68.32 453.0,67.77 454.0,67.09 455.0,66.30 456.0,65.40 457.0,64.38 458.0,63.26" fill="none" stroke="#cf6f6c" stroke-width="1"></polyline></svg>
<svg class="a" style="left:14px;top:863px;" width="10" height="10" viewBox="0 0 10 10"><circle cx="5" cy="5" r="4.4" fill="none" stroke="#6a6a6a" stroke-width="1.1"></circle></svg>
<div class="t" style="left: 30px; top: 862px; font-size: 13px; color: rgb(218, 218, 218); transform: scaleX(0.9327); transform-origin: 0px 0px;">Strength</div>
<svg class="a" style="left:14px;top:885px;" width="10" height="10" viewBox="0 0 10 10"><circle cx="5" cy="5" r="4.4" fill="none" stroke="#6a6a6a" stroke-width="1.1"></circle></svg>
<div class="t" style="left: 30px; top: 884px; font-size: 13px; color: rgb(218, 218, 218); transform: scaleX(0.8955); transform-origin: 0px 0px;">Strength Fades to Zero</div>
<svg class="a" style="left:14px;top:907px;" width="10" height="10" viewBox="0 0 10 10"><circle cx="5" cy="5" r="4.4" fill="none" stroke="#6a6a6a" stroke-width="1.1"></circle></svg>
<div class="t" style="left: 30px; top: 906px; font-size: 13px; color: rgb(218, 218, 218); transform: scaleX(0.8929); transform-origin: 0px 0px;">Type</div>
<svg class="a" style="left:14px;top:929px;" width="10" height="10" viewBox="0 0 10 10"><circle cx="5" cy="5" r="4.4" fill="none" stroke="#6a6a6a" stroke-width="1.1"></circle></svg>
<div class="t" style="left: 30px; top: 928px; font-size: 13px; color: rgb(218, 218, 218); transform: scaleX(0.8985); transform-origin: 0px 0px;">Wave Style</div>
<div class="t" style="left: 30px; top: 950px; font-size: 13px; color: rgb(156, 156, 156); transform: scaleX(0.9028); transform-origin: 0px 0px;">Graph</div>
<div class="a" style="left:177px;top:860px;width:94px;height:16px;background:#2b2b2b;border-radius:2px"></div>
<div class="t" style="left:181px;top:862.34px;font-size:12px;color:#5e5e5e;">%</div>
<div class="t" style="left: 194.5px; top: 861.5px; font-size: 13px; color: rgb(220, 220, 220); transform: scaleX(0.8788); transform-origin: 0px 0px;">100.0</div>
<div class="a" style="left:177px;top:882px;width:16px;height:16px;background:#2a2a2a;border-radius:2px"></div>
<svg class="a" style="left:177px;top:882px;" width="16" height="16" viewBox="0 0 16 16"><path d="M3.5 8.3 L6.7 11.8 L12.8 3.8" fill="none" stroke="#2ecc5a" stroke-width="2"></path></svg>
<div class="a" style="left:177.6px;top:905px;width:192px;height:15px;background:#505050;border-radius:3px"></div>
<div class="t" style="left: 180.6px; top: 905.8px; font-size: 13px; color: rgb(224, 224, 224); transform: scaleX(0.9125); transform-origin: 0px 0px;">Cosine</div>
<svg class="a" style="left:356.6px;top:910px;" width="9" height="6" viewBox="0 0 9 6"><path d="M0.5 0.5 L4.5 5 L8.5 0.5" fill="none" stroke="#cfcfcf" stroke-width="1"></path></svg>
<div class="a" style="left:177.6px;top:927px;width:192px;height:15px;background:#505050;border-radius:3px"></div>
<div class="t" style="left: 180.6px; top: 927.8px; font-size: 13px; color: rgb(224, 224, 224); transform: scaleX(0.9524); transform-origin: 0px 0px;">Normal</div>
<svg class="a" style="left:356.6px;top:932px;" width="9" height="6" viewBox="0 0 9 6"><path d="M0.5 0.5 L4.5 5 L8.5 0.5" fill="none" stroke="#cfcfcf" stroke-width="1"></path></svg>
<div class="a" style="left:178px;top:948px;width:16px;height:16px;background:#2f2f2f;border-radius:3px;border:1px solid #3a3a3a"></div>
<svg class="a" style="left:180px;top:950px;" width="12" height="12" viewBox="0 0 12 12"><path d="M2 0.5 V11 M0 10 H11.5 M2.5 9.5 L10.5 3" stroke="#d8d8d8" stroke-width="1"></path></svg>
<div class="a" style="left:7px;top:969px;width:462px;height:1px;background:#282828;"></div>
<svg class="a" style="left:14px;top:978px;" width="10" height="10" viewBox="0 0 10 10"><circle cx="5" cy="5" r="4.4" fill="none" stroke="#6a6a6a" stroke-width="1.1"></circle></svg>
<div class="t" style="left: 30px; top: 977px; font-size: 13px; color: rgb(218, 218, 218); transform: scaleX(0.9491); transform-origin: 0px 0px;">Minimum</div>
<svg class="a" style="left:14px;top:1000px;" width="10" height="10" viewBox="0 0 10 10"><circle cx="5" cy="5" r="4.4" fill="none" stroke="#6a6a6a" stroke-width="1.1"></circle></svg>
<div class="t" style="left: 30px; top: 999px; font-size: 13px; color: rgb(218, 218, 218); transform: scaleX(0.9375); transform-origin: 0px 0px;">Maximum</div>
<div class="a" style="left:177px;top:975.7px;width:94px;height:16px;background:#2b2b2b;border-radius:2px"></div>
<div class="t" style="left:181px;top:978.04px;font-size:12px;color:#5e5e5e;">#</div>
<div class="t" style="left: 194.5px; top: 977.2px; font-size: 13px; color: rgb(214, 191, 124); transform: scaleX(0.9189); transform-origin: 0px 0px;">-400.0</div>
<div class="a" style="left:260px;top:975.7px;width:11px;height:16px;background:#333;border-radius:0 2px 2px 0"></div>
<svg class="a" style="left:251.5px;top:979.7px;" width="6" height="8" viewBox="0 0 6 8"><path d="M0 4 L2.6 0.3 H6 V7.7 H2.6Z" fill="#d4b96a"></path></svg>
<svg class="a" style="left:262.5px;top:979.7px;" width="6" height="8" viewBox="0 0 6 8"><path d="M6 4 L3.4 0.3 H0 V7.7 H3.4Z" fill="#c04fe0"></path></svg>
<div class="a" style="left:153px;top:997.3px;width:16px;height:16px;background:#2a2a2a;border-radius:3px"></div>
<div class="t" style="left:156px;top:997.80px;font-size:13px;color:#e0e0e0;">π</div>
<div class="a" style="left:177px;top:997.3px;width:94px;height:16px;background:#2b2b2b;border-radius:2px"></div>
<div class="t" style="left:181px;top:999.64px;font-size:12px;color:#5e5e5e;">#</div>
<div class="t" style="left: 194.5px; top: 998.8px; font-size: 13px; color: rgb(214, 191, 124); transform: scaleX(0.8939); transform-origin: 0px 0px;">400.0</div>
<div class="a" style="left:260px;top:997.3px;width:11px;height:16px;background:#333;border-radius:0 2px 2px 0"></div>
<svg class="a" style="left:251.5px;top:1001.3px;" width="6" height="8" viewBox="0 0 6 8"><path d="M0 4 L2.6 0.3 H6 V7.7 H2.6Z" fill="#d4b96a"></path></svg>
<svg class="a" style="left:262.5px;top:1001.3px;" width="6" height="8" viewBox="0 0 6 8"><path d="M6 4 L3.4 0.3 H0 V7.7 H3.4Z" fill="#7a7a7a"></path></svg>
<svg class="a" style="left:14px;top:1022px;" width="10" height="10" viewBox="0 0 10 10"><circle cx="5" cy="5" r="4.4" fill="none" stroke="#6a6a6a" stroke-width="1.1"></circle></svg>
<div class="a" style="left:177px;top:1019.5px;width:94px;height:4px;background:#2b2b2b;"></div>
<div class="a" style="left:0px;top:1024px;width:488px;height:2px;background:#262626;"></div>
<div class="a" style="left:0px;top:1026px;width:488px;height:4px;background:#1e1e1e;"></div>
<div class="a" style="left:488px;top:85px;width:6px;height:495px;background:#141414;"></div>
<div class="a" style="left:494px;top:85px;width:30px;height:495px;background:#454545;"></div>
<div class="a" style="left:494px;top:85px;width:30px;height:10px;background:#3a3a3a;"></div>
<div class="a" style="left:503px;top:89px;width:2px;height:2px;background:#8a8a8a;"></div>
<div class="a" style="left:508px;top:89px;width:2px;height:2px;background:#8a8a8a;"></div>
<div class="a" style="left:513px;top:89px;width:2px;height:2px;background:#8a8a8a;"></div>
<div class="a" style="left:495px;top:96px;width:28px;height:28px;background:#141414;border-radius:4px"></div>
<svg class="a" style="left:494px;top:85px;" width="30" height="495" viewBox="0 0 30 495"><defs><linearGradient id="gw" x1="0" y1="0" x2="0" y2="1"><stop offset="0" stop-color="#f4f4f4"></stop><stop offset="1" stop-color="#bdbdbd"></stop></linearGradient></defs><path d="M10.3 14.3 V32.3 L14 28 L16 33.6 L19.5 32 L17.5 27 L22.8 26.5 Z" fill="none" stroke="#3ecf6a" stroke-width="1.3" stroke-linejoin="round"></path><path d="M10.2 44.9 L24.2 58.8 H16 L10.2 65 Z" fill="#e6e6e6"></path><path d="M6.5 78 L15 79 L20.5 84 L22 88 L18 92 L14 90.5 L9.5 85.5 Z" fill="url(#gw)"></path><path d="M19.5 91 L23.5 87 L25.2 88.7 L21.2 92.7 Z" fill="#d8d8d8"></path><circle cx="15.3" cy="85.3" r="1.4" fill="#333"></circle><path d="M6.8 78.3 L15 85" stroke="#444" stroke-width="0.8"></path><path d="M20.8 106.3 L23.7 109.2 L9.6 123.2 L6.8 120.4 Z" fill="url(#gw)"></path><circle cx="22.4" cy="107.6" r="1.9" fill="#e8e8e8"></circle><path d="M6.8 120.4 L9.6 123.2 L5.6 124.4 Z" fill="#cfcfcf"></path><rect x="7" y="137.8" width="8" height="1.4" fill="#e0e0e0"></rect><path d="M4.8 140 H17.9 V148.5 L15.5 150.9 H4.8 Z" fill="url(#gw)"></path><circle cx="7.9" cy="143" r="1.2" fill="#333"></circle><path d="M18.8 143.5 L25.4 140 V150.5 L18.8 147 Z" fill="#dcdcdc"></path><path d="M7 183 L23 167" stroke="#d8d8d8" stroke-width="1.1"></path><path d="M8 197 H22 V200.4 H17 V213 H13 V200.4 H8Z" fill="url(#gw)"></path><path d="M7 226.2 L14.9 233.7 L10.2 234.2 L7.2 237.8 Z" fill="#dcdcdc"></path><g fill="#e8e8e8"><rect x="18.8" y="225.8" width="2.4" height="2.4"></rect><rect x="5.8" y="241.7" width="2.4" height="2.4"></rect><rect x="21.8" y="241.7" width="2.4" height="2.4"></rect><rect x="6.8" y="239.6" width="1.2" height="1.2"></rect></g><path d="M12.2 227.9 L16.6 227.3 M20.3 230.2 L23 240.2 M10.3 242.9 L19.7 242.9" stroke="#d8d8d8" stroke-width="1"></path><rect x="8" y="258" width="14" height="14" fill="url(#gw)"></rect><circle cx="15" cy="295" r="8" fill="url(#gw)"></circle><path d="M15 316 L23 322 L20 332 H10 L7 322Z" fill="url(#gw)"></path><path d="M15 345.5 L17.2 351.5 L23.5 351.7 L18.5 355.6 L20.2 362 L15 358.3 L9.8 362 L11.5 355.6 L6.5 351.7 L12.8 351.5Z" fill="url(#gw)" transform="translate(15 354.5) scale(1.1) translate(-15 -354.5)"></path><path d="M21.5 384.5 A6.8 6.8 0 1 0 12.3 392.4" fill="none" stroke="url(#gw)" stroke-width="3"></path><path d="M15 405.5 Q16.2 413.2 24 414.4 Q16.2 415.6 15 423.3 Q13.8 415.6 6 414.4 Q13.8 413.2 15 405.5Z" fill="url(#gw)"></path><path d="M10 480 L14 484 L10 488 M15 480 L19 484 L15 488" fill="none" stroke="#bbb" stroke-width="1.2"></path></svg>
<div class="a" style="left:524px;top:85px;width:6px;height:495px;background:#141414;"></div>
<div class="a" style="left:530px;top:85px;width:1057px;height:22px;background:#1f1f1f;"></div>
<div class="a" style="left:530px;top:85px;width:87px;height:22px;background:#454545;border-radius:3px 3px 0 0"></div>
<div class="t" style="left: 535px; top: 90px; font-size: 13px; color: rgb(224, 224, 224); transform: scaleX(0.9277); transform-origin: 0px 0px;">Composition 4</div>
<div class="a" style="left:530px;top:107px;width:1057px;height:451px;background:#000;"></div>
<div class="a" style="left:694px;top:127px;width:728.5px;height:410px;background:#00afff;"></div>
<div class="a" style="left:1020px;top:294px;width:76px;height:76px;border-radius:50%;background:#529fff"></div>
<div class="t" style="left: 569.4px; top: 461.44px; font-size: 12px; color: rgb(240, 240, 240); transform: scaleX(0.9389); transform-origin: 0px 0px;">Hold S</div>
<div class="t" style="left: 569.4px; top: 475.14px; font-size: 12px; color: rgb(240, 240, 240); transform: scaleX(0.9); transform-origin: 0px 0px;">Space</div>
<div class="t" style="left: 569.4px; top: 489.04px; font-size: 12px; color: rgb(240, 240, 240); transform: scaleX(0.9321); transform-origin: 0px 0px;">Space + click + drag</div>
<div class="t" style="left: 569.4px; top: 503.04px; font-size: 12px; color: rgb(240, 240, 240); transform: scaleX(0.973); transform-origin: 0px 0px;">Alt + click + drag</div>
<div class="a" style="left:530px;top:450px;width:164px;height:75px;overflow:hidden">
<div class="t" style="left: 76px; top: 11.44px; font-size: 12px; color: rgb(74, 74, 74); transform: scaleX(0.9829); transform-origin: 0px 0px;">Direct Layer Selection</div>
<div class="t" style="left: 73.2px; top: 25.14px; font-size: 12px; color: rgb(74, 74, 74); transform: scaleX(0.96); transform-origin: 0px 0px;">Play/ Stop</div>
<div class="t" style="left: 144.2px; top: 39.04px; font-size: 12px; color: rgb(74, 74, 74); transform: scaleX(0.9286); transform-origin: 0px 0px;">Pan</div>
<div class="t" style="left: 128.8px; top: 53.04px; font-size: 12px; color: rgb(74, 74, 74); transform: scaleX(0.9922); transform-origin: 0px 0px;">Move Pivot Point</div>
</div><div class="a" style="left:694px;top:450px;width:120px;height:75px;overflow:hidden">
<div class="t" style="left: -88px; top: 11.44px; font-size: 12px; color: rgb(109, 98, 178); transform: scaleX(0.9829); transform-origin: 0px 0px;">Direct Layer Selection</div>
<div class="t" style="left: -90.8px; top: 25.14px; font-size: 12px; color: rgb(109, 98, 178); transform: scaleX(0.96); transform-origin: 0px 0px;">Play/ Stop</div>
<div class="t" style="left: -19.8px; top: 39.04px; font-size: 12px; color: rgb(109, 98, 178); transform: scaleX(0.9286); transform-origin: 0px 0px;">Pan</div>
<div class="t" style="left: -35.2px; top: 53.04px; font-size: 12px; color: rgb(109, 98, 178); transform: scaleX(0.9922); transform-origin: 0px 0px;">Move Pivot Point</div>
</div>
<div class="t" style="left: 997.8px; top: 537.24px; font-size: 12px; color: rgb(242, 242, 242); transform: scaleX(1.0168); transform-origin: 0px 0px;">Viewport Quality: High</div>
<div class="a" style="left:530px;top:558px;width:1057px;height:22px;background:#454545;"></div>
<div class="a" style="left:535px;top:561.2px;width:78px;height:15.5px;background:#2a2a2a;border-radius:3px"></div>
<div class="t" style="left: 538.5px; top: 562.4px; font-size: 13px; color: rgb(224, 224, 224); transform: scaleX(0.8269); transform-origin: 0px 0px;">38%</div>
<svg class="a" style="left:601px;top:566px;" width="9" height="6" viewBox="0 0 9 6"><path d="M0.5 0.5 L4.5 5 L8.5 0.5" fill="none" stroke="#cfcfcf" stroke-width="1"></path></svg>
<div class="a" style="left:1232.3px;top:560px;width:36.5px;height:17.8px;background:#333;border-radius:3px"></div>
<svg class="a" style="left:1233px;top:563px;" width="14" height="10" viewBox="0 0 14 10"><path d="M0.5 5 L4 0.5 H13.5 V9.5 H4Z" fill="#cfcfcf"></path><circle cx="4.5" cy="5" r="1.3" fill="#333"></circle></svg>
<div class="t" style="left: 1258px; top: 562.5px; font-size: 13px; color: rgb(220, 220, 220); transform: scaleX(1.0429); transform-origin: 0px 0px;">0</div>
<div class="a" style="left:1272px;top:559.5px;width:31.299999999999955px;height:19px;background:#2e2e2e;border-radius:4px;border:1px solid #262626"></div>
<div class="a" style="left:1291.4px;top:561px;width:1px;height:16px;background:#1f1f1f;"></div>
<svg class="a" style="left:1295.4px;top:565px;" width="7" height="9" viewBox="0 0 7 9"><path d="M0.5 0.5 L6 4.5 L0.5 8.5Z" fill="none" stroke="#8a8a8a" stroke-width="0.9"></path></svg>
<div class="a" style="left:1307.3px;top:559.5px;width:30.90000000000009px;height:19px;background:#2e2e2e;border-radius:4px;border:1px solid #262626"></div>
<div class="a" style="left:1326px;top:561px;width:1px;height:16px;background:#1f1f1f;"></div>
<svg class="a" style="left:1330px;top:565px;" width="7" height="9" viewBox="0 0 7 9"><path d="M0.5 0.5 L6 4.5 L0.5 8.5Z" fill="none" stroke="#8a8a8a" stroke-width="0.9"></path></svg>
<div class="a" style="left:1342px;top:559.5px;width:31px;height:19px;background:#2e2e2e;border-radius:4px;border:1px solid #262626"></div>
<div class="a" style="left:1361px;top:561px;width:1px;height:16px;background:#1f1f1f;"></div>
<svg class="a" style="left:1365px;top:565px;" width="7" height="9" viewBox="0 0 7 9"><path d="M0.5 0.5 L6 4.5 L0.5 8.5Z" fill="none" stroke="#8a8a8a" stroke-width="0.9"></path></svg>
<div class="a" style="left:1423.3px;top:559.5px;width:30.700000000000045px;height:19px;background:#2e2e2e;border-radius:4px;border:1px solid #262626"></div>
<div class="a" style="left:1442.5px;top:561px;width:1px;height:16px;background:#1f1f1f;"></div>
<svg class="a" style="left:1446.5px;top:565px;" width="7" height="9" viewBox="0 0 7 9"><path d="M0.5 0.5 L6 4.5 L0.5 8.5Z" fill="none" stroke="#8a8a8a" stroke-width="0.9"></path></svg>
<div class="a" style="left:1457.9px;top:559.5px;width:31.299999999999955px;height:19px;background:#2e2e2e;border-radius:4px;border:1px solid #262626"></div>
<div class="a" style="left:1477.5px;top:561px;width:1px;height:16px;background:#1f1f1f;"></div>
<svg class="a" style="left:1481.5px;top:565px;" width="7" height="9" viewBox="0 0 7 9"><path d="M0.5 0.5 L6 4.5 L0.5 8.5Z" fill="none" stroke="#8a8a8a" stroke-width="0.9"></path></svg>
<div class="a" style="left:1493.4px;top:559.5px;width:30.59999999999991px;height:19px;background:#2e2e2e;border-radius:4px;border:1px solid #262626"></div>
<div class="a" style="left:1512.5px;top:561px;width:1px;height:16px;background:#1f1f1f;"></div>
<svg class="a" style="left:1516.5px;top:565px;" width="7" height="9" viewBox="0 0 7 9"><path d="M0.5 0.5 L6 4.5 L0.5 8.5Z" fill="none" stroke="#8a8a8a" stroke-width="0.9"></path></svg>
<div class="a" style="left:1528px;top:559.5px;width:31px;height:19px;background:#2e2e2e;border-radius:4px;border:1px solid #262626"></div>
<div class="a" style="left:1547.5px;top:561px;width:1px;height:16px;background:#1f1f1f;"></div>
<svg class="a" style="left:1551.5px;top:565px;" width="7" height="9" viewBox="0 0 7 9"><path d="M0.5 0.5 L6 4.5 L0.5 8.5Z" fill="none" stroke="#8a8a8a" stroke-width="0.9"></path></svg>
<div class="a" style="left:1308px;top:560.5px;width:18px;height:17px;background:#484848;border-radius:3px 0 0 3px"></div>
<div class="a" style="left:1343px;top:560.5px;width:18px;height:17px;background:#383838;border-radius:3px 0 0 3px"></div>
<div class="a" style="left:1377px;top:559.5px;width:19.59999999999991px;height:19px;background:#2e2e2e;border-radius:4px;border:1px solid #262626"></div>
<div class="a" style="left:1400.4px;top:559.5px;width:18.59999999999991px;height:19px;background:#2e2e2e;border-radius:4px;border:1px solid #262626"></div>
<div class="a" style="left:1562.8px;top:559.5px;width:19.700000000000045px;height:19px;background:#2e2e2e;border-radius:4px;border:1px solid #262626"></div>
<svg class="a" style="left:1275px;top:562px;" width="16" height="14" viewBox="0 0 16 14"><path d="M0.5 4.5 H3.5 L8 0.5 V13.5 L3.5 9.5 H0.5Z" fill="#3ecf6a"></path><path d="M10 4 Q11.5 7 10 10 M12.2 2.5 Q14.6 7 12.2 11.5" fill="none" stroke="#3ecf6a" stroke-width="1.3"></path></svg>
<svg class="a" style="left:1310px;top:562px;" width="15" height="14" viewBox="0 0 15 14"><g transform="rotate(-40 7.5 7)"><path d="M3 12 V7 A4.5 4.5 0 0 1 12 7 V12" fill="none" stroke="#d8d8d8" stroke-width="2.4" stroke-linecap="round"></path></g></svg>
<svg class="a" style="left:1345px;top:562px;" width="14" height="14" viewBox="0 0 14 14"><path d="M4.5 0 V14 M9.5 0 V14 M0 4.5 H14 M0 9.5 H14" stroke="#e0e0e0" stroke-width="1.1"></path></svg>
<svg class="a" style="left:1379px;top:562px;" width="16" height="13" viewBox="0 0 16 13"><rect x="0" y="0" width="4" height="3" fill="#3ecf6a"></rect><rect x="0" y="4.5" width="4" height="8" fill="#3ecf6a"></rect><rect x="5.5" y="0.5" width="10" height="7" fill="none" stroke="#3ecf6a" stroke-width="1.4"></rect><rect x="5.5" y="9" width="10.5" height="3.5" fill="#3ecf6a"></rect></svg>
<svg class="a" style="left:1403px;top:563px;" width="14" height="11" viewBox="0 0 14 11"><path d="M0.5 0.5 L4.5 5.5 L0.5 10.5 Z M5 0.5 L9 5.5 L5 10.5 M9.5 0.5 L13.5 5.5 L9.5 10.5" fill="#cfcfcf" stroke="#cfcfcf" stroke-width="1.2"></path></svg>
<svg class="a" style="left:1426px;top:563px;" width="14" height="12" viewBox="0 0 14 12"><rect x="0.5" y="0.5" width="13" height="9" fill="none" stroke="#cfcfcf" stroke-width="1.2"></rect><rect x="0" y="10" width="14" height="2" fill="#cfcfcf"></rect></svg>
<svg class="a" style="left:1461px;top:562px;" width="14" height="14" viewBox="0 0 14 14"><rect x="0.5" y="0.5" width="8" height="6" fill="none" stroke="#cfcfcf"></rect><path d="M3 8.5 H10.5 V3 M5 11 H13 V5 M7 13.5 H13.5" fill="none" stroke="#cfcfcf"></path></svg>
<svg class="a" style="left:1496px;top:562px;" width="14" height="14" viewBox="0 0 14 14"><rect x="0.5" y="0.5" width="8" height="8" fill="#cfcfcf"></rect><rect x="5" y="5" width="8.5" height="8.5" fill="#2e2e2e" stroke="#cfcfcf" stroke-width="1.2"></rect></svg>
<svg class="a" style="left:1531px;top:562px;" width="14" height="14" viewBox="0 0 14 14"><g fill="#3ecf6a"><rect x="0" y="0" width="3.5" height="3.5"></rect><rect x="7" y="0" width="3.5" height="3.5"></rect><rect x="3.5" y="3.5" width="3.5" height="3.5"></rect><rect x="10.5" y="3.5" width="3.5" height="3.5"></rect><rect x="0" y="7" width="3.5" height="3.5"></rect><rect x="7" y="7" width="3.5" height="3.5"></rect><rect x="3.5" y="10.5" width="3.5" height="3.5"></rect><rect x="10.5" y="10.5" width="3.5" height="3.5"></rect></g></svg>
<svg class="a" style="left:1565px;top:562px;" width="15" height="15" viewBox="0 0 15 15"><g transform="translate(7.5,7.5)"><circle r="5" fill="none" stroke="#d8d8d8" stroke-width="3.2"></circle><rect x="-1.5" y="-7.5" width="3" height="3" fill="#d8d8d8" transform="rotate(0)"></rect><rect x="-1.5" y="-7.5" width="3" height="3" fill="#d8d8d8" transform="rotate(45)"></rect><rect x="-1.5" y="-7.5" width="3" height="3" fill="#d8d8d8" transform="rotate(90)"></rect><rect x="-1.5" y="-7.5" width="3" height="3" fill="#d8d8d8" transform="rotate(135)"></rect><rect x="-1.5" y="-7.5" width="3" height="3" fill="#d8d8d8" transform="rotate(180)"></rect><rect x="-1.5" y="-7.5" width="3" height="3" fill="#d8d8d8" transform="rotate(225)"></rect><rect x="-1.5" y="-7.5" width="3" height="3" fill="#d8d8d8" transform="rotate(270)"></rect><rect x="-1.5" y="-7.5" width="3" height="3" fill="#d8d8d8" transform="rotate(315)"></rect><circle r="1.8" fill="#2e2e2e"></circle></g></svg>
<div class="a" style="left:1587px;top:85px;width:6px;height:495px;background:#141414;"></div>
<div class="a" style="left:488px;top:585px;width:6px;height:445px;background:#141414;"></div>
<div class="a" style="left:488px;top:580px;width:1426px;height:5px;background:#141414;"></div>
<div class="a" style="left:1593px;top:85px;width:327px;height:22px;background:#1f1f1f;"></div>
<div class="a" style="left:1593px;top:85px;width:40px;height:22px;background:#454545;border-radius:3px 3px 0 0"></div>
<div class="t" style="left: 1598.5px; top: 90.1px; font-size: 13px; color: rgb(224, 224, 224); transform: scaleX(0.9194); transform-origin: 0px 0px;">Color</div>
<div class="a" style="left:1633px;top:85px;width:69.5px;height:22px;background:#2a2a2a;border-radius:3px 3px 0 0"></div>
<div class="t" style="left: 1639.7px; top: 90.1px; font-size: 13px; color: rgb(224, 224, 224); transform: scaleX(0.8697); transform-origin: 0px 0px;">Add Layers</div>
<div class="a" style="left:1593px;top:107px;width:307px;height:377px;background:#454545;"></div>
<div class="a" style="left:1900px;top:107px;width:14px;height:377px;background:#3a3a3a;"></div>
<div class="a" style="left:1901.5px;top:153px;width:9.5px;height:303px;background:#555;border-radius:5px"></div>
<div class="a" style="left:1593px;top:107px;width:307px;height:376px;overflow:hidden"><div class="a" style="left:53px;top:-47.7px;width:200px;height:200px;border-radius:50%;background:conic-gradient(from 90deg,#ff0000,#ff00ff 60deg,#0000ff 120deg,#00ffff 180deg,#00ff00 240deg,#ffff00 300deg,#ff0000 360deg);-webkit-mask:radial-gradient(circle,transparent 74.5px,#000 75.5px);mask:radial-gradient(circle,transparent 74.5px,#000 75.5px)"></div></div>
<div class="a" style="left:1702px;top:116px;width:90px;height:90px;background:linear-gradient(to right,#000,rgba(0,0,0,0)),linear-gradient(to bottom,#fff,#2a00ff)"></div>
<svg class="a" style="left:1785px;top:170px;" width="13" height="13" viewBox="0 0 13 13"><circle cx="6.5" cy="6.5" r="5.5" fill="none" stroke="#eee" stroke-width="1.2"></circle></svg>
<svg class="a" style="left:1704px;top:233px;" width="13" height="13" viewBox="0 0 13 13"><circle cx="6.5" cy="6.5" r="5.5" fill="none" stroke="#eee" stroke-width="1.2"></circle></svg>
<div class="a" style="left:1600px;top:273px;width:22px;height:22px;background:#6755ff;border-radius:3px"></div>
<div class="t" style="left: 1625.3px; top: 277.5px; font-size: 13px; color: rgb(230, 230, 230); transform: scaleX(0.9087); transform-origin: 0px 0px;">Medium Slateblue</div>
<div class="a" style="left:1871.3px;top:273.5px;width:21.5px;height:21.3px;background:#2e2e2e;border-radius:4px;border:1px solid #262626"></div>
<svg class="a" style="left:1875px;top:277px;" width="14" height="14" viewBox="0 0 14 14"><path d="M1.5 12.5 L8 6" stroke="#bbb" stroke-width="1.6"></path><path d="M7 4 L10 7 M9 2.5 L11 0.5 L13.5 3 L11.5 5Z" stroke="#ddd" stroke-width="1.8" fill="#ddd"></path></svg>
<div class="a" style="left:1600.6px;top:300.4px;width:49px;height:17px;background:#484848;border-radius:3px;border:1px solid #383838"></div>
<div class="t" style="left: 1603.3px; top: 302.7px; font-size: 13px; color: rgb(224, 224, 224); transform: scaleX(0.8913); transform-origin: 0px 0px;">Hex</div>
<svg class="a" style="left:1636px;top:306px;" width="9" height="6" viewBox="0 0 9 6"><path d="M0.5 0.5 L4.5 5 L8.5 0.5" fill="none" stroke="#cfcfcf" stroke-width="1"></path></svg>
<div class="a" style="left:1653.2px;top:298.3px;width:239.6px;height:21.2px;background:#2b2b2b;border-radius:3px"></div>
<div class="t" style="left: 1658px; top: 303.54px; font-size: 12px; color: rgb(85, 85, 85); transform: scaleX(0.8571); transform-origin: 0px 0px;">#</div>
<div class="t" style="left: 1670.4px; top: 302.7px; font-size: 13px; color: rgb(224, 224, 224); transform: scaleX(0.9833); transform-origin: 0px 0px;">6755ff</div>
<div class="a" style="left:1600px;top:330px;width:234px;height:4.5px;background:#e8e8e8;border-radius:2px"></div>
<div class="a" style="left:1828px;top:326.5px;width:12px;height:12px;border-radius:50%;background:#5fb39a;border:1.5px solid #3f7f6c"></div>
<div class="a" style="left:1849px;top:324.5px;width:44px;height:15.3px;background:#2b2b2b;border-radius:3px"></div>
<div class="t" style="left: 1853px; top: 325.84px; font-size: 12px; color: rgb(85, 85, 85); transform: scaleX(0.875); transform-origin: 0px 0px;">A</div>
<div class="t" style="left: 1866.2px; top: 325px; font-size: 13px; color: rgb(224, 224, 224); transform: scaleX(0.9182); transform-origin: 0px 0px;">255</div>
<div class="a" style="left:1597px;top:346px;width:298px;height:22px;background:#2a2a2a;"></div>
<div class="a" style="left:1599.2px;top:348px;width:147.7px;height:20px;background:#484848;border-radius:4px 4px 0 0"></div>
<div class="t" style="left: 1648.2px; top: 350.2px; font-size: 13px; color: rgb(230, 230, 230); transform: scaleX(0.8893); transform-origin: 0px 0px;">Swatches</div>
<div class="t" style="left: 1793.5px; top: 350.2px; font-size: 13px; color: rgb(168, 168, 168); transform: scaleX(0.9237); transform-origin: 0px 0px;">Generator</div>
<div class="a" style="left:1597px;top:368px;width:298px;height:22px;background:#3d3d3d;"></div>
<div class="a" style="left:1598px;top:371px;width:257.3px;height:17.5px;background:#5a5a5a;border-radius:3px"></div>
<div class="a" style="left:1599.2px;top:372px;width:61.5px;height:15.7px;background:#1e1e1e;border-radius:3px"></div>
<svg class="a" style="left:1605.6px;top:377px;" width="11" height="10" viewBox="0 0 11 10"><path d="M1 0 V10 M4 0 V10 M6.5 0 L10 10" stroke="#3ecf6a" stroke-width="1.6"></path></svg>
<div class="t" style="left: 1621.5px; top: 373.3px; font-size: 13px; color: rgb(230, 230, 230); transform: scaleX(0.9125); transform-origin: 0px 0px;">Library</div>
<svg class="a" style="left:1671px;top:377px;" width="11" height="10" viewBox="0 0 11 10"><path d="M0.5 1.5 H4 L5 0.5 H10.5 V9.5 H0.5Z" fill="#cfcfcf"></path><path d="M2.5 4.5 H9 M2.5 7 H9" stroke="#5a5a5a" stroke-width="1"></path></svg>
<div class="t" style="left: 1686.5px; top: 373.3px; font-size: 13px; color: rgb(230, 230, 230); transform: scaleX(0.9325); transform-origin: 0px 0px;">Project</div>
<svg class="a" style="left:1738px;top:376px;" width="9" height="12" viewBox="0 0 9 12"><path d="M0.5 0.5 H5.5 L8.5 3.5 V11.5 H0.5Z M5.5 0.5 V3.5 H8.5" fill="none" stroke="#cfcfcf" stroke-width="1"></path></svg>
<div class="t" style="left: 1751.8px; top: 373.3px; font-size: 13px; color: rgb(230, 230, 230); transform: scaleX(0.8405); transform-origin: 0px 0px;">Scene</div>
<svg class="a" style="left:1801px;top:376px;" width="12" height="12" viewBox="0 0 12 12"><path d="M0.5 0.5 H11.5 V7 L7 11.5 H0.5Z M11.5 7 H7 V11.5" fill="none" stroke="#cfcfcf" stroke-width="1" transform="rotate(-8 6 6)"></path></svg>
<div class="t" style="left: 1815.9px; top: 373.3px; font-size: 13px; color: rgb(230, 230, 230); transform: scaleX(0.8842); transform-origin: 0px 0px;">Labels</div>
<div class="a" style="left:1858.5px;top:371.5px;width:17px;height:17px;background:#2a2a2a;border-radius:3px"></div>
<svg class="a" style="left:1862px;top:375px;" width="10" height="10" viewBox="0 0 10 10"><g fill="#3ecf6a"><rect x="0" y="0" width="4" height="4"></rect><rect x="6" y="0" width="4" height="4"></rect><rect x="0" y="6" width="4" height="4"></rect><rect x="6" y="6" width="4" height="4"></rect></g></svg>
<svg class="a" style="left:1880px;top:375px;" width="12" height="10" viewBox="0 0 12 10"><path d="M0 1 H12 M0 5 H12 M0 9 H12" stroke="#cfcfcf" stroke-width="1.2"></path></svg>
<div class="a" style="left:1598px;top:392.7px;width:275.6px;height:16.7px;background:#4a4a4a;border-radius:3px"></div>
<div class="t" style="left: 1601.2px; top: 394.2px; font-size: 13px; color: rgb(230, 230, 230); transform: scaleX(0.875); transform-origin: 0px 0px;">new</div>
<svg class="a" style="left:1860.5px;top:398px;" width="9" height="6" viewBox="0 0 9 6"><path d="M0.5 0.5 L4.5 5 L8.5 0.5" fill="none" stroke="#cfcfcf" stroke-width="1"></path></svg>
<div class="a" style="left:1881px;top:400px;width:2px;height:2px;background:#cfcfcf;"></div>
<div class="a" style="left:1886px;top:400px;width:2px;height:2px;background:#cfcfcf;"></div>
<div class="a" style="left:1891px;top:400px;width:2px;height:2px;background:#cfcfcf;"></div>
<div class="a" style="left:1598px;top:410.3px;width:297px;height:73.7px;background:#2a2a2a;"></div>
<div class="a" style="left:1600.3px;top:412px;width:17.6px;height:17.6px;background:#9a5cf6;border-radius:3px"></div>
<div class="a" style="left:1622.4px;top:412px;width:17.6px;height:17.6px;background:#4aa3ff;border-radius:3px"></div>
<div class="a" style="left:1644.5px;top:412px;width:17.6px;height:17.6px;background:#ff7a4e;border-radius:3px"></div>
<div class="a" style="left:1666.6px;top:412px;width:17.6px;height:17.6px;background:#4cf0a8;border-radius:3px"></div>
<div class="a" style="left:1688.7px;top:412px;width:17.6px;height:17.6px;background:#f24e5c;border-radius:3px"></div>
<div class="a" style="left:1710.8px;top:412px;width:17.6px;height:17.6px;background:#ff4ec2;border-radius:3px"></div>
<div class="a" style="left:1732.9px;top:412px;width:17.6px;height:17.6px;background:#ffd24e;border-radius:3px"></div>
<div class="a" style="left:1755.0px;top:412px;width:17.6px;height:17.6px;background:#4064d8;border-radius:3px"></div>
<div class="a" style="left:1777.1px;top:412px;width:17.6px;height:17.6px;background:#4ee0cc;border-radius:3px"></div>
<div class="a" style="left:1799.2px;top:412px;width:17.6px;height:17.6px;background:#d682d8;border-radius:3px"></div>
<div class="a" style="left:1821.3px;top:412px;width:17.6px;height:17.6px;background:#a8e884;border-radius:3px"></div>
<div class="a" style="left:1843.4px;top:412px;width:17.6px;height:17.6px;background:#6755ff;border-radius:3px"></div>
<div class="a" style="left:1593px;top:484px;width:321px;height:6px;background:#141414;"></div>
<div class="a" style="left:1593px;top:490px;width:327px;height:22px;background:#1f1f1f;"></div>
<div class="a" style="left:1593px;top:490.4px;width:38px;height:21.6px;background:#454545;border-radius:3px 3px 0 0"></div>
<div class="t" style="left: 1598.3px; top: 495px; font-size: 13px; color: rgb(224, 224, 224); transform: scaleX(0.9448); transform-origin: 0px 0px;">Align</div>
<div class="a" style="left:1593px;top:512px;width:320.6px;height:67.2px;background:#454545;"></div>
<div class="t" style="left: 1601.2px; top: 525px; font-size: 13px; color: rgb(224, 224, 224); transform: scaleX(0.9276); transform-origin: 0px 0px;">Alignment</div>
<div class="t" style="left: 1601.2px; top: 552.3px; font-size: 13px; color: rgb(224, 224, 224); transform: scaleX(0.9769); transform-origin: 0px 0px;">Distribution</div>
<div class="a" style="left:1790.3px;top:522.5px;width:53.400000000000006px;height:17.3px;background:#2c2c2c;border-radius:4px;border:1px solid #222"></div>
<svg class="a" style="left:1792.3px;top:524.5px;" width="14" height="13" viewBox="0 0 14 13"><path d="M2 1 V12 M4 3.5 H9 M4 9 H12" stroke="#e0e0e0" stroke-width="1.6" fill="none"></path></svg>
<svg class="a" style="left:1810.1px;top:524.5px;" width="14" height="13" viewBox="0 0 14 13"><path d="M7 1 V12 M3 4 H11 M1.5 9 H12.5" stroke="#e0e0e0" stroke-width="1.6" fill="none"></path></svg>
<div class="a" style="left:1808.1px;top:523.5px;width:1px;height:15.3px;background:#1e1e1e;"></div>
<svg class="a" style="left:1827.8999999999999px;top:524.5px;" width="14" height="13" viewBox="0 0 14 13"><path d="M12 1 V12 M5 3.5 H10 M2 9 H10" stroke="#e0e0e0" stroke-width="1.6" fill="none"></path></svg>
<div class="a" style="left:1825.8999999999999px;top:523.5px;width:1px;height:15.3px;background:#1e1e1e;"></div>
<div class="a" style="left:1852px;top:522.5px;width:53.400000000000006px;height:17.3px;background:#2c2c2c;border-radius:4px;border:1px solid #222"></div>
<svg class="a" style="left:1854.0px;top:524.5px;" width="14" height="13" viewBox="0 0 14 13"><path d="M1 2 H13 M4 4 V10 M9 4 V12" stroke="#e0e0e0" stroke-width="1.6" fill="none"></path></svg>
<svg class="a" style="left:1871.8px;top:524.5px;" width="14" height="13" viewBox="0 0 14 13"><path d="M1 6.5 H13 M4 2 V11 M9 3 V10" stroke="#e0e0e0" stroke-width="1.6" fill="none"></path></svg>
<div class="a" style="left:1869.8px;top:523.5px;width:1px;height:15.3px;background:#1e1e1e;"></div>
<svg class="a" style="left:1889.6px;top:524.5px;" width="14" height="13" viewBox="0 0 14 13"><path d="M1 12 H13 M4 3 V10 M9 6 V10" stroke="#e0e0e0" stroke-width="1.6" fill="none"></path></svg>
<div class="a" style="left:1887.6px;top:523.5px;width:1px;height:15.3px;background:#1e1e1e;"></div>
<div class="a" style="left:1790.3px;top:550.4px;width:53.400000000000006px;height:17.3px;background:#2c2c2c;border-radius:4px;border:1px solid #222"></div>
<svg class="a" style="left:1792.3px;top:552.4px;" width="14" height="13" viewBox="0 0 14 13"><path d="M2 1 V12 M12 1 V12 M7 3 V10" stroke="#e0e0e0" stroke-width="1.6" fill="none"></path></svg>
<svg class="a" style="left:1810.1px;top:552.4px;" width="14" height="13" viewBox="0 0 14 13"><path d="M2 2 H12 M2 11 H12 M4 6.5 H10" stroke="#e0e0e0" stroke-width="1.6" fill="none"></path></svg>
<div class="a" style="left:1808.1px;top:551.4px;width:1px;height:15.3px;background:#1e1e1e;"></div>
<svg class="a" style="left:1827.8999999999999px;top:552.4px;" width="14" height="13" viewBox="0 0 14 13"><path d="M2 12 L4 10 M6 8 L8 6 M10 4 L12 2" stroke="#e0e0e0" stroke-width="1.6"></path></svg>
<div class="a" style="left:1825.8999999999999px;top:551.4px;width:1px;height:15.3px;background:#1e1e1e;"></div>
<div class="a" style="left:1913.6px;top:85px;width:6.4px;height:495px;background:#1e1e1e;"></div>
<div class="a" style="left:494px;top:585px;width:1420px;height:23px;background:#1c1c1c;"></div>
<div class="a" style="left:494px;top:585.6px;width:89px;height:22.2px;background:#454545;border-radius:3px 3px 0 0"></div>
<div class="t" style="left: 499.75px; top: 590.9px; font-size: 13px; color: rgb(230, 230, 230); transform: scaleX(0.8937); transform-origin: 0px 0px;">Scene Window</div>
<div class="a" style="left:583.1px;top:585.6px;width:100.6px;height:22.2px;background:#2a2a2a;border-radius:3px 3px 0 0"></div>
<div class="t" style="left: 589.4px; top: 590.9px; font-size: 13px; color: rgb(224, 224, 224); transform: scaleX(0.9051); transform-origin: 0px 0px;">JavaScript Editor</div>
<div class="a" style="left:683.7px;top:585.6px;width:113px;height:22.2px;background:#2a2a2a;border-radius:3px 3px 0 0"></div>
<div class="t" style="left: 690.6px; top: 590.9px; font-size: 13px; color: rgb(224, 224, 224); transform: scaleX(0.8982); transform-origin: 0px 0px;">Dependency Graph</div>
<div class="a" style="left:494px;top:607.8px;width:1420px;height:23px;background:#262626;"></div>
<div class="t" style="left: 626.9px; top: 612.75px; font-size: 13px; color: rgb(184, 184, 184); transform: scaleX(0.9108); transform-origin: 0px 0px;">Composition 1</div>
<svg class="a" style="left:834.6px;top:616px;" width="9" height="9" viewBox="0 0 9 9"><path d="M0.5 0.5 L8.5 8.5 M8.5 0.5 L0.5 8.5" stroke="#999" stroke-width="1"></path></svg>
<div class="a" style="left:852px;top:614px;width:1px;height:12px;background:#999;"></div>
<div class="t" style="left: 979.5px; top: 612.75px; font-size: 13px; color: rgb(184, 184, 184); transform: scaleX(0.9096); transform-origin: 0px 0px;">Composition 2</div>
<svg class="a" style="left:1186px;top:616px;" width="9" height="9" viewBox="0 0 9 9"><path d="M0.5 0.5 L8.5 8.5 M8.5 0.5 L0.5 8.5" stroke="#999" stroke-width="1"></path></svg>
<div class="a" style="left:1204px;top:614px;width:1px;height:12px;background:#999;"></div>
<div class="t" style="left: 1331.75px; top: 612.75px; font-size: 13px; color: rgb(184, 184, 184); transform: scaleX(0.9127); transform-origin: 0px 0px;">Composition 3</div>
<svg class="a" style="left:1540px;top:616px;" width="9" height="9" viewBox="0 0 9 9"><path d="M0.5 0.5 L8.5 8.5 M8.5 0.5 L0.5 8.5" stroke="#999" stroke-width="1"></path></svg>
<div class="a" style="left:1557px;top:610px;width:351.75px;height:20.6px;background:#454545;border-radius:4px 4px 0 0"></div>
<div class="t" style="left: 1684.5px; top: 612.75px; font-size: 13px; color: rgb(230, 230, 230); transform: scaleX(0.9157); transform-origin: 0px 0px;">Composition 4</div>
<svg class="a" style="left:1892px;top:616px;" width="9" height="9" viewBox="0 0 9 9"><path d="M0.5 0.5 L8.5 8.5 M8.5 0.5 L0.5 8.5" stroke="#aaa" stroke-width="1"></path></svg>
<div class="a" style="left:494px;top:630.6px;width:465px;height:41.4px;background:#454545;"></div>
<div class="a" style="left:496.3px;top:632.5px;width:254px;height:19.4px;background:#2a2a2a;border-radius:10px"></div>
<svg class="a" style="left:500px;top:636px;" width="12" height="12" viewBox="0 0 12 12"><circle cx="5" cy="5" r="4" fill="none" stroke="#cfcfcf" stroke-width="1.3"></circle><path d="M8 8 L11 11" stroke="#cfcfcf" stroke-width="1.8"></path></svg>
<div class="t" style="left: 520.6px; top: 635.9px; font-size: 13px; color: rgb(138, 138, 138); transform: scaleX(0.8755); transform-origin: 0px 0px;">Enter a layer name</div>
<div class="a" style="left:753.4px;top:633.2px;width:18.6px;height:17.8px;background:#2e2e2e;border-radius:3px;border:1px solid #222"></div>
<svg class="a" style="left:757px;top:636px;" width="11" height="11" viewBox="0 0 11 11"><path d="M5.5 0 V11 M0 5.5 H11" stroke="#e8e8e8" stroke-width="1.8"></path></svg>
<div class="a" style="left:768px;top:647px;width:3px;height:3px;background:#5cc8a0;clip-path:polygon(100% 0,100% 100%,0 100%)"></div>
<div class="a" style="left:797.6px;top:633.2px;width:18.4px;height:17.8px;background:#2e2e2e;border-radius:3px;border:1px solid #222"></div>
<div class="a" style="left:820.3px;top:633.2px;width:18.4px;height:17.8px;background:#2e2e2e;border-radius:3px;border:1px solid #222"></div>
<div class="a" style="left:842.5px;top:633.2px;width:18.4px;height:17.8px;background:#2e2e2e;border-radius:3px;border:1px solid #222"></div>
<svg class="a" style="left:800px;top:636px;" width="13" height="12" viewBox="0 0 13 12"><circle cx="8" cy="4.5" r="4.2" fill="#ddd"></circle><path d="M2 9 Q4 5 7 8 M1 11 Q4 8 7 11" stroke="#999" stroke-width="1.2" fill="none"></path></svg>
<svg class="a" style="left:823px;top:636px;" width="13" height="12" viewBox="0 0 13 12"><g fill="#ddd"><circle cx="1.5" cy="1.5" r="1.1"></circle><circle cx="8" cy="1.5" r="1.1"></circle><circle cx="1.5" cy="7" r="1.1"></circle><path d="M7 4 L8 7 L11 8 L8 9 L7 12 L6 9 L3 8 L6 7Z"></path></g></svg>
<svg class="a" style="left:845px;top:636px;" width="13" height="12" viewBox="0 0 13 12"><path d="M0 2 H13 M0 6 H13 M0 10 H13" stroke="#bbb" stroke-width="1"></path><circle cx="4" cy="2" r="1.5" fill="#333" stroke="#ddd"></circle><circle cx="9" cy="6" r="1.5" fill="#333" stroke="#ddd"></circle><circle cx="5" cy="10" r="1.5" fill="#333" stroke="#ddd"></circle></svg>
<div class="a" style="left:863.2px;top:632px;width:94px;height:19.5px;background:#2b2b2b;border-radius:3px"></div>
<div class="t" style="left: 868.5px; top: 636.34px; font-size: 12px; color: rgb(85, 85, 85); transform: scaleX(0.9286); transform-origin: 0px 0px;">F</div>
<div class="t" style="left: 880px; top: 635.5px; font-size: 13px; color: rgb(224, 224, 224); transform: scaleX(0.9857); transform-origin: 0px 0px;">77</div>
<div class="a" style="left:494px;top:652px;width:465px;height:20px;background:#484848;"></div>
<svg class="a" style="left:500px;top:655px;" width="11" height="13" viewBox="0 0 11 13"><path d="M2.5 6 V4 A3 3 0 0 1 8.5 4 V6" fill="none" stroke="#cfcfcf" stroke-width="1.5"></path><rect x="0.5" y="6" width="10" height="7" fill="#cfcfcf"></rect><rect x="4.5" y="8.5" width="2" height="2" fill="#555"></rect></svg>
<svg class="a" style="left:517px;top:657px;" width="14" height="9" viewBox="0 0 14 9"><path d="M0.5 4.5 Q7 -2.5 13.5 4.5 Q7 11.5 0.5 4.5Z" fill="none" stroke="#cfcfcf" stroke-width="1.1"></path><circle cx="7" cy="4.5" r="2" fill="#cfcfcf"></circle></svg>
<svg class="a" style="left:537px;top:655px;" width="12" height="13" viewBox="0 0 12 13"><path d="M6 0.5 L11.5 3.5 V9.5 L6 12.5 L0.5 9.5 V3.5Z M0.5 3.5 L6 6.5 L11.5 3.5 M6 6.5 V12.5" fill="none" stroke="#cfcfcf" stroke-width="1.1"></path></svg>
<svg class="a" style="left:555.6px;top:655px;" width="14" height="13" viewBox="0 0 14 13"><path d="M0.5 4 H3 L6.5 0.5 V12.5 L3 9 H0.5Z" fill="#cfcfcf"></path><path d="M8.5 3.5 Q10 6.5 8.5 9.5 M10.8 1.5 Q13.5 6.5 10.8 11.5" fill="none" stroke="#cfcfcf" stroke-width="1.1"></path></svg>
<svg class="a" style="left:575px;top:655px;" width="12" height="13" viewBox="0 0 12 13"><path d="M1 12 L7.5 5" stroke="#aaa" stroke-width="1.5"></path><path d="M6.5 3.5 L9.5 6.5 M8.5 2 L10.5 0.3 L12 1.8 L10.3 4Z" stroke="#ddd" stroke-width="1.6" fill="#ddd"></path></svg>
<svg class="a" style="left:593px;top:657px;" width="14" height="9" viewBox="0 0 14 9"><path d="M0.5 4.5 L3.5 0.5 H13.5 V8.5 H3.5Z" fill="#cfcfcf"></path><circle cx="4.5" cy="4.5" r="1.3" fill="#484848"></circle></svg>
<div class="t" style="left: 649.4px; top: 656.5px; font-size: 13px; color: rgb(230, 230, 230); transform: scaleX(0.8743); transform-origin: 0px 0px;">Name</div>
<div class="a" style="left:494px;top:672px;width:451px;height:109px;background:#383838;"></div>
<div class="a" style="left:945px;top:672px;width:14px;height:288px;background:#2c2c2c;"></div>
<div class="a" style="left:947px;top:673.2px;width:10.1px;height:287px;background:#4a4a4a;border-radius:5px"></div>
<div class="a" style="left:494px;top:781px;width:451px;height:183px;background:#2a2a2a;"></div>
<div class="a" style="left:498.2px;top:717.4px;width:445px;height:19.6px;background:#4c5040;border-radius:3px"></div>
<div class="a" style="left:496.3px;top:674px;width:17.4px;height:17.2px;background:#262626;border-radius:3px"></div>
<div class="a" style="left:515.2px;top:674px;width:17.7px;height:17.2px;background:#262626;border-radius:3px"></div>
<svg class="a" style="left:517.5px;top:676.5px;" width="13" height="13" viewBox="0 0 13 13"><path d="M11 5 A5.3 5.3 0 1 1 8.6 2" fill="none" stroke="#d0d0d0" stroke-width="1.3"></path><path d="M3.5 6.3 L6 8.8 L12 2.6" fill="none" stroke="#d0d0d0" stroke-width="1.5"></path></svg>
<div class="a" style="left:573px;top:674.9px;width:16px;height:16px;background:#6ddf9a;border-radius:3px;box-shadow:0 0 0 1px #1e1e1e"></div>
<svg class="a" style="left:593px;top:679px;" width="14" height="8.5" viewBox="0 0 14 8.5"><path d="M0.5 4.25 L3.5 0.5 H13.5 V8 H3.5Z" fill="#cfcfcf"></path><circle cx="4.5" cy="4.25" r="1.3" fill="#383838"></circle></svg>
<div class="a" style="left:610.5px;top:674px;width:31.5px;height:17.2px;background:#313131;border-radius:3px"></div>
<svg class="a" style="left:614px;top:681px;" width="8" height="6" viewBox="0 0 8 6"><path d="M0.5 0.5 L4.0 5 L7.5 0.5" fill="none" stroke="#8a8a8a" stroke-width="1"></path></svg>
<svg class="a" style="left:648.75px;top:676px;" width="15" height="14" viewBox="0 0 15 14"><rect x="0" y="5.5" width="9" height="7.5" fill="#a8d8ff"></rect><path d="M6 0.6 H14.4 M6 3.8 H14.4 M6 6.9 H14.4" stroke="#383838" stroke-width="2.2"></path><path d="M6 0.6 H14.4 M6 3.8 H14.4 M6 6.9 H14.4" stroke="#e0e0e0" stroke-width="1.1"></path></svg>
<div class="t" style="left: 667.4px; top: 676.6px; font-size: 13px; color: rgb(230, 230, 230); transform: scaleX(0.9308); transform-origin: 0px 0px;">Color Array</div>
<div class="a" style="left:905px;top:674.8px;width:21px;height:16px;background:#262626;border-radius:3px"></div>
<div class="a" style="left:915.5px;top:676px;width:1px;height:14px;background:#333;"></div>
<svg class="a" style="left:908.0px;top:679.0px;" width="6" height="8" viewBox="0 0 6 8"><path d="M0 4 L2.6 0.3 H6 V7.7 H2.6Z" fill="#d4b96a"></path></svg>
<svg class="a" style="left:918.5px;top:679.0px;" width="6" height="8" viewBox="0 0 6 8"><path d="M6 4 L3.4 0.3 H0 V7.7 H3.4Z" fill="#c04fe0"></path></svg>
<svg class="a" style="left:931px;top:678px;" width="10" height="10" viewBox="0 0 10 10"><circle cx="5" cy="5" r="4.4" fill="none" stroke="#7a7a7a" stroke-width="1.1"></circle></svg>
<div class="a" style="left:496.3px;top:696px;width:17.4px;height:17.2px;background:#262626;border-radius:3px"></div>
<div class="a" style="left:515.2px;top:696px;width:17.7px;height:17.2px;background:#262626;border-radius:3px"></div>
<svg class="a" style="left:517.5px;top:698.5px;" width="13" height="13" viewBox="0 0 13 13"><path d="M11 5 A5.3 5.3 0 1 1 8.6 2" fill="none" stroke="#d0d0d0" stroke-width="1.3"></path><path d="M3.5 6.3 L6 8.8 L12 2.6" fill="none" stroke="#d0d0d0" stroke-width="1.5"></path></svg>
<div class="a" style="left:573px;top:696.9px;width:16px;height:16px;background:#c8f07a;border-radius:3px;box-shadow:0 0 0 1px #1e1e1e"></div>
<svg class="a" style="left:593px;top:701px;" width="14" height="8.5" viewBox="0 0 14 8.5"><path d="M0.5 4.25 L3.5 0.5 H13.5 V8 H3.5Z" fill="#cfcfcf"></path><circle cx="4.5" cy="4.25" r="1.3" fill="#383838"></circle></svg>
<svg class="a" style="left:667.3px;top:698px;" width="15" height="14" viewBox="0 0 15 14"><g stroke="#7cd080" stroke-width="1.1"><path d="M0.5 0.5 L3 3 M3 0.5 L0.5 3 M11 0.5 L13.5 3 M13.5 0.5 L11 3 M2 10.5 L4.5 13 M4.5 10.5 L2 13 M9.5 10.5 L12 13 M12 10.5 L9.5 13 M6 6 L8 8 M8 6 L6 8"></path></g></svg>
<div class="t" style="left: 686px; top: 698.6px; font-size: 13px; color: rgb(230, 230, 230); transform: scaleX(0.8935); transform-origin: 0px 0px;">Random [Index]</div>
<div class="a" style="left:905px;top:696.8px;width:21px;height:16px;background:#262626;border-radius:3px"></div>
<div class="a" style="left:915.5px;top:698px;width:1px;height:14px;background:#333;"></div>
<svg class="a" style="left:908.0px;top:701.0px;" width="6" height="8" viewBox="0 0 6 8"><path d="M0 4 L2.6 0.3 H6 V7.7 H2.6Z" fill="#6a6a6a"></path></svg>
<svg class="a" style="left:918.5px;top:701.0px;" width="6" height="8" viewBox="0 0 6 8"><path d="M6 4 L3.4 0.3 H0 V7.7 H3.4Z" fill="#c04fe0"></path></svg>
<svg class="a" style="left:931px;top:700px;" width="10" height="10" viewBox="0 0 10 10"><circle cx="5" cy="5" r="4.4" fill="none" stroke="#7a7a7a" stroke-width="1.1"></circle></svg>
<div class="a" style="left:496.3px;top:718px;width:17.4px;height:17.2px;background:#262626;border-radius:3px"></div>
<div class="a" style="left:515.2px;top:718px;width:17.7px;height:17.2px;background:#262626;border-radius:3px"></div>
<svg class="a" style="left:517.5px;top:720.5px;" width="13" height="13" viewBox="0 0 13 13"><path d="M11 5 A5.3 5.3 0 1 1 8.6 2" fill="none" stroke="#d0d0d0" stroke-width="1.3"></path><path d="M3.5 6.3 L6 8.8 L12 2.6" fill="none" stroke="#d0d0d0" stroke-width="1.5"></path></svg>
<div class="a" style="left:573px;top:718.9px;width:16px;height:16px;background:#c8f07a;border-radius:3px;box-shadow:0 0 0 1px #1e1e1e"></div>
<svg class="a" style="left:593px;top:723px;" width="14" height="8.5" viewBox="0 0 14 8.5"><path d="M0.5 4.25 L3.5 0.5 H13.5 V8 H3.5Z" fill="#cfcfcf"></path><circle cx="4.5" cy="4.25" r="1.3" fill="#383838"></circle></svg>
<svg class="a" style="left:646.5px;top:722px;" width="17" height="10" viewBox="0 0 17 10"><path d="M0.5 5 C1.5 -1 3.5 -1 5 4.5 S8 11 9.5 5 S12.5 -1 14 4.5 S16 9 16.5 6" fill="none" stroke="#6fc27a" stroke-width="1.3"></path></svg>
<div class="t" style="left: 667.4px; top: 720.6px; font-size: 13px; color: rgb(230, 230, 230); transform: scaleX(0.9096); transform-origin: 0px 0px;">Oscillator [Position.Z] Cosine</div>
<div class="a" style="left:905px;top:718.8px;width:21px;height:16px;background:#262626;border-radius:3px"></div>
<div class="a" style="left:915.5px;top:720px;width:1px;height:14px;background:#333;"></div>
<svg class="a" style="left:908.0px;top:723.0px;" width="6" height="8" viewBox="0 0 6 8"><path d="M0 4 L2.6 0.3 H6 V7.7 H2.6Z" fill="#d4b96a"></path></svg>
<svg class="a" style="left:918.5px;top:723.0px;" width="6" height="8" viewBox="0 0 6 8"><path d="M6 4 L3.4 0.3 H0 V7.7 H3.4Z" fill="#c04fe0"></path></svg>
<svg class="a" style="left:931px;top:722px;" width="10" height="10" viewBox="0 0 10 10"><circle cx="5" cy="5" r="4.4" fill="none" stroke="#7a7a7a" stroke-width="1.1"></circle></svg>
<div class="a" style="left:496.3px;top:740px;width:17.4px;height:17.2px;background:#262626;border-radius:3px"></div>
<div class="a" style="left:515.2px;top:740px;width:17.7px;height:17.2px;background:#262626;border-radius:3px"></div>
<svg class="a" style="left:517.5px;top:742.5px;" width="13" height="13" viewBox="0 0 13 13"><path d="M11 5 A5.3 5.3 0 1 1 8.6 2" fill="none" stroke="#d0d0d0" stroke-width="1.3"></path><path d="M3.5 6.3 L6 8.8 L12 2.6" fill="none" stroke="#d0d0d0" stroke-width="1.5"></path></svg>
<div class="a" style="left:573px;top:740.9px;width:16px;height:16px;background:#c8f07a;border-radius:3px;box-shadow:0 0 0 1px #1e1e1e"></div>
<svg class="a" style="left:593px;top:745px;" width="14" height="8.5" viewBox="0 0 14 8.5"><path d="M0.5 4.25 L3.5 0.5 H13.5 V8 H3.5Z" fill="#cfcfcf"></path><circle cx="4.5" cy="4.25" r="1.3" fill="#383838"></circle></svg>
<svg class="a" style="left:646.5px;top:744px;" width="17" height="10" viewBox="0 0 17 10"><path d="M0.5 5 C1.5 -1 3.5 -1 5 4.5 S8 11 9.5 5 S12.5 -1 14 4.5 S16 9 16.5 6" fill="none" stroke="#6fc27a" stroke-width="1.3"></path></svg>
<div class="t" style="left: 667.4px; top: 742.6px; font-size: 13px; color: rgb(230, 230, 230); transform: scaleX(0.9059); transform-origin: 0px 0px;">Oscillator [Position.X] Sine</div>
<div class="a" style="left:905px;top:740.8px;width:21px;height:16px;background:#262626;border-radius:3px"></div>
<div class="a" style="left:915.5px;top:742px;width:1px;height:14px;background:#333;"></div>
<svg class="a" style="left:908.0px;top:745.0px;" width="6" height="8" viewBox="0 0 6 8"><path d="M0 4 L2.6 0.3 H6 V7.7 H2.6Z" fill="#d4b96a"></path></svg>
<svg class="a" style="left:918.5px;top:745.0px;" width="6" height="8" viewBox="0 0 6 8"><path d="M6 4 L3.4 0.3 H0 V7.7 H3.4Z" fill="#c04fe0"></path></svg>
<div class="a" style="left:905px;top:740.8px;width:11px;height:16px;border:1px solid #c8a850;border-radius:3px 0 0 3px"></div>
<svg class="a" style="left:931px;top:744px;" width="10" height="10" viewBox="0 0 10 10"><circle cx="5" cy="5" r="4.4" fill="none" stroke="#7a7a7a" stroke-width="1.1"></circle></svg>
<div class="a" style="left:496.3px;top:762px;width:17.4px;height:17.2px;background:#262626;border-radius:3px"></div>
<div class="a" style="left:515.2px;top:762px;width:17.7px;height:17.2px;background:#262626;border-radius:3px"></div>
<div class="a" style="left:534.2px;top:762px;width:17.6px;height:17.2px;background:#262626;border-radius:3px"></div>
<svg class="a" style="left:517px;top:766.5px;" width="14" height="9" viewBox="0 0 14 9"><path d="M0.5 4.5 Q7 -2.5 13.5 4.5 Q7 11.5 0.5 4.5Z" fill="none" stroke="#cfcfcf" stroke-width="1.1"></path><circle cx="7" cy="4.5" r="2" fill="#cfcfcf"></circle></svg>
<div class="a" style="left:573px;top:762.9px;width:16px;height:16px;background:#ffe27a;border-radius:3px;box-shadow:0 0 0 1px #1e1e1e"></div>
<svg class="a" style="left:593px;top:767px;" width="14" height="8.5" viewBox="0 0 14 8.5"><path d="M0.5 4.25 L3.5 0.5 H13.5 V8 H3.5Z" fill="#cfcfcf"></path><circle cx="4.5" cy="4.25" r="1.3" fill="#383838"></circle></svg>
<svg class="a" style="left:648.75px;top:765px;" width="12.5" height="12" viewBox="0 0 12.5 12"><rect x="0.75" y="0.75" width="11" height="10.5" fill="none" stroke="#d6c87a" stroke-width="1.3" stroke-dasharray="3 2"></rect><g fill="#eee"><rect x="0" y="0" width="2" height="2"></rect><rect x="10.5" y="0" width="2" height="2"></rect><rect x="0" y="10" width="2" height="2"></rect><rect x="10.5" y="10" width="2" height="2"></rect></g></svg>
<div class="t" style="left: 667.4px; top: 764.6px; font-size: 13px; color: rgb(230, 230, 230); transform: scaleX(0.845); transform-origin: 0px 0px;">Ellipse Shape</div>
<div class="a" style="left:905px;top:762.8px;width:21px;height:16px;background:#262626;border-radius:3px"></div>
<div class="a" style="left:915.5px;top:764px;width:1px;height:14px;background:#333;"></div>
<svg class="a" style="left:908.0px;top:767.0px;" width="6" height="8" viewBox="0 0 6 8"><path d="M0 4 L2.6 0.3 H6 V7.7 H2.6Z" fill="#d4b96a"></path></svg>
<svg class="a" style="left:918.5px;top:767.0px;" width="6" height="8" viewBox="0 0 6 8"><path d="M6 4 L3.4 0.3 H0 V7.7 H3.4Z" fill="#7a7a7a"></path></svg>
<svg class="a" style="left:931px;top:766px;" width="10" height="10" viewBox="0 0 10 10"><circle cx="5" cy="5" r="4.4" fill="none" stroke="#7a7a7a" stroke-width="1.1"></circle></svg>
<div class="a" style="left:495.6px;top:964.4px;width:448px;height:9.3px;background:#4a4a4a;border-radius:5px"></div>
<div class="a" style="left:494px;top:976.4px;width:465px;height:21px;background:#454545;"></div>
<div class="a" style="left:497.5px;top:978px;width:18.7px;height:18px;background:#2e2e2e;border-radius:3px;border:1px solid #222"></div>
<svg class="a" style="left:500px;top:983px;" width="14" height="9" viewBox="0 0 14 9"><path d="M0.5 4.5 L3.5 0.5 H13.5 V8.5 H3.5Z" fill="#cfcfcf"></path><circle cx="4.5" cy="4.5" r="1.3" fill="#2e2e2e"></circle></svg>
<div class="t" style="left: 520.75px; top: 981.1px; font-size: 13px; color: rgb(224, 224, 224); transform: scaleX(0.8771); transform-origin: 0px 0px;">1 selected</div>
<div class="a" style="left:750.6px;top:978px;width:18.7px;height:18px;background:#2e2e2e;border-radius:3px;border:1px solid #222"></div>
<svg class="a" style="left:754px;top:981px;" width="12" height="12" viewBox="0 0 12 12"><rect x="0.5" y="0.5" width="11" height="11" fill="none" stroke="#cfcfcf"></rect><rect x="4" y="4" width="4" height="4" fill="#cfcfcf"></rect></svg>
<div class="a" style="left:773px;top:978px;width:183px;height:18.5px;background:#4a4a4a;border-radius:3px;border:1px solid #333"></div>
<div class="a" style="left:774px;top:979px;width:87.2px;height:16.5px;background:#2a2a2a;border-radius:3px"></div>
<svg class="a" style="left:780.6px;top:981px;" width="11.5" height="11" viewBox="0 0 11.5 11"><path d="M0 1 H11.5 M2.5 5.5 H9.5 M0 10 H11.5" stroke="#3ecf6a" stroke-width="1.8"></path></svg>
<div class="t" style="left: 796.3px; top: 981.1px; font-size: 13px; color: rgb(230, 230, 230); transform: scaleX(0.9152); transform-origin: 0px 0px;">Time Editor</div>
<svg class="a" style="left:868px;top:980px;" width="12" height="12" viewBox="0 0 12 12"><path d="M1.5 0 V12 M0 11 H12 M2 10.5 L11 3" stroke="#d0d0d0" stroke-width="1"></path></svg>
<div class="t" style="left: 884.8px; top: 981.1px; font-size: 13px; color: rgb(230, 230, 230); transform: scaleX(0.9122); transform-origin: 0px 0px;">Graph Editor</div>
<div class="a" style="left:959px;top:630.6px;width:4px;height:370px;background:#1f1f1f;"></div>
<div class="a" style="left:960.5px;top:811px;width:1.5px;height:2px;background:#777;"></div>
<div class="a" style="left:960.5px;top:815px;width:1.5px;height:2px;background:#777;"></div>
<div class="a" style="left:960.5px;top:819px;width:1.5px;height:2px;background:#777;"></div>
<div class="a" style="left:963px;top:630.6px;width:951px;height:330px;background:#2a2a2a;"></div>
<div class="a" style="left:966px;top:630.9px;width:946px;height:22.9px;background:#1e1e1e;"></div>
<div class="a" style="left:963px;top:653.8px;width:24px;height:306px;background:#1c1c1c;"></div>
<div class="a" style="left:1892px;top:653.8px;width:22px;height:306px;background:#222;"></div>
<div class="a" style="left:986.5px;top:646px;width:1.2px;height:7.8px;background:#8a8a8a;"></div>
<div class="a" style="left:997.4px;top:650px;width:1.2px;height:3.8px;background:#777;"></div>
<div class="a" style="left:1008.2px;top:650px;width:1.2px;height:3.8px;background:#777;"></div>
<div class="a" style="left:1019.1px;top:650px;width:1.2px;height:3.8px;background:#777;"></div>
<div class="a" style="left:1030.0px;top:650px;width:1.2px;height:3.8px;background:#777;"></div>
<div class="a" style="left:1040.8px;top:646px;width:1.2px;height:7.8px;background:#8a8a8a;"></div>
<div class="a" style="left:1051.7px;top:650px;width:1.2px;height:3.8px;background:#777;"></div>
<div class="a" style="left:1062.6px;top:650px;width:1.2px;height:3.8px;background:#777;"></div>
<div class="a" style="left:1073.4px;top:650px;width:1.2px;height:3.8px;background:#777;"></div>
<div class="a" style="left:1084.3px;top:650px;width:1.2px;height:3.8px;background:#777;"></div>
<div class="a" style="left:1095.2px;top:646px;width:1.2px;height:7.8px;background:#8a8a8a;"></div>
<div class="a" style="left:1106.0px;top:650px;width:1.2px;height:3.8px;background:#777;"></div>
<div class="a" style="left:1116.9px;top:650px;width:1.2px;height:3.8px;background:#777;"></div>
<div class="a" style="left:1127.8px;top:650px;width:1.2px;height:3.8px;background:#777;"></div>
<div class="a" style="left:1138.6px;top:650px;width:1.2px;height:3.8px;background:#777;"></div>
<div class="a" style="left:1149.5px;top:646px;width:1.2px;height:7.8px;background:#8a8a8a;"></div>
<div class="a" style="left:1160.4px;top:650px;width:1.2px;height:3.8px;background:#777;"></div>
<div class="a" style="left:1171.2px;top:650px;width:1.2px;height:3.8px;background:#777;"></div>
<div class="a" style="left:1182.1px;top:650px;width:1.2px;height:3.8px;background:#777;"></div>
<div class="a" style="left:1193.0px;top:650px;width:1.2px;height:3.8px;background:#777;"></div>
<div class="a" style="left:1203.8px;top:646px;width:1.2px;height:7.8px;background:#8a8a8a;"></div>
<div class="a" style="left:1214.7px;top:650px;width:1.2px;height:3.8px;background:#777;"></div>
<div class="a" style="left:1225.6px;top:650px;width:1.2px;height:3.8px;background:#777;"></div>
<div class="a" style="left:1236.4px;top:650px;width:1.2px;height:3.8px;background:#777;"></div>
<div class="a" style="left:1247.3px;top:650px;width:1.2px;height:3.8px;background:#777;"></div>
<div class="a" style="left:1258.2px;top:646px;width:1.2px;height:7.8px;background:#8a8a8a;"></div>
<div class="a" style="left:1269.0px;top:650px;width:1.2px;height:3.8px;background:#777;"></div>
<div class="a" style="left:1279.9px;top:650px;width:1.2px;height:3.8px;background:#777;"></div>
<div class="a" style="left:1290.7px;top:650px;width:1.2px;height:3.8px;background:#777;"></div>
<div class="a" style="left:1301.6px;top:650px;width:1.2px;height:3.8px;background:#777;"></div>
<div class="a" style="left:1312.5px;top:646px;width:1.2px;height:7.8px;background:#8a8a8a;"></div>
<div class="a" style="left:1323.3px;top:650px;width:1.2px;height:3.8px;background:#777;"></div>
<div class="a" style="left:1334.2px;top:650px;width:1.2px;height:3.8px;background:#777;"></div>
<div class="a" style="left:1345.1px;top:650px;width:1.2px;height:3.8px;background:#777;"></div>
<div class="a" style="left:1355.9px;top:650px;width:1.2px;height:3.8px;background:#777;"></div>
<div class="a" style="left:1366.8px;top:646px;width:1.2px;height:7.8px;background:#8a8a8a;"></div>
<div class="a" style="left:1377.7px;top:650px;width:1.2px;height:3.8px;background:#777;"></div>
<div class="a" style="left:1388.5px;top:650px;width:1.2px;height:3.8px;background:#777;"></div>
<div class="a" style="left:1399.4px;top:650px;width:1.2px;height:3.8px;background:#777;"></div>
<div class="a" style="left:1410.3px;top:650px;width:1.2px;height:3.8px;background:#777;"></div>
<div class="a" style="left:1421.1px;top:646px;width:1.2px;height:7.8px;background:#8a8a8a;"></div>
<div class="a" style="left:1432.0px;top:650px;width:1.2px;height:3.8px;background:#777;"></div>
<div class="a" style="left:1442.9px;top:650px;width:1.2px;height:3.8px;background:#777;"></div>
<div class="a" style="left:1453.7px;top:650px;width:1.2px;height:3.8px;background:#777;"></div>
<div class="a" style="left:1464.6px;top:650px;width:1.2px;height:3.8px;background:#777;"></div>
<div class="a" style="left:1475.5px;top:646px;width:1.2px;height:7.8px;background:#8a8a8a;"></div>
<div class="a" style="left:1486.3px;top:650px;width:1.2px;height:3.8px;background:#777;"></div>
<div class="a" style="left:1497.2px;top:650px;width:1.2px;height:3.8px;background:#777;"></div>
<div class="a" style="left:1508.1px;top:650px;width:1.2px;height:3.8px;background:#777;"></div>
<div class="a" style="left:1518.9px;top:650px;width:1.2px;height:3.8px;background:#777;"></div>
<div class="a" style="left:1529.8px;top:646px;width:1.2px;height:7.8px;background:#8a8a8a;"></div>
<div class="a" style="left:1540.7px;top:650px;width:1.2px;height:3.8px;background:#777;"></div>
<div class="a" style="left:1551.5px;top:650px;width:1.2px;height:3.8px;background:#777;"></div>
<div class="a" style="left:1562.4px;top:650px;width:1.2px;height:3.8px;background:#777;"></div>
<div class="a" style="left:1573.3px;top:650px;width:1.2px;height:3.8px;background:#777;"></div>
<div class="a" style="left:1584.1px;top:646px;width:1.2px;height:7.8px;background:#8a8a8a;"></div>
<div class="a" style="left:1595.0px;top:650px;width:1.2px;height:3.8px;background:#777;"></div>
<div class="a" style="left:1605.9px;top:650px;width:1.2px;height:3.8px;background:#777;"></div>
<div class="a" style="left:1616.7px;top:650px;width:1.2px;height:3.8px;background:#777;"></div>
<div class="a" style="left:1627.6px;top:650px;width:1.2px;height:3.8px;background:#777;"></div>
<div class="a" style="left:1638.5px;top:646px;width:1.2px;height:7.8px;background:#8a8a8a;"></div>
<div class="a" style="left:1649.3px;top:650px;width:1.2px;height:3.8px;background:#777;"></div>
<div class="a" style="left:1660.2px;top:650px;width:1.2px;height:3.8px;background:#777;"></div>
<div class="a" style="left:1671.1px;top:650px;width:1.2px;height:3.8px;background:#777;"></div>
<div class="a" style="left:1681.9px;top:650px;width:1.2px;height:3.8px;background:#777;"></div>
<div class="a" style="left:1692.8px;top:646px;width:1.2px;height:7.8px;background:#8a8a8a;"></div>
<div class="a" style="left:1703.7px;top:650px;width:1.2px;height:3.8px;background:#777;"></div>
<div class="a" style="left:1714.5px;top:650px;width:1.2px;height:3.8px;background:#777;"></div>
<div class="a" style="left:1725.4px;top:650px;width:1.2px;height:3.8px;background:#777;"></div>
<div class="a" style="left:1736.3px;top:650px;width:1.2px;height:3.8px;background:#777;"></div>
<div class="a" style="left:1747.1px;top:646px;width:1.2px;height:7.8px;background:#8a8a8a;"></div>
<div class="a" style="left:1758.0px;top:650px;width:1.2px;height:3.8px;background:#777;"></div>
<div class="a" style="left:1768.9px;top:650px;width:1.2px;height:3.8px;background:#777;"></div>
<div class="a" style="left:1779.7px;top:650px;width:1.2px;height:3.8px;background:#777;"></div>
<div class="a" style="left:1790.6px;top:650px;width:1.2px;height:3.8px;background:#777;"></div>
<div class="a" style="left:1801.4px;top:646px;width:1.2px;height:7.8px;background:#8a8a8a;"></div>
<div class="a" style="left:1812.3px;top:650px;width:1.2px;height:3.8px;background:#777;"></div>
<div class="a" style="left:1823.2px;top:650px;width:1.2px;height:3.8px;background:#777;"></div>
<div class="a" style="left:1834.0px;top:650px;width:1.2px;height:3.8px;background:#777;"></div>
<div class="a" style="left:1844.9px;top:650px;width:1.2px;height:3.8px;background:#777;"></div>
<div class="a" style="left:1855.8px;top:646px;width:1.2px;height:7.8px;background:#8a8a8a;"></div>
<div class="a" style="left:1866.6px;top:650px;width:1.2px;height:3.8px;background:#777;"></div>
<div class="a" style="left:1877.5px;top:650px;width:1.2px;height:3.8px;background:#777;"></div>
<div class="a" style="left:1888.4px;top:650px;width:1.2px;height:3.8px;background:#777;"></div>
<div class="t" style="left: 981.8px; top: 632.74px; font-size: 12px; color: rgb(220, 220, 220); transform: scaleX(1); transform-origin: 0px 0px;">0</div>
<div class="t" style="left: 1032.6px; top: 632.74px; font-size: 12px; color: rgb(220, 220, 220); transform: scaleX(1.0769); transform-origin: 0px 0px;">15</div>
<div class="t" style="left: 1087px; top: 632.74px; font-size: 12px; color: rgb(220, 220, 220); transform: scaleX(1.0769); transform-origin: 0px 0px;">30</div>
<div class="t" style="left: 1141.3px; top: 632.74px; font-size: 12px; color: rgb(220, 220, 220); transform: scaleX(1.0769); transform-origin: 0px 0px;">45</div>
<div class="t" style="left: 1195.6px; top: 632.74px; font-size: 12px; color: rgb(220, 220, 220); transform: scaleX(1.0769); transform-origin: 0px 0px;">60</div>
<div class="t" style="left: 1250px; top: 632.74px; font-size: 12px; color: rgb(220, 220, 220); transform: scaleX(1.0769); transform-origin: 0px 0px;">75</div>
<div class="t" style="left: 1304.3px; top: 632.74px; font-size: 12px; color: rgb(220, 220, 220); transform: scaleX(1.0769); transform-origin: 0px 0px;">90</div>
<div class="t" style="left: 1356.3px; top: 632.74px; font-size: 12px; color: rgb(220, 220, 220); transform: scaleX(1.05); transform-origin: 0px 0px;">105</div>
<div class="t" style="left: 1410.6px; top: 632.74px; font-size: 12px; color: rgb(220, 220, 220); transform: scaleX(1.05); transform-origin: 0px 0px;">120</div>
<div class="t" style="left: 1465px; top: 632.74px; font-size: 12px; color: rgb(220, 220, 220); transform: scaleX(1.05); transform-origin: 0px 0px;">135</div>
<div class="t" style="left: 1519.3px; top: 632.74px; font-size: 12px; color: rgb(220, 220, 220); transform: scaleX(1.05); transform-origin: 0px 0px;">150</div>
<div class="t" style="left: 1573.6px; top: 632.74px; font-size: 12px; color: rgb(220, 220, 220); transform: scaleX(1.05); transform-origin: 0px 0px;">165</div>
<div class="t" style="left: 1628px; top: 632.74px; font-size: 12px; color: rgb(220, 220, 220); transform: scaleX(1.05); transform-origin: 0px 0px;">180</div>
<div class="t" style="left: 1682.3px; top: 632.74px; font-size: 12px; color: rgb(220, 220, 220); transform: scaleX(1.05); transform-origin: 0px 0px;">195</div>
<div class="t" style="left: 1736.6px; top: 632.74px; font-size: 12px; color: rgb(220, 220, 220); transform: scaleX(1.05); transform-origin: 0px 0px;">210</div>
<div class="t" style="left: 1790.9px; top: 632.74px; font-size: 12px; color: rgb(220, 220, 220); transform: scaleX(1.05); transform-origin: 0px 0px;">225</div>
<div class="t" style="left: 1845.3px; top: 632.74px; font-size: 12px; color: rgb(220, 220, 220); transform: scaleX(1.05); transform-origin: 0px 0px;">240</div>
<div class="t" style="left: 1900.2px; top: 632.74px; font-size: 12px; color: rgb(90, 90, 90); transform: scaleX(1.0385); transform-origin: 0px 0px;">25</div>
<div class="a" style="left:987px;top:653.8px;width:905px;height:17px;background:#454545;"></div>
<div class="a" style="left:982px;top:653px;width:5px;height:18px;background:#7cc8b0;border-radius:1px"></div>
<div class="a" style="left:1892px;top:653px;width:5.5px;height:18px;background:#7cc8b0;border-radius:1px"></div>
<div class="a" style="left:987px;top:674px;width:905px;height:18px;background:repeating-linear-gradient(135deg,#8cfcb8 0px,#72e098 1.6px,#72e098 12.6px,#8cfcb8 12.6px,#64cb8c 14.2px,#64cb8c 25.2px);background-position:-3px 0"></div>
<div class="t" style="left: 995px; top: 675.9px; font-size: 13px; color: rgb(38, 38, 38); transform: scaleX(0.9308); transform-origin: 0px 0px;">Color Array</div>
<div class="a" style="left:987px;top:696px;width:905px;height:18px;background:repeating-linear-gradient(135deg,#eaff94 0px,#cdf07e 1.6px,#cdf07e 12.6px,#eaff94 12.6px,#b8d970 14.2px,#b8d970 25.2px);background-position:-3px 0"></div>
<div class="t" style="left: 995px; top: 697.9px; font-size: 13px; color: rgb(38, 38, 38); transform: scaleX(0.8967); transform-origin: 0px 0px;">Random [Index]</div>
<div class="a" style="left:987px;top:718px;width:905px;height:18px;border:1.5px solid #fafae8;background:radial-gradient(circle,rgba(140,185,75,0.6) 0.9px,transparent 1.2px) 0 0/3px 3px,repeating-linear-gradient(135deg,#e8fba8 0px,#e0f4a0 1.6px,#e0f4a0 12.6px,#e8fba8 12.6px,#d8ee98 14.2px,#d8ee98 25.2px)"></div>
<div class="t" style="left: 995px; top: 719.9px; font-size: 13px; color: rgb(38, 38, 38); transform: scaleX(0.9162); transform-origin: 0px 0px;">Oscillator [Position.Z] Cosine</div>
<div class="a" style="left:987px;top:740px;width:905px;height:18px;background:repeating-linear-gradient(135deg,#eaff94 0px,#cdf07e 1.6px,#cdf07e 12.6px,#eaff94 12.6px,#b8d970 14.2px,#b8d970 25.2px);background-position:-3px 0"></div>
<div class="t" style="left: 995px; top: 741.9px; font-size: 13px; color: rgb(38, 38, 38); transform: scaleX(0.9085); transform-origin: 0px 0px;">Oscillator [Position.X] Sine</div>
<div class="a" style="left:987px;top:762px;width:905px;height:18px;background:#ffe47c;border-radius:0 3px 3px 0"></div>
<div class="t" style="left: 995px; top: 763.9px; font-size: 13px; color: rgb(38, 38, 38); transform: scaleX(0.85); transform-origin: 0px 0px;">Ellipse Shape</div>
<div class="a" style="left:1265px;top:653px;width:1.2px;height:307px;background:#6fc6a8;"></div>
<svg class="a" style="left:1258px;top:643.5px;" width="15" height="8.5" viewBox="0 0 15 8.5"><path d="M0 0 H15 L7.5 8.5Z" fill="#6fc6a8"></path></svg>
<div class="a" style="left:963px;top:960px;width:951px;height:16.4px;background:#2a2a2a;"></div>
<div class="a" style="left:966.2px;top:964.4px;width:946px;height:9.3px;background:#4a4a4a;border-radius:5px"></div>
<div class="a" style="left:963px;top:976.4px;width:951px;height:21px;background:#454545;"></div>
<div class="a" style="left:969.2px;top:978px;width:17.6px;height:18px;background:#2e2e2e;border-radius:3px;border:1px solid #222"></div>
<svg class="a" style="left:972px;top:981px;" width="12" height="12" viewBox="0 0 12 12"><path d="M0 1 H12 M2 4.5 H10 M0 8 H12" stroke="#cfcfcf" stroke-width="1.3"></path><path d="M2 11 H4 M6 11 H8" stroke="#cfcfcf" stroke-width="1"></path></svg>
<div class="a" style="left:983px;top:992px;width:3px;height:3px;background:#5cc8a0;clip-path:polygon(100% 0,100% 100%,0 100%)"></div>
<div class="a" style="left:989.4px;top:978.5px;width:150px;height:17px;background:#2b2b2b;border-radius:3px"></div>
<div class="t" style="left: 991.7px; top: 981.1px; font-size: 13px; color: rgb(230, 230, 230); transform: scaleX(0.9029); transform-origin: 0px 0px;">Default Keyframe Layer</div>
<div class="a" style="left:1146.2px;top:978.5px;width:69.5px;height:17px;background:#2b2b2b;border-radius:3px"></div>
<div class="t" style="left: 1151px; top: 981.94px; font-size: 12px; color: rgb(85, 85, 85); transform: scaleX(0.9286); transform-origin: 0px 0px;">F</div>
<div class="t" style="left: 1162px; top: 981.1px; font-size: 13px; color: rgb(224, 224, 224); transform: scaleX(1); transform-origin: 0px 0px;">-</div>
<div class="t" style="left: 1221.75px; top: 981.1px; font-size: 13px; color: rgb(230, 230, 230); transform: scaleX(0.9091); transform-origin: 0px 0px;">Align:</div>
<div class="a" style="left:1258.1px;top:978px;width:52.5px;height:18px;background:#2c2c2c;border-radius:3px;border:1px solid #222"></div>
<svg class="a" style="left:1260.0px;top:981px;" width="13" height="12" viewBox="0 0 13 12"><path d="M1 1 V11 M3.5 3 H8 M3.5 8 H11" stroke="#ddd" stroke-width="1.3" stroke-dasharray="2 1"></path></svg>
<svg class="a" style="left:1277.5px;top:981px;" width="13" height="12" viewBox="0 0 13 12"><path d="M6.5 0 V12 M2 3.5 H11 M1 8.5 H12" stroke="#ddd" stroke-width="1.3" stroke-dasharray="2 1"></path></svg>
<svg class="a" style="left:1295.0px;top:981px;" width="13" height="12" viewBox="0 0 13 12"><path d="M12 1 V11 M4 3 H9.5 M1 8 H9.5" stroke="#ddd" stroke-width="1.3" stroke-dasharray="2 1"></path></svg>
<div class="a" style="left:1315.1px;top:978px;width:17.3px;height:18px;background:#2c2c2c;border-radius:3px;border:1px solid #222"></div>
<svg class="a" style="left:1318px;top:981px;" width="12" height="12" viewBox="0 0 12 12"><rect x="1" y="1" width="10" height="10" fill="none" stroke="#ddd" stroke-dasharray="2 1.5"></rect><rect x="4" y="4" width="4" height="4" fill="#ddd"></rect></svg>
<div class="a" style="left:1336.1px;top:978px;width:30.8px;height:18px;background:#2c2c2c;border-radius:3px;border:1px solid #222"></div>
<svg class="a" style="left:1338.5px;top:980.5px;" width="13" height="13" viewBox="0 0 13 13"><g transform="rotate(-40 6.5 6.5)"><path d="M2.5 11 V6.5 A4 4 0 0 1 10.5 6.5 V11" fill="none" stroke="#d8d8d8" stroke-width="2.2" stroke-linecap="round"></path></g></svg>
<svg class="a" style="left:1357px;top:983px;" width="6" height="8" viewBox="0 0 6 8"><path d="M0.5 0.5 L5.5 4 L0.5 7.5Z" fill="none" stroke="#8a8a8a" stroke-width="0.9"></path></svg>
<div class="a" style="left:1371.4px;top:978px;width:31.1px;height:18px;background:#2c2c2c;border-radius:3px;border:1px solid #222"></div>
<svg class="a" style="left:1374px;top:981px;" width="14" height="12" viewBox="0 0 14 12"><path d="M0 6 H14 M4 2 V10 M7 0 V12 M10 3 V9" stroke="#d8d8d8" stroke-width="1.1"></path></svg>
<svg class="a" style="left:1393px;top:983px;" width="6" height="8" viewBox="0 0 6 8"><path d="M0.5 0.5 L5.5 4 L0.5 7.5Z" fill="none" stroke="#8a8a8a" stroke-width="0.9"></path></svg>
<svg class="a" style="left:1743px;top:980px;" width="14" height="14" viewBox="0 0 14 14"><circle cx="6" cy="6" r="5" fill="none" stroke="#cfcfcf" stroke-width="1.2"></circle><path d="M3.5 6 H8.5" stroke="#cfcfcf" stroke-width="1.2"></path><path d="M9.5 9.5 L13 13" stroke="#cfcfcf" stroke-width="2"></path></svg>
<div class="a" style="left:1767px;top:985px;width:115px;height:3px;background:#3a3a3a;border-radius:2px"></div>
<div class="a" style="left:1761.5px;top:981.5px;width:11px;height:11px;border-radius:50%;background:#5fb39a;border:1.5px solid #3f7f6c"></div>
<svg class="a" style="left:1887px;top:980px;" width="14" height="14" viewBox="0 0 14 14"><circle cx="6" cy="6" r="5" fill="none" stroke="#cfcfcf" stroke-width="1.2"></circle><path d="M3.5 6 H8.5 M6 3.5 V8.5" stroke="#cfcfcf" stroke-width="1.2"></path><path d="M9.5 9.5 L13 13" stroke="#cfcfcf" stroke-width="2"></path></svg>
<div class="a" style="left:494px;top:997.4px;width:1420px;height:6.3px;background:#141414;"></div>
<div class="a" style="left:494px;top:1003.7px;width:1420px;height:22.5px;background:#3c3c3c;"></div>
<div class="a" style="left:498.5px;top:1010px;width:1.5px;height:2px;background:#8a8a8a;"></div>
<div class="a" style="left:498.5px;top:1014px;width:1.5px;height:2px;background:#8a8a8a;"></div>
<div class="a" style="left:498.5px;top:1018px;width:1.5px;height:2px;background:#8a8a8a;"></div>
<div class="a" style="left:507.6px;top:1006px;width:16.2px;height:17px;background:#2a2a2a;border-radius:3px"></div>
<svg class="a" style="left:510px;top:1009px;" width="12" height="11" viewBox="0 0 12 11"><path d="M0.5 0.5 H11.5 V8 H4 L1.5 10.5 V8 H0.5Z" fill="none" stroke="#ddd" stroke-width="1.1"></path><path d="M2.5 3 H9.5 M2.5 5.5 H9.5" stroke="#ddd" stroke-width="1"></path></svg>
<div class="a" style="left:528.2px;top:1008.2px;width:18px;height:13.5px;background:#2ecc5a;border-radius:2px"></div>
<div class="t" style="left: 534px; top: 1009.19px; font-size: 11px; color: rgb(20, 54, 31); transform: scaleX(0.9167); transform-origin: 0px 0px;">1</div>
<div class="a" style="left:554px;top:1012px;width:5.5px;height:5.5px;border-radius:50%;background:#2ecc5a"></div>
<div class="t" style="left: 565px; top: 1008.5px; font-size: 13px; color: rgb(224, 224, 224); transform: scaleX(0.906); transform-origin: 0px 0px;">Connected:</div>
<div class="t" style="left: 628px; top: 1008.5px; font-size: 13px; color: rgb(207, 111, 224); transform: scaleX(0.9072); transform-origin: 0px 0px;">Oscillator [Position.Z] Cosine</div>
<div class="t" style="left: 782.5px; top: 1008.5px; font-size: 13px; color: rgb(224, 224, 224); transform: scaleX(1.0182); transform-origin: 0px 0px;">to</div>
<div class="t" style="left: 796.3px; top: 1008.5px; font-size: 13px; color: rgb(214, 191, 124); transform: scaleX(0.8962); transform-origin: 0px 0px;">Oscillator [Position.X] Sine.</div>
<div class="t" style="left: 1482px; top: 1008.5px; font-size: 13px; color: rgb(216, 216, 216); font-style: italic; transform: scaleX(0.8013); transform-origin: 0px 0px;">Click to see next message</div>
<div class="a" style="left:1609.8px;top:1006.4px;width:79.5px;height:16.8px;background:#d9c878;border-radius:2px"></div>
<div class="t" style="left: 1615.5px; top: 1008.5px; font-size: 13px; color: rgb(42, 42, 42); transform: scaleX(0.8684); transform-origin: 0px 0px;">Feedback</div>
<svg class="a" style="left:1671px;top:1009px;" width="12" height="12" viewBox="0 0 12 12"><rect x="1" y="1" width="9" height="10" fill="#f0f0f0"></rect><path d="M3 9 L10 2" stroke="#e86060" stroke-width="2"></path></svg>
<div class="a" style="left:1693px;top:1006.4px;width:108.8px;height:16.8px;background:#2fcc68;border-radius:2px"></div>
<div class="t" style="left: 1698.7px; top: 1008.5px; font-size: 13px; color: rgb(30, 46, 34); transform: scaleX(0.8943); transform-origin: 0px 0px;">Upgrade to Pro</div>
<svg class="a" style="left:1781px;top:1009px;" width="14" height="11" viewBox="0 0 14 11"><ellipse cx="3.5" cy="6" rx="3.2" ry="4.5" fill="#f5c842"></ellipse><ellipse cx="10.5" cy="6" rx="3.2" ry="4.5" fill="#f5c842"></ellipse></svg>
<div class="a" style="left:1804.8px;top:1006.4px;width:105.7px;height:16.8px;background:#3aa2f2;border-radius:2px"></div>
<div class="t" style="left: 1810px; top: 1008.5px; font-size: 13px; color: rgb(16, 36, 58); transform: scaleX(0.8736); transform-origin: 0px 0px;">Tips and Tricks</div>
<svg class="a" style="left:1890px;top:1008px;" width="13" height="13" viewBox="0 0 13 13"><path d="M12 1 Q6 1 3 7 L6 10 Q12 7 12 1Z" fill="#e8e8e8"></path><path d="M3 7 L0.5 8 L2.5 10.5 Z M6 10 L5 12.5 L2.5 10.5Z" fill="#e86a50"></path></svg>
<div class="a" style="left:0px;top:1026.2px;width:1920px;height:3.8px;background:#1e1e1e;"></div>
<svg class="a" style="left:1373px;top:51px;" width="27" height="27" viewBox="0 0 27 27"><circle cx="5.8" cy="5.4" r="1.4" fill="#e6d67a"></circle><circle cx="5.8" cy="13" r="1.4" fill="#e6d67a"></circle><circle cx="5.8" cy="20.4" r="1.4" fill="#e6d67a"></circle><circle cx="13.6" cy="5.4" r="1.4" fill="#e6d67a"></circle><circle cx="13.6" cy="13" r="1.4" fill="#e6d67a"></circle><circle cx="13.6" cy="20.4" r="1.4" fill="#e6d67a"></circle><circle cx="21.1" cy="5.4" r="1.4" fill="#e6d67a"></circle><circle cx="21.1" cy="13" r="1.4" fill="#e6d67a"></circle><circle cx="21.1" cy="20.4" r="1.4" fill="#e6d67a"></circle></svg>
<svg class="a" style="left:1403px;top:51px;" width="27" height="27" viewBox="0 0 27 27"><path d="M4.4 9 L8.5 4.4 H22.6 L17.8 9Z" fill="#d8d8d8"></path><path d="M17.8 9 L22.6 4.4 V17 L17.8 21.4Z" fill="#bdbdbd"></path><rect x="4.4" y="9" width="13.4" height="12.4" fill="#e6d67a"></rect></svg>
<svg class="a" style="left:1433px;top:51px;" width="27" height="27" viewBox="0 0 27 27"><rect x="4" y="3.5" width="19" height="19" rx="5" fill="none" stroke="#e0e0e0" stroke-width="1.1"></rect><path d="M9.5 8 V19 M9.5 9 H17 M9.5 13.5 H15" stroke="#e6d67a" stroke-width="2.4"></path></svg>
<svg class="a" style="left:1463px;top:51px;" width="27" height="27" viewBox="0 0 27 27"><circle cx="6.9" cy="6.4" r="1.4" fill="#e6d67a"></circle><circle cx="17.8" cy="5.4" r="1.4" fill="#cfcfcf"></circle><circle cx="12" cy="9.3" r="1.4" fill="#cfcfcf"></circle><circle cx="21.2" cy="13.4" r="2.4" fill="#e6d67a"></circle><circle cx="13" cy="16.3" r="2.4" fill="#cfcfcf"></circle><circle cx="5.7" cy="17.5" r="1.4" fill="#e6d67a"></circle><circle cx="18.8" cy="21.4" r="1.4" fill="#e6d67a"></circle></svg>
<svg class="a" style="left:1497px;top:51px;" width="27" height="27" viewBox="0 0 27 27"><path d="M3 13 H19" stroke="#7dd88a" stroke-width="1.6" stroke-dasharray="2.5 2"></path><path d="M15 8 L21 13 L15 18" fill="none" stroke="#7dd88a" stroke-width="1.8"></path></svg>
<svg class="a" style="left:1527px;top:51px;" width="27" height="27" viewBox="0 0 27 27"><path d="M4.5 3 V23" stroke="#e0e0e0" stroke-width="1.1"></path><rect x="8" y="6" width="9" height="5" fill="#98e0a0"></rect><rect x="8" y="14.5" width="14" height="5.5" fill="#98e0a0"></rect></svg>
<svg class="a" style="left:1563px;top:51px;" width="27" height="27" viewBox="0 0 27 27"><path d="M13.5 5 V22 M5 13.5 H22" stroke="#555" stroke-width="1.5"></path><circle cx="13.5" cy="5.5" r="2.1" fill="#a6d6ff"></circle><circle cx="13.5" cy="21.5" r="2.1" fill="#a6d6ff"></circle><circle cx="5.5" cy="13.5" r="2.1" fill="#a6d6ff"></circle><circle cx="21.5" cy="13.5" r="2.1" fill="#a6d6ff"></circle><circle cx="13.5" cy="13.5" r="2.1" fill="#a6d6ff"></circle></svg>
<svg class="a" style="left:1593px;top:51px;" width="27" height="27" viewBox="0 0 27 27"><path d="M6 13.5 H21" stroke="#555" stroke-width="1.5"></path><circle cx="6" cy="13.5" r="2.1" fill="#a6d6ff"></circle><circle cx="13.5" cy="13.5" r="2.1" fill="#a6d6ff"></circle><circle cx="21" cy="13.5" r="2.1" fill="#a6d6ff"></circle></svg>
<svg class="a" style="left:1623px;top:51px;" width="27" height="27" viewBox="0 0 27 27"><path d="M16 5 A8.5 8.5 0 0 0 16 22" fill="none" stroke="#d0d0d0" stroke-width="1.8"></path><path d="M16 2.5 V7.5 M13.5 5 H18.5 M16 19.5 V24.5 M13.5 22 H18.5" stroke="#7dd88a" stroke-width="1.3"></path></svg>
<svg class="a" style="left:1653px;top:51px;" width="27" height="27" viewBox="0 0 27 27"><path d="M3 8.5 H24 M3 18.5 H24" stroke="#e0e0e0" stroke-width="1"></path><rect x="3" y="10.5" width="4" height="6" fill="#e6d67a"></rect><rect x="9" y="10.5" width="8" height="6" fill="#e6d67a"></rect><rect x="19" y="10.5" width="5" height="6" fill="#e6d67a"></rect></svg>
<svg class="a" style="left:1687px;top:51px;" width="27" height="27" viewBox="0 0 27 27"><path d="M5 10 L17 6.5 M12 8 L14 19" stroke="#e6d67a" stroke-width="3.2"></path><path d="M5 21 Q9 24 14 22 Q20 20 23 23.5" fill="none" stroke="#aaa" stroke-width="1"></path></svg>
<svg class="a" style="left:1723px;top:51px;" width="27" height="27" viewBox="0 0 27 27"><path d="M3.5 5 H24" stroke="#a6d6ff" stroke-width="1.8"></path><rect x="3.8" y="8" width="3.8" height="3.8" fill="#d8d8d8"></rect><rect x="8.6" y="13" width="8.8" height="3.8" fill="#d8d8d8"></rect><rect x="18.6" y="18" width="5" height="3.8" fill="#d8d8d8"></rect></svg>
<svg class="a" style="left:1753px;top:51px;" width="27" height="27" viewBox="0 0 27 27"><path d="M3.5 5 H23.5" stroke="#a6d6ff" stroke-width="1.8"></path><rect x="3.5" y="8.5" width="12" height="3.8" fill="#d8d8d8"></rect><rect x="7.5" y="13.5" width="12" height="3.8" fill="#d8d8d8"></rect><rect x="12.5" y="18.5" width="11" height="3.8" fill="#d8d8d8"></rect></svg>
<svg class="a" style="left:1787px;top:51px;" width="27" height="27" viewBox="0 0 27 27"><rect x="3.3" y="5.4" width="20.8" height="15" fill="#1c1c2a" stroke="#e0e0e0" stroke-width="1"></rect><rect x="5.5" y="8" width="4" height="10" fill="#e6d67a"></rect><rect x="11.6" y="8" width="4" height="10" fill="#e6d67a"></rect><rect x="17.7" y="8" width="4" height="10" fill="#e6d67a"></rect></svg>
<svg class="a" style="left:1817px;top:51px;" width="27" height="27" viewBox="0 0 27 27"><rect x="3.3" y="5.4" width="20.8" height="15" fill="#1c1c2a" stroke="#e0e0e0" stroke-width="1"></rect><rect x="5.8" y="8" width="16" height="4" fill="#e6d67a"></rect><rect x="5.8" y="14" width="16" height="4" fill="#e6d67a"></rect></svg>
<svg class="a" style="left:1847px;top:51px;" width="27" height="27" viewBox="0 0 27 27"><rect x="3.3" y="5.4" width="20.8" height="15" fill="#1c1c2a" stroke="#e0e0e0" stroke-width="1"></rect><rect x="5.5" y="8" width="7" height="4" fill="#e6d67a"></rect><rect x="14.5" y="8" width="7" height="4" fill="#e6d67a"></rect><rect x="5.5" y="14" width="7" height="4" fill="#e6d67a"></rect><rect x="14.5" y="14" width="7" height="4" fill="#e6d67a"></rect></svg>
<svg class="a" style="left:1883px;top:51px;" width="27" height="27" viewBox="0 0 27 27"><rect x="5.3" y="6" width="8.2" height="1.2" fill="#d8d8d8"></rect><path d="M3.3 8 H16.2 V17 L14.5 18.9 H3.3Z" fill="#d8d8d8"></path><circle cx="6" cy="10.5" r="1.2" fill="#333"></circle><path d="M17.3 13.5 L23.6 9 V19 Z" fill="#d8d8d8"></path></svg>
<div class="a" style="left:282px;top:516.6px;width:421.8px;height:29.4px;background:#2b2b2b;border-radius:2px"></div>
<svg class="a" style="left:273px;top:523px;" width="10" height="18" viewBox="0 0 10 18"><path d="M10 0 L0.5 9 L10 18Z" fill="#2b2b2b"></path></svg>
<div class="a" style="left:286.4px;top:519.4px;width:413.6px;height:23.4px;background:#4a4a4a;border-radius:3px"></div>
<svg class="a" style="left:291.0px;top:528.0px;" width="6" height="8" viewBox="0 0 6 8"><path d="M0 4 L2.6 0.3 H6 V7.7 H2.6Z" fill="#d4b96a"></path></svg>
<div class="t" style="left: 302px; top: 524.6px; font-size: 13px; color: rgb(230, 230, 230); transform: scaleX(0.9215); transform-origin: 0px 0px;">[Self].Minimum</div>
<div class="t" style="left: 523.4px; top: 519.92px; font-size: 19px; color: rgb(180, 228, 30); font-weight: bold; transform: scaleX(1.0349); transform-origin: 0px 0px;">Hapus ini</div>
<svg class="a" style="left:683.5px;top:526.6px;" width="9" height="9" viewBox="0 0 9 9"><path d="M0.5 0.5 L8.5 8.5 M8.5 0.5 L0.5 8.5" stroke="#e0e0e0" stroke-width="1.2"></path></svg>
<div class="a" style="left:866.6px;top:559.5px;width:99.2px;height:19px;background:#2a2a2a;border-radius:4px;border:1px solid #222"></div>
<div class="a" style="left:886.44px;top:560px;width:1px;height:18px;background:#222;"></div>
<div class="a" style="left:906.28px;top:560px;width:1px;height:18px;background:#222;"></div>
<div class="a" style="left:926.12px;top:560px;width:1px;height:18px;background:#222;"></div>
<div class="a" style="left:945.96px;top:560px;width:1px;height:18px;background:#222;"></div>
<div class="a" style="left:971px;top:559.5px;width:19.6px;height:19px;background:#2a2a2a;border-radius:4px;border:1px solid #222"></div>
<div class="a" style="left:689.3px;top:540.3px;width:306.7px;height:31.3px;background:#262626;box-shadow:0 1px 3px rgba(0,0,0,0.6);border:1px solid #3a3a3a"></div>
<div class="t" style="left: 691.6px; top: 541.8px; font-size: 13px; color: rgb(216, 216, 216); transform: scaleX(0.8912); transform-origin: 0px 0px;">Disconnect.</div>
<div class="t" style="left: 691.6px; top: 556.25px; font-size: 13px; color: rgb(216, 216, 216); transform: scaleX(0.8926); transform-origin: 0px 0px;">Hold CTRL to keep this popover open when disconnecting.</div>
<div class="a" style="left:134px;top:513px;width:580.6px;height:37px;border:3.3px solid #b4e41e"></div></body></html>
